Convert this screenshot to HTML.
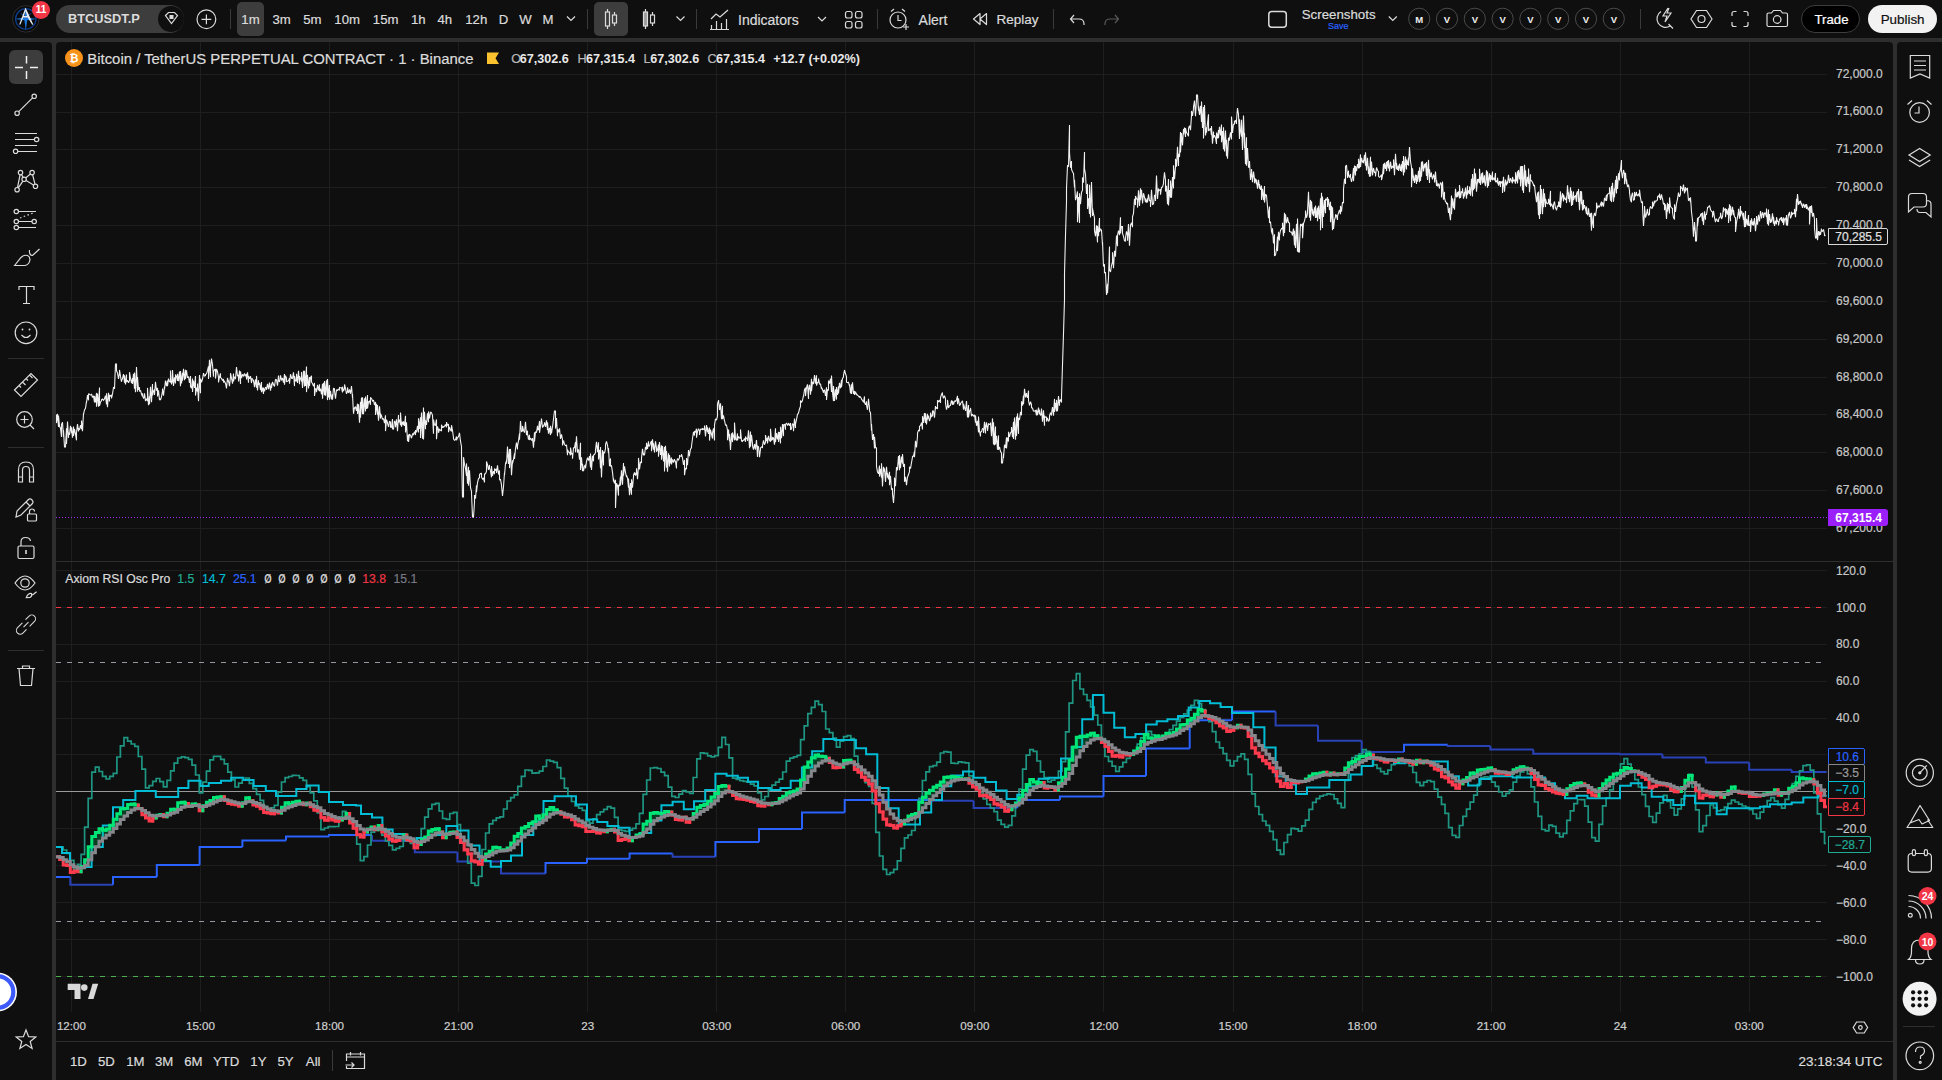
<!DOCTYPE html><html><head><meta charset="utf-8"><style>
html,body{margin:0;padding:0;}
body{width:1942px;height:1080px;overflow:hidden;background:#2e2e2e;position:relative;font-family:"Liberation Sans", sans-serif;}
.p{position:absolute;background:#0f0f0f;}
.t{position:absolute;white-space:nowrap;font-family:"Liberation Sans", sans-serif;-webkit-text-stroke:0.2px currentColor;}
#ch{position:absolute;left:0;top:0;}
.ic{position:absolute;}

</style></head><body>
<div class="p" style="left:0;top:0;width:1942px;height:38px;"></div>
<div class="p" style="left:0;top:42px;width:52px;height:1038px;border-top-right-radius:4px;"></div>
<div class="p" style="left:56px;top:42px;width:1837px;height:1038px;border-top-left-radius:4px;border-top-right-radius:4px;"></div>
<div class="p" style="left:1897px;top:42px;width:45px;height:1038px;border-top-left-radius:4px;"></div>
<svg id="ch" width="1942" height="1080" viewBox="0 0 1942 1080"><defs><clipPath id="cp"><rect x="56" y="42" width="1771" height="1000"/></clipPath></defs><g clip-path="url(#cp)"><line x1="56" y1="74.5" x2="1827" y2="74.5" stroke="#1e1e1e" stroke-width="1"/><line x1="56" y1="112.5" x2="1827" y2="112.5" stroke="#1e1e1e" stroke-width="1"/><line x1="56" y1="149.5" x2="1827" y2="149.5" stroke="#1e1e1e" stroke-width="1"/><line x1="56" y1="187.5" x2="1827" y2="187.5" stroke="#1e1e1e" stroke-width="1"/><line x1="56" y1="225.5" x2="1827" y2="225.5" stroke="#1e1e1e" stroke-width="1"/><line x1="56" y1="263.5" x2="1827" y2="263.5" stroke="#1e1e1e" stroke-width="1"/><line x1="56" y1="301.5" x2="1827" y2="301.5" stroke="#1e1e1e" stroke-width="1"/><line x1="56" y1="339.5" x2="1827" y2="339.5" stroke="#1e1e1e" stroke-width="1"/><line x1="56" y1="377.5" x2="1827" y2="377.5" stroke="#1e1e1e" stroke-width="1"/><line x1="56" y1="414.5" x2="1827" y2="414.5" stroke="#1e1e1e" stroke-width="1"/><line x1="56" y1="452.5" x2="1827" y2="452.5" stroke="#1e1e1e" stroke-width="1"/><line x1="56" y1="490.5" x2="1827" y2="490.5" stroke="#1e1e1e" stroke-width="1"/><line x1="56" y1="528.5" x2="1827" y2="528.5" stroke="#1e1e1e" stroke-width="1"/><line x1="56" y1="570.5" x2="1827" y2="570.5" stroke="#1e1e1e" stroke-width="1"/><line x1="56" y1="607.5" x2="1827" y2="607.5" stroke="#1e1e1e" stroke-width="1"/><line x1="56" y1="644.5" x2="1827" y2="644.5" stroke="#1e1e1e" stroke-width="1"/><line x1="56" y1="681.5" x2="1827" y2="681.5" stroke="#1e1e1e" stroke-width="1"/><line x1="56" y1="718.5" x2="1827" y2="718.5" stroke="#1e1e1e" stroke-width="1"/><line x1="56" y1="754.5" x2="1827" y2="754.5" stroke="#1e1e1e" stroke-width="1"/><line x1="56" y1="791.5" x2="1827" y2="791.5" stroke="#1e1e1e" stroke-width="1"/><line x1="56" y1="828.5" x2="1827" y2="828.5" stroke="#1e1e1e" stroke-width="1"/><line x1="56" y1="865.5" x2="1827" y2="865.5" stroke="#1e1e1e" stroke-width="1"/><line x1="56" y1="902.5" x2="1827" y2="902.5" stroke="#1e1e1e" stroke-width="1"/><line x1="56" y1="939.5" x2="1827" y2="939.5" stroke="#1e1e1e" stroke-width="1"/><line x1="56" y1="976.5" x2="1827" y2="976.5" stroke="#1e1e1e" stroke-width="1"/><line x1="71.5" y1="42" x2="71.5" y2="1012" stroke="#1e1e1e" stroke-width="1"/><line x1="200.5" y1="42" x2="200.5" y2="1012" stroke="#1e1e1e" stroke-width="1"/><line x1="329.5" y1="42" x2="329.5" y2="1012" stroke="#1e1e1e" stroke-width="1"/><line x1="458.5" y1="42" x2="458.5" y2="1012" stroke="#1e1e1e" stroke-width="1"/><line x1="587.5" y1="42" x2="587.5" y2="1012" stroke="#1e1e1e" stroke-width="1"/><line x1="716.5" y1="42" x2="716.5" y2="1012" stroke="#1e1e1e" stroke-width="1"/><line x1="845.5" y1="42" x2="845.5" y2="1012" stroke="#1e1e1e" stroke-width="1"/><line x1="974.5" y1="42" x2="974.5" y2="1012" stroke="#1e1e1e" stroke-width="1"/><line x1="1103.5" y1="42" x2="1103.5" y2="1012" stroke="#1e1e1e" stroke-width="1"/><line x1="1233.5" y1="42" x2="1233.5" y2="1012" stroke="#1e1e1e" stroke-width="1"/><line x1="1362.5" y1="42" x2="1362.5" y2="1012" stroke="#1e1e1e" stroke-width="1"/><line x1="1491.5" y1="42" x2="1491.5" y2="1012" stroke="#1e1e1e" stroke-width="1"/><line x1="1620.5" y1="42" x2="1620.5" y2="1012" stroke="#1e1e1e" stroke-width="1"/><line x1="1749.5" y1="42" x2="1749.5" y2="1012" stroke="#1e1e1e" stroke-width="1"/><line x1="56" y1="517.5" x2="1827" y2="517.5" stroke="#9c27ff" stroke-width="1" stroke-dasharray="1 2"/><path d="M56.5 414.5 L56.5 423.1 L57.5 413.7 L58.5 426.9 L58.5 415.5 L59.5 426.4 L60.5 428.1 L61.5 437.0 L61.5 424.3 L62.5 422.3 L63.5 436.6 L63.5 430.4 L64.5 447.0 L65.5 447.0 L66.5 428.2 L66.5 444.1 L67.5 421.6 L68.5 437.9 L68.5 432.6 L69.5 434.9 L70.5 425.8 L71.5 433.2 L71.5 427.2 L72.5 437.6 L73.5 426.5 L73.5 435.8 L74.5 428.8 L75.5 434.1 L76.5 440.3 L76.5 432.7 L77.5 424.1 L78.5 431.4 L78.5 428.5 L79.5 429.8 L80.5 425.0 L81.5 429.2 L81.5 420.5 L82.5 431.3 L83.5 413.2 L83.5 414.3 L84.5 410.0 L85.5 408.3 L86.5 401.3 L86.5 402.6 L87.5 395.1 L88.5 400.3 L88.5 393.7 L89.5 394.3 L90.5 395.0 L91.5 395.0 L91.5 393.8 L92.5 397.5 L93.5 395.9 L94.5 402.3 L94.5 395.9 L95.5 402.3 L96.5 392.9 L96.5 406.7 L97.5 393.5 L98.5 406.7 L99.5 387.6 L99.5 405.8 L100.5 402.0 L101.5 400.9 L101.5 399.8 L102.5 399.1 L103.5 400.3 L104.5 398.9 L104.5 398.7 L105.5 395.7 L106.5 404.5 L106.5 393.2 L107.5 407.3 L108.5 392.8 L109.5 401.4 L109.5 395.0 L110.5 396.1 L111.5 394.7 L111.5 398.5 L112.5 394.0 L113.5 387.4 L114.5 387.2 L114.5 388.9 L115.5 364.0 L116.5 364.0 L116.5 370.8 L117.5 373.0 L118.5 379.0 L119.5 372.9 L119.5 369.9 L120.5 376.4 L121.5 381.8 L121.5 381.1 L122.5 378.6 L123.5 374.0 L124.5 382.8 L124.5 375.3 L125.5 384.4 L126.5 374.6 L126.5 381.9 L127.5 380.3 L128.5 382.8 L129.5 380.4 L129.5 372.2 L130.5 378.2 L131.5 383.1 L132.5 378.0 L132.5 384.0 L133.5 373.9 L134.5 388.8 L134.5 372.5 L135.5 392.3 L136.5 367.1 L137.5 391.7 L137.5 377.0 L138.5 389.7 L139.5 387.3 L139.5 391.5 L140.5 390.4 L141.5 394.1 L142.5 396.5 L142.5 393.3 L143.5 398.6 L144.5 396.6 L144.5 393.2 L145.5 401.1 L146.5 398.6 L147.5 401.0 L147.5 387.9 L148.5 405.2 L149.5 396.2 L149.5 404.2 L150.5 386.8 L151.5 402.2 L152.5 384.1 L152.5 395.5 L153.5 391.1 L154.5 389.5 L154.5 395.0 L155.5 381.8 L156.5 390.7 L157.5 387.9 L157.5 396.5 L158.5 390.3 L159.5 400.1 L159.5 398.2 L160.5 400.0 L161.5 396.6 L162.5 391.0 L162.5 388.5 L163.5 395.7 L164.5 386.5 L164.5 389.2 L165.5 380.6 L166.5 386.2 L167.5 380.6 L167.5 386.2 L168.5 378.6 L169.5 381.5 L170.5 382.0 L170.5 370.5 L171.5 384.5 L172.5 380.1 L172.5 370.0 L173.5 385.9 L174.5 377.2 L175.5 383.5 L175.5 374.5 L176.5 376.7 L177.5 381.0 L177.5 373.7 L178.5 381.2 L179.5 371.6 L180.5 386.2 L180.5 371.0 L181.5 383.4 L182.5 372.7 L182.5 380.7 L183.5 368.7 L184.5 380.2 L185.5 369.8 L185.5 379.0 L186.5 370.3 L187.5 378.0 L187.5 377.7 L188.5 376.6 L189.5 382.8 L190.5 376.1 L190.5 386.5 L191.5 388.1 L192.5 378.6 L192.5 392.0 L193.5 380.5 L194.5 387.9 L195.5 376.1 L195.5 395.6 L196.5 387.6 L197.5 391.7 L197.5 383.6 L198.5 401.3 L199.5 375.1 L200.5 393.2 L200.5 378.6 L201.5 382.3 L202.5 379.0 L202.5 379.1 L203.5 373.1 L204.5 376.1 L205.5 375.7 L205.5 374.6 L206.5 373.8 L207.5 370.5 L208.5 366.3 L208.5 378.9 L209.5 359.8 L210.5 377.2 L210.5 369.6 L211.5 358.5 L212.5 364.5 L213.5 376.7 L213.5 372.0 L214.5 369.6 L215.5 369.4 L215.5 378.6 L216.5 369.0 L217.5 371.6 L218.5 377.4 L218.5 382.4 L219.5 376.8 L220.5 373.3 L220.5 377.6 L221.5 378.4 L222.5 380.6 L223.5 379.1 L223.5 382.4 L224.5 381.3 L225.5 383.5 L225.5 383.1 L226.5 388.5 L227.5 378.0 L228.5 382.0 L228.5 380.5 L229.5 386.2 L230.5 376.9 L230.5 373.2 L231.5 378.0 L232.5 383.7 L233.5 373.6 L233.5 381.3 L234.5 377.2 L235.5 376.6 L235.5 379.2 L236.5 367.1 L237.5 376.1 L238.5 375.1 L238.5 381.5 L239.5 370.6 L240.5 384.0 L240.5 371.4 L241.5 378.2 L242.5 374.4 L243.5 376.0 L243.5 376.5 L244.5 373.4 L245.5 376.3 L246.5 374.0 L246.5 379.4 L247.5 372.3 L248.5 382.7 L248.5 375.9 L249.5 378.7 L250.5 376.1 L251.5 383.1 L251.5 378.8 L252.5 378.8 L253.5 382.2 L253.5 379.9 L254.5 387.1 L255.5 379.4 L256.5 387.7 L256.5 375.9 L257.5 390.5 L258.5 380.2 L258.5 384.8 L259.5 382.7 L260.5 390.1 L261.5 382.0 L261.5 392.2 L262.5 387.5 L263.5 394.0 L263.5 387.6 L264.5 391.3 L265.5 387.4 L266.5 387.6 L266.5 389.8 L267.5 383.8 L268.5 388.8 L268.5 389.2 L269.5 382.5 L270.5 390.8 L271.5 383.5 L271.5 387.8 L272.5 381.9 L273.5 384.3 L273.5 384.7 L274.5 386.5 L275.5 379.2 L276.5 380.2 L276.5 379.9 L277.5 385.7 L278.5 375.6 L278.5 379.8 L279.5 381.9 L280.5 375.3 L281.5 380.6 L281.5 380.4 L282.5 378.0 L283.5 382.6 L284.5 374.0 L284.5 384.7 L285.5 375.6 L286.5 378.2 L286.5 381.8 L287.5 381.2 L288.5 380.7 L289.5 378.1 L289.5 383.7 L290.5 374.2 L291.5 377.5 L291.5 378.2 L292.5 378.4 L293.5 372.4 L294.5 386.1 L294.5 376.0 L295.5 380.8 L296.5 380.9 L296.5 373.8 L297.5 383.0 L298.5 370.8 L299.5 384.2 L299.5 376.3 L300.5 378.6 L301.5 381.7 L301.5 372.1 L302.5 387.9 L303.5 370.7 L304.5 386.4 L304.5 370.8 L305.5 386.0 L306.5 366.5 L306.5 392.1 L307.5 374.9 L308.5 388.4 L309.5 377.1 L309.5 386.0 L310.5 377.7 L311.5 375.8 L311.5 382.1 L312.5 383.5 L313.5 386.2 L314.5 383.0 L314.5 396.0 L315.5 388.7 L316.5 389.1 L316.5 392.2 L317.5 384.9 L318.5 390.3 L319.5 384.3 L319.5 391.3 L320.5 388.5 L321.5 394.4 L322.5 383.7 L322.5 398.7 L323.5 382.9 L324.5 395.3 L324.5 381.0 L325.5 395.8 L326.5 380.3 L327.5 400.1 L327.5 379.1 L328.5 397.5 L329.5 385.0 L329.5 399.7 L330.5 390.8 L331.5 399.5 L332.5 394.4 L332.5 399.8 L333.5 388.1 L334.5 388.8 L334.5 390.8 L335.5 398.7 L336.5 389.7 L337.5 390.8 L337.5 390.0 L338.5 389.2 L339.5 390.3 L339.5 387.5 L340.5 387.7 L341.5 387.8 L342.5 392.4 L342.5 386.7 L343.5 391.1 L344.5 388.4 L344.5 384.4 L345.5 388.4 L346.5 393.9 L347.5 391.1 L347.5 387.4 L348.5 392.8 L349.5 390.2 L349.5 389.3 L350.5 393.8 L351.5 386.1 L352.5 397.7 L352.5 394.4 L353.5 413.7 L354.5 407.3 L354.5 408.7 L355.5 406.6 L356.5 410.8 L357.5 403.7 L357.5 414.0 L358.5 404.4 L359.5 422.7 L360.5 401.9 L360.5 417.7 L361.5 397.6 L362.5 414.1 L362.5 397.2 L363.5 414.2 L364.5 398.3 L365.5 411.4 L365.5 396.6 L366.5 408.9 L367.5 395.1 L367.5 408.3 L368.5 401.8 L369.5 401.2 L370.5 404.8 L370.5 397.5 L371.5 398.5 L372.5 400.6 L372.5 401.5 L373.5 400.1 L374.5 405.1 L375.5 401.9 L375.5 415.0 L376.5 403.9 L377.5 414.6 L377.5 405.0 L378.5 420.8 L379.5 406.4 L380.5 418.6 L380.5 413.8 L381.5 415.7 L382.5 419.5 L382.5 418.4 L383.5 418.8 L384.5 423.0 L385.5 415.3 L385.5 431.1 L386.5 419.6 L387.5 422.3 L387.5 423.1 L388.5 426.8 L389.5 421.6 L390.5 422.0 L390.5 427.2 L391.5 427.1 L392.5 419.0 L392.5 428.8 L393.5 429.1 L394.5 420.9 L395.5 423.2 L395.5 427.3 L396.5 419.2 L397.5 431.2 L398.5 415.0 L398.5 422.6 L399.5 419.5 L400.5 425.1 L400.5 412.5 L401.5 426.8 L402.5 421.5 L403.5 425.0 L403.5 421.3 L404.5 426.0 L405.5 415.8 L405.5 432.5 L406.5 422.4 L407.5 441.2 L408.5 434.5 L408.5 441.9 L409.5 434.1 L410.5 435.4 L410.5 435.4 L411.5 438.2 L412.5 434.1 L413.5 435.0 L413.5 434.0 L414.5 431.6 L415.5 435.1 L415.5 430.1 L416.5 432.4 L417.5 425.9 L418.5 432.5 L418.5 418.3 L419.5 429.0 L420.5 417.2 L420.5 438.1 L421.5 412.4 L422.5 438.7 L423.5 407.4 L423.5 439.4 L424.5 411.7 L425.5 429.3 L425.5 420.4 L426.5 424.9 L427.5 413.4 L428.5 422.2 L428.5 411.4 L429.5 418.5 L430.5 412.1 L430.5 412.0 L431.5 412.9 L432.5 415.4 L433.5 433.8 L433.5 419.5 L434.5 424.9 L435.5 425.2 L436.5 419.4 L436.5 439.3 L437.5 426.3 L438.5 429.9 L438.5 432.8 L439.5 429.0 L440.5 430.4 L441.5 431.1 L441.5 424.7 L442.5 427.7 L443.5 426.2 L443.5 427.5 L444.5 426.2 L445.5 424.5 L446.5 427.3 L446.5 422.1 L447.5 425.3 L448.5 424.0 L448.5 432.2 L449.5 426.9 L450.5 430.0 L451.5 431.3 L451.5 425.2 L452.5 430.5 L453.5 437.7 L453.5 438.8 L454.5 440.2 L455.5 439.7 L456.5 436.4 L456.5 440.2 L457.5 437.7 L458.5 436.7 L458.5 436.5 L459.5 432.9 L460.5 441.1 L461.5 446.5 L461.5 454.3 L462.5 497.0 L463.5 497.0 L463.5 457.2 L464.5 464.2 L465.5 468.4 L466.5 475.9 L466.5 463.4 L467.5 483.6 L468.5 466.8 L468.5 485.8 L469.5 470.2 L470.5 487.6 L471.5 491.4 L471.5 493.3 L472.5 517.0 L473.5 517.0 L474.5 502.3 L474.5 495.1 L475.5 498.7 L476.5 485.3 L476.5 492.1 L477.5 482.6 L478.5 478.6 L479.5 477.7 L479.5 474.8 L480.5 473.5 L481.5 473.4 L481.5 477.0 L482.5 479.2 L483.5 478.3 L484.5 482.4 L484.5 474.0 L485.5 473.7 L486.5 471.1 L486.5 461.5 L487.5 464.7 L488.5 469.8 L489.5 464.9 L489.5 467.3 L490.5 470.9 L491.5 477.3 L491.5 466.1 L492.5 475.8 L493.5 471.1 L494.5 474.2 L494.5 468.5 L495.5 470.2 L496.5 468.9 L496.5 472.9 L497.5 465.2 L498.5 474.5 L499.5 470.5 L499.5 479.8 L500.5 479.4 L501.5 484.8 L501.5 485.5 L502.5 496.0 L503.5 486.7 L504.5 472.8 L504.5 475.3 L505.5 463.5 L506.5 460.7 L506.5 463.6 L507.5 446.5 L508.5 463.9 L509.5 449.0 L509.5 468.1 L510.5 448.9 L511.5 475.2 L512.5 460.2 L512.5 463.5 L513.5 459.5 L514.5 453.4 L514.5 459.0 L515.5 448.6 L516.5 442.6 L517.5 449.5 L517.5 445.9 L518.5 440.8 L519.5 433.5 L519.5 439.7 L520.5 421.0 L521.5 432.0 L522.5 430.7 L522.5 425.9 L523.5 430.4 L524.5 432.5 L524.5 432.8 L525.5 421.7 L526.5 435.2 L527.5 430.7 L527.5 433.5 L528.5 439.6 L529.5 434.8 L529.5 440.1 L530.5 437.9 L531.5 440.1 L532.5 439.5 L532.5 438.1 L533.5 447.6 L534.5 432.4 L534.5 441.5 L535.5 431.7 L536.5 432.6 L537.5 425.8 L537.5 429.9 L538.5 429.6 L539.5 421.1 L539.5 432.8 L540.5 426.0 L541.5 418.5 L542.5 427.8 L542.5 427.4 L543.5 425.9 L544.5 423.7 L544.5 422.3 L545.5 426.9 L546.5 420.3 L547.5 430.0 L547.5 422.4 L548.5 433.6 L549.5 427.8 L550.5 435.1 L550.5 425.7 L551.5 433.4 L552.5 426.6 L552.5 427.2 L553.5 419.0 L554.5 411.0 L555.5 411.0 L555.5 428.6 L556.5 418.1 L557.5 436.2 L557.5 428.8 L558.5 432.3 L559.5 428.3 L560.5 439.0 L560.5 438.5 L561.5 434.3 L562.5 439.6 L562.5 445.4 L563.5 440.5 L564.5 444.3 L565.5 445.7 L565.5 446.0 L566.5 444.8 L567.5 455.2 L567.5 449.7 L568.5 452.0 L569.5 452.5 L570.5 455.3 L570.5 447.6 L571.5 453.9 L572.5 453.4 L572.5 458.7 L573.5 447.8 L574.5 447.5 L575.5 442.0 L575.5 452.2 L576.5 436.2 L577.5 452.7 L577.5 450.7 L578.5 449.6 L579.5 459.8 L580.5 442.8 L580.5 469.9 L581.5 457.4 L582.5 471.3 L582.5 463.7 L583.5 471.2 L584.5 465.9 L585.5 464.8 L585.5 468.5 L586.5 461.3 L587.5 457.6 L588.5 460.6 L588.5 460.6 L589.5 456.0 L590.5 467.4 L590.5 453.6 L591.5 469.9 L592.5 455.9 L593.5 461.3 L593.5 455.0 L594.5 454.5 L595.5 452.6 L595.5 449.7 L596.5 441.7 L597.5 452.2 L598.5 442.2 L598.5 459.5 L599.5 449.8 L600.5 468.1 L600.5 447.0 L601.5 477.6 L602.5 450.0 L603.5 465.4 L603.5 451.7 L604.5 453.3 L605.5 448.6 L605.5 444.7 L606.5 441.3 L607.5 445.3 L608.5 453.1 L608.5 448.1 L609.5 466.2 L610.5 458.4 L610.5 466.1 L611.5 465.8 L612.5 472.4 L613.5 481.7 L613.5 478.7 L614.5 483.5 L615.5 479.8 L615.5 508.0 L616.5 483.2 L617.5 485.6 L618.5 495.6 L618.5 484.9 L619.5 486.2 L620.5 476.5 L620.5 485.4 L621.5 470.4 L622.5 484.6 L623.5 463.1 L623.5 475.8 L624.5 466.4 L625.5 472.3 L626.5 477.2 L626.5 475.4 L627.5 478.0 L628.5 487.6 L628.5 478.5 L629.5 495.3 L630.5 483.0 L631.5 494.8 L631.5 479.3 L632.5 487.8 L633.5 476.7 L633.5 475.2 L634.5 472.5 L635.5 475.6 L636.5 471.7 L636.5 468.3 L637.5 479.2 L638.5 466.5 L638.5 457.9 L639.5 469.4 L640.5 461.8 L641.5 463.0 L641.5 458.1 L642.5 448.9 L643.5 455.4 L643.5 453.8 L644.5 455.1 L645.5 446.7 L646.5 449.7 L646.5 442.8 L647.5 449.0 L648.5 441.2 L648.5 445.9 L649.5 446.0 L650.5 442.9 L651.5 441.0 L651.5 451.3 L652.5 439.3 L653.5 449.8 L653.5 443.3 L654.5 452.5 L655.5 441.4 L656.5 448.1 L656.5 451.7 L657.5 449.9 L658.5 444.5 L658.5 456.7 L659.5 442.0 L660.5 455.0 L661.5 445.3 L661.5 459.8 L662.5 446.1 L663.5 461.5 L664.5 446.9 L664.5 471.4 L665.5 445.8 L666.5 467.6 L666.5 451.0 L667.5 471.6 L668.5 453.3 L669.5 466.5 L669.5 455.1 L670.5 463.4 L671.5 457.5 L671.5 464.4 L672.5 459.3 L673.5 462.6 L674.5 459.1 L674.5 459.8 L675.5 461.7 L676.5 468.5 L676.5 462.9 L677.5 458.6 L678.5 459.9 L679.5 457.6 L679.5 455.6 L680.5 456.1 L681.5 456.2 L681.5 454.2 L682.5 458.1 L683.5 464.8 L684.5 459.9 L684.5 475.2 L685.5 468.1 L686.5 469.2 L686.5 458.0 L687.5 465.2 L688.5 450.0 L689.5 456.3 L689.5 454.9 L690.5 449.1 L691.5 447.6 L691.5 446.2 L692.5 438.5 L693.5 431.9 L694.5 435.6 L694.5 431.3 L695.5 432.0 L696.5 428.7 L696.5 437.7 L697.5 431.6 L698.5 428.6 L699.5 430.9 L699.5 435.0 L700.5 429.2 L701.5 429.1 L702.5 429.9 L702.5 428.2 L703.5 429.2 L704.5 429.7 L704.5 425.5 L705.5 436.5 L706.5 425.0 L707.5 432.3 L707.5 427.3 L708.5 434.0 L709.5 427.6 L709.5 440.6 L710.5 429.5 L711.5 434.3 L712.5 438.5 L712.5 433.0 L713.5 428.3 L714.5 440.4 L714.5 424.8 L715.5 418.9 L716.5 420.1 L717.5 416.2 L717.5 404.3 L718.5 400.0 L719.5 409.9 L719.5 410.1 L720.5 403.4 L721.5 419.3 L722.5 405.8 L722.5 419.0 L723.5 415.4 L724.5 421.1 L724.5 420.5 L725.5 425.1 L726.5 425.0 L727.5 430.4 L727.5 440.3 L728.5 429.6 L729.5 441.1 L729.5 434.0 L730.5 450.0 L731.5 433.2 L732.5 442.1 L732.5 432.5 L733.5 436.2 L734.5 440.3 L734.5 422.6 L735.5 438.9 L736.5 440.4 L737.5 433.4 L737.5 440.4 L738.5 436.4 L739.5 438.1 L740.5 438.3 L740.5 429.4 L741.5 440.8 L742.5 441.8 L742.5 440.7 L743.5 440.4 L744.5 438.5 L745.5 441.8 L745.5 436.6 L746.5 438.7 L747.5 438.8 L747.5 440.9 L748.5 430.4 L749.5 448.1 L750.5 431.6 L750.5 446.8 L751.5 434.7 L752.5 443.6 L752.5 445.9 L753.5 449.7 L754.5 444.2 L755.5 449.6 L755.5 448.0 L756.5 440.0 L757.5 456.9 L757.5 446.0 L758.5 446.8 L759.5 457.1 L760.5 449.1 L760.5 447.9 L761.5 447.0 L762.5 447.5 L762.5 445.6 L763.5 440.4 L764.5 444.7 L765.5 442.1 L765.5 435.0 L766.5 441.1 L767.5 437.7 L767.5 443.5 L768.5 435.8 L769.5 440.2 L770.5 441.8 L770.5 428.8 L771.5 440.4 L772.5 439.3 L772.5 437.2 L773.5 438.0 L774.5 444.7 L775.5 428.2 L775.5 442.3 L776.5 433.1 L777.5 439.4 L778.5 431.8 L778.5 442.0 L779.5 432.0 L780.5 443.4 L780.5 426.8 L781.5 438.1 L782.5 424.0 L783.5 436.1 L783.5 425.3 L784.5 424.0 L785.5 429.7 L785.5 424.8 L786.5 423.0 L787.5 425.1 L788.5 423.7 L788.5 423.0 L789.5 425.7 L790.5 423.1 L790.5 429.8 L791.5 428.9 L792.5 423.6 L793.5 425.1 L793.5 431.3 L794.5 418.6 L795.5 428.0 L795.5 424.2 L796.5 419.6 L797.5 414.3 L798.5 413.1 L798.5 412.9 L799.5 409.0 L800.5 406.3 L800.5 400.5 L801.5 402.5 L802.5 400.3 L803.5 395.5 L803.5 396.7 L804.5 389.6 L805.5 387.8 L805.5 396.1 L806.5 387.6 L807.5 384.4 L808.5 398.9 L808.5 390.6 L809.5 384.9 L810.5 394.6 L811.5 378.7 L811.5 391.2 L812.5 381.8 L813.5 383.5 L813.5 384.3 L814.5 375.0 L815.5 383.7 L816.5 375.3 L816.5 385.6 L817.5 382.5 L818.5 382.1 L818.5 378.6 L819.5 384.0 L820.5 384.1 L821.5 389.1 L821.5 387.4 L822.5 389.5 L823.5 392.8 L823.5 390.8 L824.5 390.2 L825.5 395.8 L826.5 387.3 L826.5 400.0 L827.5 389.5 L828.5 390.4 L828.5 380.6 L829.5 383.6 L830.5 378.6 L831.5 391.9 L831.5 375.6 L832.5 392.8 L833.5 401.1 L833.5 386.1 L834.5 400.9 L835.5 389.2 L836.5 399.6 L836.5 387.0 L837.5 395.0 L838.5 386.4 L838.5 393.4 L839.5 382.9 L840.5 388.3 L841.5 379.7 L841.5 387.3 L842.5 378.5 L843.5 377.0 L843.5 375.4 L844.5 370.0 L845.5 373.8 L846.5 376.6 L846.5 382.1 L847.5 382.7 L848.5 382.3 L849.5 386.2 L849.5 384.3 L850.5 393.4 L851.5 384.3 L851.5 393.9 L852.5 382.4 L853.5 393.9 L854.5 390.9 L854.5 394.9 L855.5 391.6 L856.5 395.0 L856.5 393.7 L857.5 395.2 L858.5 396.2 L859.5 397.4 L859.5 396.2 L860.5 397.1 L861.5 398.8 L861.5 399.2 L862.5 400.5 L863.5 402.2 L864.5 396.4 L864.5 402.5 L865.5 404.9 L866.5 401.3 L866.5 405.0 L867.5 409.8 L868.5 398.8 L869.5 408.5 L869.5 410.7 L870.5 413.0 L871.5 430.7 L871.5 424.1 L872.5 439.9 L873.5 434.0 L874.5 448.5 L874.5 436.8 L875.5 447.6 L876.5 447.9 L876.5 466.4 L877.5 472.1 L878.5 473.7 L879.5 465.5 L879.5 476.6 L880.5 468.9 L881.5 477.7 L881.5 463.2 L882.5 486.5 L883.5 466.9 L884.5 472.0 L884.5 468.2 L885.5 481.9 L886.5 466.8 L887.5 477.6 L887.5 473.0 L888.5 479.5 L889.5 471.7 L889.5 485.3 L890.5 475.8 L891.5 489.7 L892.5 488.4 L892.5 493.6 L893.5 503.0 L894.5 489.8 L894.5 477.5 L895.5 486.3 L896.5 467.1 L897.5 470.3 L897.5 468.9 L898.5 456.0 L899.5 470.3 L899.5 455.1 L900.5 468.1 L901.5 456.6 L902.5 463.7 L902.5 454.1 L903.5 466.9 L904.5 464.0 L904.5 481.8 L905.5 476.8 L906.5 485.2 L907.5 476.7 L907.5 477.3 L908.5 474.5 L909.5 471.7 L909.5 466.8 L910.5 468.6 L911.5 462.6 L912.5 457.2 L912.5 456.3 L913.5 456.2 L914.5 451.3 L914.5 457.3 L915.5 440.9 L916.5 447.4 L917.5 436.1 L917.5 433.1 L918.5 430.4 L919.5 431.0 L919.5 426.4 L920.5 425.7 L921.5 422.6 L922.5 429.5 L922.5 416.2 L923.5 423.0 L924.5 413.0 L925.5 423.0 L925.5 413.3 L926.5 424.5 L927.5 413.8 L927.5 419.4 L928.5 415.5 L929.5 421.2 L930.5 417.8 L930.5 412.7 L931.5 416.5 L932.5 415.7 L932.5 411.1 L933.5 411.1 L934.5 417.6 L935.5 406.1 L935.5 409.0 L936.5 407.7 L937.5 408.9 L937.5 400.2 L938.5 402.0 L939.5 399.9 L940.5 402.9 L940.5 397.7 L941.5 394.5 L942.5 392.4 L942.5 394.6 L943.5 398.4 L944.5 395.6 L945.5 398.6 L945.5 403.1 L946.5 409.7 L947.5 405.7 L947.5 399.9 L948.5 407.9 L949.5 405.8 L950.5 405.3 L950.5 404.9 L951.5 400.4 L952.5 404.8 L952.5 400.8 L953.5 404.5 L954.5 401.1 L955.5 400.7 L955.5 401.8 L956.5 399.7 L957.5 395.8 L957.5 404.2 L958.5 398.3 L959.5 405.7 L960.5 404.3 L960.5 403.5 L961.5 402.3 L962.5 400.8 L963.5 409.8 L963.5 404.0 L964.5 407.4 L965.5 410.4 L965.5 411.0 L966.5 401.0 L967.5 417.5 L968.5 405.1 L968.5 417.3 L969.5 411.2 L970.5 409.1 L970.5 407.9 L971.5 416.2 L972.5 414.1 L973.5 416.4 L973.5 416.6 L974.5 414.7 L975.5 422.8 L975.5 415.4 L976.5 425.8 L977.5 420.8 L978.5 432.4 L978.5 416.6 L979.5 431.3 L980.5 436.4 L980.5 432.0 L981.5 431.7 L982.5 428.6 L983.5 429.2 L983.5 433.0 L984.5 421.7 L985.5 433.4 L985.5 428.4 L986.5 422.4 L987.5 430.9 L988.5 423.3 L988.5 424.9 L989.5 424.1 L990.5 424.8 L990.5 422.5 L991.5 436.1 L992.5 418.4 L993.5 444.5 L993.5 422.2 L994.5 445.3 L995.5 426.5 L995.5 444.5 L996.5 435.7 L997.5 449.6 L998.5 435.4 L998.5 449.8 L999.5 446.8 L1000.5 451.3 L1001.5 453.2 L1001.5 463.0 L1002.5 463.0 L1003.5 453.9 L1003.5 458.0 L1004.5 444.7 L1005.5 447.9 L1006.5 437.3 L1006.5 448.4 L1007.5 437.5 L1008.5 441.6 L1008.5 431.8 L1009.5 437.0 L1010.5 432.7 L1011.5 431.7 L1011.5 427.0 L1012.5 437.3 L1013.5 421.9 L1013.5 438.9 L1014.5 417.5 L1015.5 439.8 L1016.5 416.6 L1016.5 436.1 L1017.5 413.4 L1018.5 433.9 L1018.5 418.0 L1019.5 419.9 L1020.5 411.9 L1021.5 415.3 L1021.5 401.3 L1022.5 405.6 L1023.5 395.5 L1023.5 404.2 L1024.5 388.8 L1025.5 397.4 L1026.5 393.1 L1026.5 394.9 L1027.5 397.7 L1028.5 390.7 L1028.5 400.5 L1029.5 405.5 L1030.5 401.6 L1031.5 404.7 L1031.5 407.8 L1032.5 408.0 L1033.5 411.3 L1033.5 410.7 L1034.5 411.2 L1035.5 410.6 L1036.5 415.5 L1036.5 409.7 L1037.5 415.1 L1038.5 407.6 L1039.5 414.5 L1039.5 409.8 L1040.5 415.5 L1041.5 413.4 L1041.5 408.6 L1042.5 421.8 L1043.5 410.4 L1044.5 425.7 L1044.5 415.7 L1045.5 417.2 L1046.5 417.1 L1046.5 421.6 L1047.5 417.9 L1048.5 421.4 L1049.5 419.8 L1049.5 415.9 L1050.5 412.7 L1051.5 415.6 L1051.5 413.8 L1052.5 407.0 L1053.5 415.7 L1054.5 398.9 L1054.5 412.0 L1055.5 402.8 L1056.5 411.5 L1056.5 399.9 L1057.5 411.2 L1058.5 396.0 L1059.5 405.7 L1059.5 402.1 L1060.5 399.4 L1061.5 402.6 L1061.5 396.8 L1062.5 365.3 L1063.5 333.6 L1064.5 299.2 L1064.5 273.8 L1065.5 235.2 L1066.5 201.8 L1066.5 188.4 L1067.5 165.6 L1068.5 166.2 L1069.5 125.0 L1069.5 152.3 L1070.5 167.8 L1071.5 161.1 L1071.5 169.3 L1072.5 171.7 L1073.5 173.5 L1074.5 187.5 L1074.5 179.7 L1075.5 200.2 L1076.5 196.7 L1077.5 191.4 L1077.5 222.2 L1078.5 197.1 L1079.5 223.0 L1079.5 193.3 L1080.5 204.1 L1081.5 192.5 L1082.5 190.2 L1082.5 177.4 L1083.5 182.7 L1084.5 152.0 L1084.5 168.5 L1085.5 174.3 L1086.5 194.0 L1087.5 183.9 L1087.5 208.9 L1088.5 198.4 L1089.5 213.9 L1089.5 184.7 L1090.5 217.5 L1091.5 182.1 L1092.5 216.1 L1092.5 208.3 L1093.5 213.6 L1094.5 218.0 L1094.5 230.7 L1095.5 236.3 L1096.5 225.3 L1097.5 242.4 L1097.5 225.9 L1098.5 236.1 L1099.5 218.1 L1099.5 231.7 L1100.5 228.8 L1101.5 230.4 L1102.5 244.7 L1102.5 242.3 L1103.5 266.6 L1104.5 264.3 L1104.5 272.8 L1105.5 272.5 L1106.5 295.0 L1107.5 283.7 L1107.5 293.3 L1108.5 277.4 L1109.5 246.5 L1109.5 269.7 L1110.5 271.9 L1111.5 265.5 L1112.5 261.8 L1112.5 252.2 L1113.5 268.3 L1114.5 250.9 L1115.5 256.7 L1115.5 255.7 L1116.5 235.5 L1117.5 246.2 L1117.5 235.2 L1118.5 230.7 L1119.5 235.1 L1120.5 217.2 L1120.5 233.4 L1121.5 226.5 L1122.5 226.6 L1122.5 233.3 L1123.5 236.3 L1124.5 240.8 L1125.5 241.0 L1125.5 238.2 L1126.5 231.4 L1127.5 235.0 L1127.5 240.7 L1128.5 224.0 L1129.5 245.8 L1130.5 226.0 L1130.5 225.1 L1131.5 222.7 L1132.5 227.2 L1132.5 216.9 L1133.5 213.3 L1134.5 198.8 L1135.5 205.1 L1135.5 195.9 L1136.5 199.0 L1137.5 198.9 L1137.5 207.6 L1138.5 190.2 L1139.5 205.9 L1140.5 188.3 L1140.5 200.3 L1141.5 189.9 L1142.5 202.1 L1142.5 203.5 L1143.5 193.2 L1144.5 197.1 L1145.5 202.2 L1145.5 198.3 L1146.5 202.6 L1147.5 198.3 L1147.5 202.5 L1148.5 194.4 L1149.5 200.6 L1150.5 200.4 L1150.5 206.9 L1151.5 189.7 L1152.5 204.8 L1153.5 203.6 L1153.5 204.1 L1154.5 195.3 L1155.5 194.9 L1155.5 200.9 L1156.5 175.4 L1157.5 198.9 L1158.5 188.4 L1158.5 191.0 L1159.5 190.0 L1160.5 189.6 L1160.5 194.7 L1161.5 187.5 L1162.5 187.1 L1163.5 183.7 L1163.5 181.7 L1164.5 172.3 L1165.5 180.3 L1165.5 191.6 L1166.5 185.7 L1167.5 204.1 L1168.5 179.0 L1168.5 205.5 L1169.5 190.0 L1170.5 197.8 L1170.5 180.6 L1171.5 197.8 L1172.5 177.1 L1173.5 188.5 L1173.5 165.2 L1174.5 179.3 L1175.5 167.3 L1175.5 158.8 L1176.5 166.6 L1177.5 146.9 L1178.5 166.0 L1178.5 153.9 L1179.5 157.1 L1180.5 132.0 L1180.5 152.5 L1181.5 133.0 L1182.5 145.4 L1183.5 129.1 L1183.5 134.5 L1184.5 127.6 L1185.5 137.0 L1185.5 128.1 L1186.5 132.5 L1187.5 134.0 L1188.5 136.3 L1188.5 128.4 L1189.5 125.6 L1190.5 130.2 L1191.5 115.5 L1191.5 110.9 L1192.5 115.8 L1193.5 108.8 L1193.5 107.0 L1194.5 100.6 L1195.5 116.2 L1196.5 99.1 L1196.5 95.0 L1197.5 95.0 L1198.5 110.6 L1198.5 106.1 L1199.5 114.9 L1200.5 105.7 L1201.5 122.0 L1201.5 101.5 L1202.5 127.9 L1203.5 107.1 L1203.5 138.6 L1204.5 105.1 L1205.5 135.5 L1206.5 127.3 L1206.5 132.6 L1207.5 123.2 L1208.5 114.3 L1208.5 131.0 L1209.5 129.8 L1210.5 128.4 L1211.5 135.2 L1211.5 126.1 L1212.5 143.7 L1213.5 131.6 L1213.5 137.8 L1214.5 135.1 L1215.5 137.8 L1216.5 143.9 L1216.5 132.6 L1217.5 138.4 L1218.5 130.1 L1218.5 138.3 L1219.5 126.7 L1220.5 135.4 L1221.5 124.6 L1221.5 142.2 L1222.5 131.1 L1223.5 149.3 L1223.5 127.3 L1224.5 151.4 L1225.5 130.6 L1226.5 156.2 L1226.5 139.7 L1227.5 158.7 L1228.5 137.8 L1229.5 140.5 L1229.5 138.8 L1230.5 132.3 L1231.5 139.5 L1231.5 116.5 L1232.5 132.9 L1233.5 124.2 L1234.5 124.1 L1234.5 121.4 L1235.5 120.7 L1236.5 123.9 L1236.5 120.7 L1237.5 108.0 L1238.5 114.5 L1239.5 139.0 L1239.5 119.3 L1240.5 131.3 L1241.5 136.6 L1241.5 119.7 L1242.5 149.9 L1243.5 115.6 L1244.5 148.1 L1244.5 133.1 L1245.5 164.2 L1246.5 137.3 L1246.5 165.8 L1247.5 148.0 L1248.5 167.2 L1249.5 167.2 L1249.5 161.0 L1250.5 179.9 L1251.5 172.8 L1251.5 169.1 L1252.5 182.2 L1253.5 171.6 L1254.5 178.9 L1254.5 183.2 L1255.5 178.6 L1256.5 184.2 L1256.5 179.5 L1257.5 188.8 L1258.5 179.8 L1259.5 188.6 L1259.5 184.2 L1260.5 189.9 L1261.5 185.6 L1261.5 199.9 L1262.5 188.9 L1263.5 200.2 L1264.5 186.0 L1264.5 202.6 L1265.5 194.2 L1266.5 195.5 L1267.5 206.8 L1267.5 206.0 L1268.5 218.1 L1269.5 206.5 L1269.5 222.8 L1270.5 221.7 L1271.5 231.4 L1272.5 234.5 L1272.5 228.2 L1273.5 243.4 L1274.5 234.3 L1274.5 255.9 L1275.5 255.0 L1276.5 249.2 L1277.5 236.5 L1277.5 251.1 L1278.5 231.9 L1279.5 240.4 L1279.5 235.5 L1280.5 230.4 L1281.5 228.6 L1282.5 229.1 L1282.5 222.8 L1283.5 236.2 L1284.5 212.7 L1284.5 232.9 L1285.5 214.3 L1286.5 223.1 L1287.5 219.1 L1287.5 217.2 L1288.5 222.6 L1289.5 223.1 L1289.5 231.5 L1290.5 231.9 L1291.5 232.2 L1292.5 235.6 L1292.5 234.3 L1293.5 228.6 L1294.5 245.4 L1294.5 230.7 L1295.5 248.0 L1296.5 223.7 L1297.5 251.8 L1297.5 218.5 L1298.5 252.0 L1299.5 252.0 L1299.5 243.6 L1300.5 224.1 L1301.5 226.0 L1302.5 223.5 L1302.5 238.3 L1303.5 223.6 L1304.5 220.9 L1305.5 216.3 L1305.5 210.5 L1306.5 217.8 L1307.5 213.8 L1307.5 211.2 L1308.5 191.8 L1309.5 217.8 L1310.5 199.9 L1310.5 220.7 L1311.5 201.3 L1312.5 214.4 L1312.5 209.2 L1313.5 216.2 L1314.5 207.3 L1315.5 217.9 L1315.5 205.5 L1316.5 217.7 L1317.5 207.7 L1317.5 221.2 L1318.5 205.8 L1319.5 218.9 L1320.5 198.2 L1320.5 230.3 L1321.5 192.8 L1322.5 228.0 L1322.5 196.6 L1323.5 217.0 L1324.5 200.1 L1325.5 213.2 L1325.5 198.8 L1326.5 200.3 L1327.5 197.1 L1327.5 207.0 L1328.5 198.8 L1329.5 210.1 L1330.5 201.8 L1330.5 222.3 L1331.5 205.7 L1332.5 230.3 L1332.5 207.3 L1333.5 228.9 L1334.5 219.8 L1335.5 216.9 L1335.5 214.4 L1336.5 215.6 L1337.5 219.9 L1337.5 216.0 L1338.5 212.8 L1339.5 210.0 L1340.5 214.2 L1340.5 205.9 L1341.5 211.7 L1342.5 202.0 L1343.5 203.1 L1343.5 189.2 L1344.5 178.8 L1345.5 183.9 L1345.5 166.4 L1346.5 165.0 L1347.5 177.9 L1348.5 170.7 L1348.5 174.7 L1349.5 177.6 L1350.5 174.0 L1350.5 176.8 L1351.5 181.9 L1352.5 177.5 L1353.5 168.1 L1353.5 181.3 L1354.5 165.6 L1355.5 175.5 L1355.5 166.0 L1356.5 171.2 L1357.5 164.2 L1358.5 168.4 L1358.5 158.7 L1359.5 168.2 L1360.5 154.4 L1360.5 167.0 L1361.5 157.8 L1362.5 162.5 L1363.5 160.4 L1363.5 163.2 L1364.5 154.8 L1365.5 165.7 L1365.5 152.3 L1366.5 170.5 L1367.5 157.9 L1368.5 174.0 L1368.5 166.3 L1369.5 176.8 L1370.5 156.8 L1370.5 176.5 L1371.5 161.5 L1372.5 175.5 L1373.5 167.9 L1373.5 168.0 L1374.5 172.6 L1375.5 172.2 L1375.5 176.4 L1376.5 167.5 L1377.5 170.2 L1378.5 171.6 L1378.5 176.3 L1379.5 177.3 L1380.5 176.3 L1381.5 174.5 L1381.5 180.1 L1382.5 175.6 L1383.5 163.9 L1383.5 174.1 L1384.5 162.9 L1385.5 169.0 L1386.5 161.9 L1386.5 171.1 L1387.5 161.0 L1388.5 168.5 L1388.5 160.0 L1389.5 171.5 L1390.5 161.7 L1391.5 168.5 L1391.5 168.8 L1392.5 165.9 L1393.5 167.8 L1393.5 159.4 L1394.5 175.2 L1395.5 153.9 L1396.5 169.2 L1396.5 163.1 L1397.5 169.8 L1398.5 165.6 L1398.5 171.0 L1399.5 163.7 L1400.5 170.8 L1401.5 164.3 L1401.5 171.8 L1402.5 161.1 L1403.5 175.5 L1403.5 156.1 L1404.5 172.5 L1405.5 156.6 L1406.5 169.5 L1406.5 159.6 L1407.5 165.0 L1408.5 157.5 L1408.5 165.7 L1409.5 147.0 L1410.5 161.3 L1411.5 167.2 L1411.5 187.1 L1412.5 168.3 L1413.5 180.6 L1413.5 175.5 L1414.5 183.0 L1415.5 174.6 L1416.5 183.9 L1416.5 174.9 L1417.5 181.6 L1418.5 170.8 L1419.5 182.2 L1419.5 167.3 L1420.5 181.0 L1421.5 161.8 L1421.5 176.7 L1422.5 161.2 L1423.5 171.4 L1424.5 163.9 L1424.5 167.6 L1425.5 163.4 L1426.5 176.0 L1426.5 162.1 L1427.5 179.9 L1428.5 159.9 L1429.5 183.1 L1429.5 169.3 L1430.5 177.2 L1431.5 172.4 L1431.5 175.3 L1432.5 179.3 L1433.5 174.4 L1434.5 178.4 L1434.5 182.4 L1435.5 171.6 L1436.5 186.0 L1436.5 180.1 L1437.5 186.3 L1438.5 183.5 L1439.5 188.6 L1439.5 186.4 L1440.5 182.6 L1441.5 184.4 L1441.5 197.5 L1442.5 181.5 L1443.5 199.6 L1444.5 191.9 L1444.5 197.9 L1445.5 201.7 L1446.5 202.7 L1446.5 204.0 L1447.5 203.1 L1448.5 213.0 L1449.5 207.7 L1449.5 214.0 L1450.5 220.2 L1451.5 195.4 L1451.5 214.1 L1452.5 198.3 L1453.5 208.3 L1454.5 198.5 L1454.5 209.8 L1455.5 188.8 L1456.5 197.5 L1457.5 192.1 L1457.5 196.9 L1458.5 191.4 L1459.5 198.5 L1459.5 185.0 L1460.5 197.8 L1461.5 191.4 L1462.5 192.6 L1462.5 188.2 L1463.5 198.6 L1464.5 192.0 L1464.5 196.4 L1465.5 187.5 L1466.5 198.6 L1467.5 185.8 L1467.5 194.7 L1468.5 190.4 L1469.5 193.9 L1469.5 186.5 L1470.5 195.6 L1471.5 178.7 L1472.5 196.5 L1472.5 174.0 L1473.5 190.2 L1474.5 168.6 L1474.5 188.7 L1475.5 173.3 L1476.5 191.7 L1477.5 179.1 L1477.5 183.5 L1478.5 178.8 L1479.5 183.2 L1479.5 168.7 L1480.5 184.9 L1481.5 173.3 L1482.5 183.6 L1482.5 172.4 L1483.5 182.6 L1484.5 175.3 L1484.5 181.1 L1485.5 186.2 L1486.5 170.2 L1487.5 187.7 L1487.5 171.5 L1488.5 185.9 L1489.5 173.3 L1490.5 181.9 L1490.5 175.1 L1491.5 179.7 L1492.5 171.5 L1492.5 180.2 L1493.5 177.7 L1494.5 180.2 L1495.5 173.1 L1495.5 182.1 L1496.5 180.4 L1497.5 183.2 L1497.5 177.8 L1498.5 185.6 L1499.5 181.2 L1500.5 186.9 L1500.5 181.4 L1501.5 183.1 L1502.5 180.9 L1502.5 193.0 L1503.5 176.7 L1504.5 191.7 L1505.5 180.7 L1505.5 179.5 L1506.5 185.3 L1507.5 181.1 L1507.5 183.8 L1508.5 174.9 L1509.5 183.0 L1510.5 178.2 L1510.5 178.3 L1511.5 180.8 L1512.5 183.3 L1512.5 176.9 L1513.5 181.1 L1514.5 179.7 L1515.5 183.7 L1515.5 172.2 L1516.5 181.4 L1517.5 171.3 L1517.5 183.5 L1518.5 170.0 L1519.5 179.5 L1520.5 166.2 L1520.5 186.4 L1521.5 166.1 L1522.5 190.4 L1522.5 166.0 L1523.5 193.0 L1524.5 164.8 L1525.5 185.8 L1525.5 170.4 L1526.5 187.0 L1527.5 176.7 L1528.5 183.9 L1528.5 168.4 L1529.5 192.2 L1530.5 174.3 L1530.5 179.6 L1531.5 180.9 L1532.5 182.2 L1533.5 184.7 L1533.5 185.9 L1534.5 185.3 L1535.5 194.9 L1535.5 194.5 L1536.5 202.3 L1537.5 192.5 L1538.5 215.2 L1538.5 191.5 L1539.5 219.0 L1540.5 185.0 L1540.5 214.1 L1541.5 189.1 L1542.5 214.3 L1543.5 188.8 L1543.5 207.2 L1544.5 193.2 L1545.5 207.1 L1545.5 198.8 L1546.5 202.9 L1547.5 203.8 L1548.5 202.4 L1548.5 198.8 L1549.5 205.0 L1550.5 190.9 L1550.5 206.7 L1551.5 203.7 L1552.5 206.4 L1553.5 209.6 L1553.5 204.9 L1554.5 201.5 L1555.5 208.5 L1555.5 207.4 L1556.5 210.3 L1557.5 205.9 L1558.5 206.3 L1558.5 201.5 L1559.5 206.8 L1560.5 191.4 L1560.5 207.9 L1561.5 198.3 L1562.5 193.2 L1563.5 201.4 L1563.5 194.7 L1564.5 198.4 L1565.5 200.0 L1566.5 196.6 L1566.5 203.1 L1567.5 185.4 L1568.5 198.9 L1568.5 192.2 L1569.5 202.2 L1570.5 187.2 L1571.5 205.9 L1571.5 190.8 L1572.5 204.9 L1573.5 191.6 L1573.5 200.1 L1574.5 196.5 L1575.5 195.8 L1576.5 201.8 L1576.5 193.8 L1577.5 191.3 L1578.5 201.9 L1578.5 188.9 L1579.5 210.2 L1580.5 191.1 L1581.5 204.3 L1581.5 191.2 L1582.5 210.5 L1583.5 199.7 L1583.5 209.5 L1584.5 205.2 L1585.5 208.9 L1586.5 213.9 L1586.5 206.6 L1587.5 215.3 L1588.5 212.3 L1588.5 208.2 L1589.5 216.9 L1590.5 213.4 L1591.5 230.6 L1591.5 212.7 L1592.5 222.3 L1593.5 228.0 L1593.5 216.8 L1594.5 213.0 L1595.5 216.0 L1596.5 209.3 L1596.5 202.7 L1597.5 208.4 L1598.5 205.6 L1598.5 206.3 L1599.5 206.8 L1600.5 204.2 L1601.5 201.6 L1601.5 206.5 L1602.5 202.4 L1603.5 206.7 L1604.5 197.8 L1604.5 199.4 L1605.5 200.4 L1606.5 194.8 L1606.5 201.0 L1607.5 194.3 L1608.5 193.6 L1609.5 192.9 L1609.5 187.2 L1610.5 200.6 L1611.5 186.0 L1611.5 202.1 L1612.5 182.8 L1613.5 201.6 L1614.5 188.5 L1614.5 197.1 L1615.5 179.7 L1616.5 193.5 L1616.5 175.9 L1617.5 189.0 L1618.5 173.4 L1619.5 180.5 L1619.5 172.8 L1620.5 169.5 L1621.5 160.0 L1621.5 171.5 L1622.5 178.2 L1623.5 170.0 L1624.5 174.0 L1624.5 184.3 L1625.5 172.9 L1626.5 184.3 L1626.5 179.4 L1627.5 186.9 L1628.5 184.7 L1629.5 190.4 L1629.5 192.4 L1630.5 200.1 L1631.5 202.3 L1631.5 196.5 L1632.5 192.7 L1633.5 200.5 L1634.5 199.2 L1634.5 191.9 L1635.5 196.5 L1636.5 191.9 L1636.5 194.2 L1637.5 196.1 L1638.5 193.6 L1639.5 196.5 L1639.5 189.8 L1640.5 198.1 L1641.5 202.9 L1642.5 201.6 L1642.5 207.0 L1643.5 226.0 L1644.5 213.1 L1644.5 206.1 L1645.5 217.6 L1646.5 214.2 L1647.5 208.9 L1647.5 211.1 L1648.5 215.3 L1649.5 214.2 L1649.5 209.9 L1650.5 206.3 L1651.5 208.2 L1652.5 208.0 L1652.5 201.6 L1653.5 206.5 L1654.5 200.7 L1654.5 203.3 L1655.5 201.0 L1656.5 201.0 L1657.5 199.7 L1657.5 196.9 L1658.5 195.5 L1659.5 197.7 L1659.5 193.5 L1660.5 199.8 L1661.5 194.4 L1662.5 199.5 L1662.5 198.4 L1663.5 204.5 L1664.5 203.0 L1664.5 210.2 L1665.5 204.4 L1666.5 219.0 L1667.5 202.7 L1667.5 211.8 L1668.5 204.1 L1669.5 213.5 L1669.5 197.4 L1670.5 206.2 L1671.5 207.9 L1672.5 208.4 L1672.5 212.5 L1673.5 217.6 L1674.5 219.6 L1674.5 204.2 L1675.5 211.9 L1676.5 203.4 L1677.5 199.5 L1677.5 199.1 L1678.5 192.6 L1679.5 196.9 L1680.5 194.1 L1680.5 185.9 L1681.5 188.2 L1682.5 188.1 L1682.5 191.1 L1683.5 184.5 L1684.5 193.5 L1685.5 187.2 L1685.5 191.3 L1686.5 188.9 L1687.5 188.4 L1687.5 190.0 L1688.5 200.7 L1689.5 198.2 L1690.5 202.2 L1690.5 197.2 L1691.5 211.8 L1692.5 220.2 L1692.5 219.4 L1693.5 236.6 L1694.5 222.1 L1695.5 233.6 L1695.5 241.0 L1696.5 241.0 L1697.5 217.7 L1697.5 226.3 L1698.5 217.7 L1699.5 217.0 L1700.5 215.7 L1700.5 214.6 L1701.5 213.2 L1702.5 221.2 L1702.5 212.5 L1703.5 225.0 L1704.5 211.2 L1705.5 219.8 L1705.5 214.8 L1706.5 214.6 L1707.5 208.3 L1707.5 207.4 L1708.5 207.0 L1709.5 205.5 L1710.5 209.3 L1710.5 209.7 L1711.5 211.4 L1712.5 212.1 L1712.5 217.4 L1713.5 210.8 L1714.5 217.3 L1715.5 222.2 L1715.5 221.0 L1716.5 218.8 L1717.5 221.2 L1718.5 221.3 L1718.5 219.6 L1719.5 217.6 L1720.5 216.3 L1720.5 212.8 L1721.5 218.9 L1722.5 216.8 L1723.5 207.3 L1723.5 211.9 L1724.5 209.1 L1725.5 208.7 L1725.5 217.3 L1726.5 209.0 L1727.5 214.6 L1728.5 208.3 L1728.5 222.9 L1729.5 204.4 L1730.5 221.2 L1730.5 205.7 L1731.5 215.4 L1732.5 206.8 L1733.5 215.1 L1733.5 210.2 L1734.5 217.0 L1735.5 217.6 L1735.5 232.0 L1736.5 222.6 L1737.5 217.1 L1738.5 211.1 L1738.5 208.8 L1739.5 218.7 L1740.5 206.1 L1740.5 216.5 L1741.5 210.8 L1742.5 214.4 L1743.5 220.0 L1743.5 212.8 L1744.5 227.1 L1745.5 211.1 L1745.5 226.9 L1746.5 218.9 L1747.5 225.5 L1748.5 215.1 L1748.5 225.3 L1749.5 225.5 L1750.5 220.4 L1750.5 232.0 L1751.5 218.3 L1752.5 225.1 L1753.5 221.3 L1753.5 225.6 L1754.5 218.1 L1755.5 231.3 L1756.5 221.6 L1756.5 216.1 L1757.5 224.7 L1758.5 214.7 L1758.5 215.1 L1759.5 221.5 L1760.5 211.0 L1761.5 217.3 L1761.5 218.5 L1762.5 212.3 L1763.5 215.1 L1763.5 218.0 L1764.5 213.1 L1765.5 213.0 L1766.5 217.1 L1766.5 208.6 L1767.5 224.1 L1768.5 209.6 L1768.5 225.6 L1769.5 214.0 L1770.5 222.9 L1771.5 219.1 L1771.5 222.1 L1772.5 213.4 L1773.5 223.6 L1773.5 216.7 L1774.5 225.9 L1775.5 220.7 L1776.5 224.3 L1776.5 217.2 L1777.5 221.3 L1778.5 221.8 L1778.5 225.4 L1779.5 219.3 L1780.5 218.3 L1781.5 220.9 L1781.5 217.1 L1782.5 222.7 L1783.5 217.4 L1783.5 225.1 L1784.5 219.4 L1785.5 217.7 L1786.5 225.5 L1786.5 215.0 L1787.5 225.7 L1788.5 213.7 L1788.5 215.8 L1789.5 212.0 L1790.5 218.4 L1791.5 215.6 L1791.5 211.7 L1792.5 214.3 L1793.5 213.1 L1794.5 213.6 L1794.5 208.9 L1795.5 217.1 L1796.5 198.7 L1796.5 211.3 L1797.5 194.0 L1798.5 204.9 L1799.5 201.3 L1799.5 203.6 L1800.5 200.8 L1801.5 205.4 L1801.5 203.2 L1802.5 207.8 L1803.5 203.8 L1804.5 206.5 L1804.5 207.8 L1805.5 204.4 L1806.5 209.0 L1806.5 204.1 L1807.5 207.8 L1808.5 210.3 L1809.5 206.6 L1809.5 224.5 L1810.5 206.1 L1811.5 213.0 L1811.5 205.4 L1812.5 216.6 L1813.5 213.0 L1814.5 219.7 L1814.5 228.3 L1815.5 238.0 L1816.5 238.0 L1816.5 217.9 L1817.5 240.2 L1818.5 231.0 L1819.5 235.6 L1819.5 231.6 L1820.5 234.8 L1821.5 228.7 L1821.5 230.8 L1822.5 231.3 L1823.5 229.4 L1824.5 234.4 L1824.5 235.9 L1825.5 235.1" fill="none" stroke="#f0f0f0" stroke-width="1.1" stroke-linejoin="miter" stroke-miterlimit="2"/><line x1="56" y1="607.5" x2="1822" y2="607.5" stroke="#f23645" stroke-width="1" stroke-dasharray="5 6"/><line x1="56" y1="662.5" x2="1822" y2="662.5" stroke="#9598a1" stroke-width="1" stroke-dasharray="5 6"/><line x1="56" y1="921.5" x2="1822" y2="921.5" stroke="#9598a1" stroke-width="1" stroke-dasharray="5 6"/><line x1="56" y1="976.5" x2="1822" y2="976.5" stroke="#4caf50" stroke-width="1" stroke-dasharray="5 6"/><line x1="56" y1="791.5" x2="1827" y2="791.5" stroke="#9a9a9a" stroke-width="1"/><path d="M56.0 877.0 L56.0 877.0 L70.3 877.0" fill="none" stroke="#2962ff" stroke-width="2"/><path d="M70.3 877.0 L70.3 884.7 L113.0 884.7" fill="none" stroke="#2942b8" stroke-width="2"/><path d="M113.0 884.7 L113.0 877.0 L156.8 877.0" fill="none" stroke="#2962ff" stroke-width="2"/><path d="M156.8 877.0 L156.8 865.0 L199.6 865.0" fill="none" stroke="#2962ff" stroke-width="2"/><path d="M199.6 865.0 L199.6 847.0 L242.4 847.0" fill="none" stroke="#2962ff" stroke-width="2"/><path d="M242.4 847.0 L242.4 840.5 L286.0 840.5" fill="none" stroke="#2962ff" stroke-width="2"/><path d="M286.0 840.5 L286.0 836.4 L329.0 836.4" fill="none" stroke="#2962ff" stroke-width="2"/><path d="M329.0 836.4 L329.0 835.0 L372.0 835.0" fill="none" stroke="#2962ff" stroke-width="2"/><path d="M372.0 835.0 L372.0 840.7 L414.8 840.7" fill="none" stroke="#2942b8" stroke-width="2"/><path d="M414.8 840.7 L414.8 852.2 L457.4 852.2" fill="none" stroke="#2942b8" stroke-width="2"/><path d="M457.4 852.2 L457.4 861.5 L501.0 861.5" fill="none" stroke="#2942b8" stroke-width="2"/><path d="M501.0 861.5 L501.0 873.5 L545.5 873.5" fill="none" stroke="#2942b8" stroke-width="2"/><path d="M545.5 873.5 L545.5 863.0 L587.0 863.0" fill="none" stroke="#2962ff" stroke-width="2"/><path d="M587.0 863.0 L587.0 858.7 L629.6 858.7" fill="none" stroke="#2962ff" stroke-width="2"/><path d="M629.6 858.7 L629.6 853.5 L672.6 853.5" fill="none" stroke="#2962ff" stroke-width="2"/><path d="M672.6 853.5 L672.6 856.8 L715.4 856.8" fill="none" stroke="#2942b8" stroke-width="2"/><path d="M715.4 856.8 L715.4 842.0 L759.0 842.0" fill="none" stroke="#2962ff" stroke-width="2"/><path d="M759.0 842.0 L759.0 829.0 L802.0 829.0" fill="none" stroke="#2962ff" stroke-width="2"/><path d="M802.0 829.0 L802.0 812.4 L844.7 812.4" fill="none" stroke="#2962ff" stroke-width="2"/><path d="M844.7 812.4 L844.7 800.0 L888.0 800.0" fill="none" stroke="#2962ff" stroke-width="2"/><path d="M888.0 800.0 L888.0 800.0 L930.5 800.0" fill="none" stroke="#2962ff" stroke-width="2"/><path d="M930.5 800.0 L930.5 800.7 L973.6 800.7" fill="none" stroke="#2942b8" stroke-width="2"/><path d="M973.6 800.7 L973.6 808.0 L1017.3 808.0" fill="none" stroke="#2942b8" stroke-width="2"/><path d="M1017.3 808.0 L1017.3 800.0 L1059.9 800.0" fill="none" stroke="#2962ff" stroke-width="2"/><path d="M1059.9 800.0 L1059.9 796.5 L1103.5 796.5" fill="none" stroke="#2962ff" stroke-width="2"/><path d="M1103.5 796.5 L1103.5 776.0 L1146.0 776.0" fill="none" stroke="#2962ff" stroke-width="2"/><path d="M1146.0 776.0 L1146.0 748.4 L1189.7 748.4" fill="none" stroke="#2962ff" stroke-width="2"/><path d="M1189.7 748.4 L1189.7 720.3 L1232.0 720.3" fill="none" stroke="#2962ff" stroke-width="2"/><path d="M1232.0 720.3 L1232.0 711.5 L1275.6 711.5" fill="none" stroke="#2962ff" stroke-width="2"/><path d="M1275.6 711.5 L1275.6 725.4 L1318.0 725.4" fill="none" stroke="#2942b8" stroke-width="2"/><path d="M1318.0 725.4 L1318.0 740.7 L1361.7 740.7" fill="none" stroke="#2942b8" stroke-width="2"/><path d="M1361.7 740.7 L1361.7 751.9 L1404.0 751.9" fill="none" stroke="#2942b8" stroke-width="2"/><path d="M1404.0 751.9 L1404.0 744.8 L1447.8 744.8" fill="none" stroke="#2962ff" stroke-width="2"/><path d="M1447.8 744.8 L1447.8 746.0 L1490.4 746.0" fill="none" stroke="#2942b8" stroke-width="2"/><path d="M1490.4 746.0 L1490.4 749.5 L1533.3 749.5" fill="none" stroke="#2942b8" stroke-width="2"/><path d="M1533.3 749.5 L1533.3 753.7 L1620.0 753.7" fill="none" stroke="#2942b8" stroke-width="2"/><path d="M1620.0 753.7 L1620.0 754.2 L1662.5 754.2" fill="none" stroke="#2942b8" stroke-width="2"/><path d="M1662.5 754.2 L1662.5 757.5 L1705.8 757.5" fill="none" stroke="#2942b8" stroke-width="2"/><path d="M1705.8 757.5 L1705.8 762.5 L1749.2 762.5" fill="none" stroke="#2942b8" stroke-width="2"/><path d="M1749.2 762.5 L1749.2 769.7 L1791.7 769.7" fill="none" stroke="#2942b8" stroke-width="2"/><path d="M1791.7 769.7 L1791.7 772.0 L1826.7 772.0" fill="none" stroke="#2942b8" stroke-width="2"/><path d="M56.0 847.0 L59.6 847.0 L59.6 847.0 L63.2 847.0 L63.2 850.0 L66.7 850.0 L66.7 853.5 L70.3 853.5 L70.3 860.3 L73.9 860.3 L73.9 869.2 L77.5 869.2 L77.5 864.4 L81.1 864.4 L81.1 854.3 L84.6 854.3 L84.6 827.1 L88.2 827.1 L88.2 798.3 L91.8 798.3 L91.8 772.1 L95.4 772.1 L95.4 767.2 L99.0 767.2 L99.0 771.5 L102.5 771.5 L102.5 776.3 L106.1 776.3 L106.1 779.0 L109.7 779.0 L109.7 776.3 L113.3 776.3 L113.3 773.4 L116.9 773.4 L116.9 757.0 L120.4 757.0 L120.4 745.8 L124.0 745.8 L124.0 737.6 L127.6 737.6 L127.6 741.1 L131.2 741.1 L131.2 744.0 L134.8 744.0 L134.8 746.4 L138.3 746.4 L138.3 756.5 L141.9 756.5 L141.9 769.2 L145.5 769.2 L145.5 787.8 L149.1 787.8 L149.1 785.7 L152.7 785.7 L152.7 781.3 L156.2 781.3 L156.2 778.5 L159.8 778.5 L159.8 781.7 L163.4 781.7 L163.4 786.8 L167.0 786.8 L167.0 780.4 L170.6 780.4 L170.6 770.9 L174.1 770.9 L174.1 763.2 L177.7 763.2 L177.7 758.0 L181.3 758.0 L181.3 756.8 L184.9 756.8 L184.9 757.6 L188.5 757.6 L188.5 759.3 L192.0 759.3 L192.0 765.1 L195.6 765.1 L195.6 775.0 L199.2 775.0 L199.2 792.8 L202.8 792.8 L202.8 782.1 L206.4 782.1 L206.4 771.1 L209.9 771.1 L209.9 759.8 L213.5 759.8 L213.5 756.4 L217.1 756.4 L217.1 756.4 L220.7 756.4 L220.7 759.3 L224.3 759.3 L224.3 763.9 L227.8 763.9 L227.8 772.1 L231.4 772.1 L231.4 779.8 L235.0 779.8 L235.0 787.0 L238.6 787.0 L238.6 783.2 L242.2 783.2 L242.2 780.1 L245.7 780.1 L245.7 778.0 L249.3 778.0 L249.3 783.3 L252.9 783.3 L252.9 788.6 L256.5 788.6 L256.5 794.4 L260.1 794.4 L260.1 800.3 L263.6 800.3 L263.6 806.3 L267.2 806.3 L267.2 809.7 L270.8 809.7 L270.8 807.8 L274.4 807.8 L274.4 805.4 L278.0 805.4 L278.0 792.2 L281.5 792.2 L281.5 782.0 L285.1 782.0 L285.1 777.6 L288.7 777.6 L288.7 776.5 L292.3 776.5 L292.3 775.4 L295.9 775.4 L295.9 775.5 L299.4 775.5 L299.4 777.8 L303.0 777.8 L303.0 780.3 L306.6 780.3 L306.6 786.6 L310.2 786.6 L310.2 792.9 L313.8 792.9 L313.8 800.9 L317.3 800.9 L317.3 812.9 L320.9 812.9 L320.9 829.7 L324.5 829.7 L324.5 828.0 L328.1 828.0 L328.1 826.6 L331.7 826.6 L331.7 826.6 L335.2 826.6 L335.2 826.5 L338.8 826.5 L338.8 817.1 L342.4 817.1 L342.4 811.3 L346.0 811.3 L346.0 814.9 L349.6 814.9 L349.6 820.8 L353.1 820.8 L353.1 828.2 L356.7 828.2 L356.7 844.1 L360.3 844.1 L360.3 860.7 L363.9 860.7 L363.9 856.6 L367.5 856.6 L367.5 845.0 L371.0 845.0 L371.0 832.2 L374.6 832.2 L374.6 827.7 L378.2 827.7 L378.2 829.5 L381.8 829.5 L381.8 835.2 L385.4 835.2 L385.4 840.9 L388.9 840.9 L388.9 845.4 L392.5 845.4 L392.5 849.9 L396.1 849.9 L396.1 848.3 L399.7 848.3 L399.7 846.5 L403.3 846.5 L403.3 836.7 L406.8 836.7 L406.8 838.8 L410.4 838.8 L410.4 843.4 L414.0 843.4 L414.0 841.6 L417.6 841.6 L417.6 838.0 L421.2 838.0 L421.2 828.6 L424.7 828.6 L424.7 817.2 L428.3 817.2 L428.3 808.8 L431.9 808.8 L431.9 804.4 L435.5 804.4 L435.5 803.4 L439.1 803.4 L439.1 811.0 L442.6 811.0 L442.6 818.5 L446.2 818.5 L446.2 819.4 L449.8 819.4 L449.8 813.5 L453.4 813.5 L453.4 812.4 L457.0 812.4 L457.0 824.5 L460.5 824.5 L460.5 837.8 L464.1 837.8 L464.1 848.8 L467.7 848.8 L467.7 863.1 L471.3 863.1 L471.3 883.2 L474.9 883.2 L474.9 885.5 L478.4 885.5 L478.4 876.4 L482.0 876.4 L482.0 849.5 L485.6 849.5 L485.6 833.0 L489.2 833.0 L489.2 823.9 L492.8 823.9 L492.8 820.3 L496.3 820.3 L496.3 817.9 L499.9 817.9 L499.9 816.8 L503.5 816.8 L503.5 809.0 L507.1 809.0 L507.1 801.0 L510.7 801.0 L510.7 797.6 L514.2 797.6 L514.2 794.9 L517.8 794.9 L517.8 786.3 L521.4 786.3 L521.4 776.3 L525.0 776.3 L525.0 770.0 L528.6 770.0 L528.6 770.4 L532.1 770.4 L532.1 773.1 L535.7 773.1 L535.7 772.9 L539.3 772.9 L539.3 771.1 L542.9 771.1 L542.9 766.5 L546.5 766.5 L546.5 760.0 L550.0 760.0 L550.0 761.2 L553.6 761.2 L553.6 762.4 L557.2 762.4 L557.2 767.7 L560.8 767.7 L560.8 778.3 L564.4 778.3 L564.4 788.1 L567.9 788.1 L567.9 796.2 L571.5 796.2 L571.5 801.5 L575.1 801.5 L575.1 806.0 L578.7 806.0 L578.7 808.2 L582.3 808.2 L582.3 810.3 L585.8 810.3 L585.8 820.9 L589.4 820.9 L589.4 823.2 L593.0 823.2 L593.0 818.8 L596.6 818.8 L596.6 814.6 L600.2 814.6 L600.2 811.9 L603.7 811.9 L603.7 809.3 L607.3 809.3 L607.3 806.6 L610.9 806.6 L610.9 808.2 L614.5 808.2 L614.5 817.4 L618.1 817.4 L618.1 829.9 L621.6 829.9 L621.6 830.6 L625.2 830.6 L625.2 831.3 L628.8 831.3 L628.8 830.1 L632.4 830.1 L632.4 828.3 L636.0 828.3 L636.0 823.9 L639.5 823.9 L639.5 813.4 L643.1 813.4 L643.1 794.3 L646.7 794.3 L646.7 780.0 L650.3 780.0 L650.3 768.0 L653.9 768.0 L653.9 767.6 L657.4 767.6 L657.4 768.5 L661.0 768.5 L661.0 772.1 L664.6 772.1 L664.6 775.6 L668.2 775.6 L668.2 787.2 L671.8 787.2 L671.8 796.3 L675.3 796.3 L675.3 797.5 L678.9 797.5 L678.9 794.1 L682.5 794.1 L682.5 790.6 L686.1 790.6 L686.1 792.0 L689.7 792.0 L689.7 793.4 L693.2 793.4 L693.2 777.5 L696.8 777.5 L696.8 758.8 L700.4 758.8 L700.4 752.8 L704.0 752.8 L704.0 753.3 L707.6 753.3 L707.6 755.9 L711.1 755.9 L711.1 756.9 L714.7 756.9 L714.7 755.7 L718.3 755.7 L718.3 747.3 L721.9 747.3 L721.9 737.3 L725.5 737.3 L725.5 744.5 L729.0 744.5 L729.0 757.8 L732.6 757.8 L732.6 778.1 L736.2 778.1 L736.2 779.4 L739.8 779.4 L739.8 780.7 L743.4 780.7 L743.4 781.3 L746.9 781.3 L746.9 782.2 L750.5 782.2 L750.5 784.1 L754.1 784.1 L754.1 785.9 L757.7 785.9 L757.7 792.9 L761.3 792.9 L761.3 799.9 L764.8 799.9 L764.8 796.5 L768.4 796.5 L768.4 788.2 L772.0 788.2 L772.0 785.1 L775.6 785.1 L775.6 782.1 L779.2 782.1 L779.2 779.2 L782.7 779.2 L782.7 772.0 L786.3 772.0 L786.3 761.2 L789.9 761.2 L789.9 758.2 L793.5 758.2 L793.5 756.8 L797.1 756.8 L797.1 755.4 L800.6 755.4 L800.6 739.6 L804.2 739.6 L804.2 725.8 L807.8 725.8 L807.8 713.6 L811.4 713.6 L811.4 707.4 L815.0 707.4 L815.0 701.2 L818.5 701.2 L818.5 704.6 L822.1 704.6 L822.1 711.5 L825.7 711.5 L825.7 729.0 L829.3 729.0 L829.3 732.6 L832.9 732.6 L832.9 738.0 L836.4 738.0 L836.4 747.2 L840.0 747.2 L840.0 741.2 L843.6 741.2 L843.6 736.6 L847.2 736.6 L847.2 735.7 L850.8 735.7 L850.8 738.7 L854.3 738.7 L854.3 756.1 L857.9 756.1 L857.9 766.9 L861.5 766.9 L861.5 777.7 L865.1 777.7 L865.1 782.7 L868.7 782.7 L868.7 786.3 L872.2 786.3 L872.2 803.4 L875.8 803.4 L875.8 832.3 L879.4 832.3 L879.4 856.0 L883.0 856.0 L883.0 869.4 L886.6 869.4 L886.6 874.5 L890.1 874.5 L890.1 872.7 L893.7 872.7 L893.7 869.3 L897.3 869.3 L897.3 860.9 L900.9 860.9 L900.9 848.4 L904.5 848.4 L904.5 837.8 L908.0 837.8 L908.0 835.0 L911.6 835.0 L911.6 830.5 L915.2 830.5 L915.2 815.0 L918.8 815.0 L918.8 798.4 L922.4 798.4 L922.4 780.5 L925.9 780.5 L925.9 771.8 L929.5 771.8 L929.5 766.6 L933.1 766.6 L933.1 765.6 L936.7 765.6 L936.7 762.2 L940.3 762.2 L940.3 753.0 L943.8 753.0 L943.8 751.6 L947.4 751.6 L947.4 752.2 L951.0 752.2 L951.0 763.1 L954.6 763.1 L954.6 763.5 L958.2 763.5 L958.2 761.8 L961.7 761.8 L961.7 762.3 L965.3 762.3 L965.3 762.8 L968.9 762.8 L968.9 775.9 L972.5 775.9 L972.5 781.3 L976.1 781.3 L976.1 786.7 L979.6 786.7 L979.6 792.7 L983.2 792.7 L983.2 798.9 L986.8 798.9 L986.8 804.4 L990.4 804.4 L990.4 808.0 L994.0 808.0 L994.0 811.6 L997.5 811.6 L997.5 820.1 L1001.1 820.1 L1001.1 824.4 L1004.7 824.4 L1004.7 827.1 L1008.3 827.1 L1008.3 825.4 L1011.9 825.4 L1011.9 815.9 L1015.4 815.9 L1015.4 803.6 L1019.0 803.6 L1019.0 789.1 L1022.6 789.1 L1022.6 769.1 L1026.2 769.1 L1026.2 755.2 L1029.8 755.2 L1029.8 749.6 L1033.3 749.6 L1033.3 751.3 L1036.9 751.3 L1036.9 761.0 L1040.5 761.0 L1040.5 771.9 L1044.1 771.9 L1044.1 777.6 L1047.7 777.6 L1047.7 781.9 L1051.2 781.9 L1051.2 780.1 L1054.8 780.1 L1054.8 778.3 L1058.4 778.3 L1058.4 771.1 L1062.0 771.1 L1062.0 761.6 L1065.6 761.6 L1065.6 731.8 L1069.1 731.8 L1069.1 703.2 L1072.7 703.2 L1072.7 680.5 L1076.3 680.5 L1076.3 673.6 L1079.9 673.6 L1079.9 689.0 L1083.5 689.0 L1083.5 694.5 L1087.0 694.5 L1087.0 700.3 L1090.6 700.3 L1090.6 706.8 L1094.2 706.8 L1094.2 715.2 L1097.8 715.2 L1097.8 725.0 L1101.4 725.0 L1101.4 738.5 L1104.9 738.5 L1104.9 756.5 L1108.5 756.5 L1108.5 761.3 L1112.1 761.3 L1112.1 766.2 L1115.7 766.2 L1115.7 771.3 L1119.3 771.3 L1119.3 766.8 L1122.8 766.8 L1122.8 762.3 L1126.4 762.3 L1126.4 758.4 L1130.0 758.4 L1130.0 754.8 L1133.6 754.8 L1133.6 750.5 L1137.2 750.5 L1137.2 744.2 L1140.7 744.2 L1140.7 737.9 L1144.3 737.9 L1144.3 734.1 L1147.9 734.1 L1147.9 731.4 L1151.5 731.4 L1151.5 734.9 L1155.1 734.9 L1155.1 737.1 L1158.6 737.1 L1158.6 736.4 L1162.2 736.4 L1162.2 735.7 L1165.8 735.7 L1165.8 733.7 L1169.4 733.7 L1169.4 729.5 L1173.0 729.5 L1173.0 725.4 L1176.5 725.4 L1176.5 721.2 L1180.1 721.2 L1180.1 717.5 L1183.7 717.5 L1183.7 713.8 L1187.3 713.8 L1187.3 710.2 L1190.9 710.2 L1190.9 705.4 L1194.4 705.4 L1194.4 700.4 L1198.0 700.4 L1198.0 703.5 L1201.6 703.5 L1201.6 709.6 L1205.2 709.6 L1205.2 715.7 L1208.8 715.7 L1208.8 721.6 L1212.3 721.6 L1212.3 731.7 L1215.9 731.7 L1215.9 742.0 L1219.5 742.0 L1219.5 747.8 L1223.1 747.8 L1223.1 753.7 L1226.7 753.7 L1226.7 760.4 L1230.2 760.4 L1230.2 765.8 L1233.8 765.8 L1233.8 761.0 L1237.4 761.0 L1237.4 756.6 L1241.0 756.6 L1241.0 753.9 L1244.6 753.9 L1244.6 759.3 L1248.1 759.3 L1248.1 774.3 L1251.7 774.3 L1251.7 793.8 L1255.3 793.8 L1255.3 806.5 L1258.9 806.5 L1258.9 814.5 L1262.5 814.5 L1262.5 821.0 L1266.0 821.0 L1266.0 825.4 L1269.6 825.4 L1269.6 831.4 L1273.2 831.4 L1273.2 839.7 L1276.8 839.7 L1276.8 850.1 L1280.4 850.1 L1280.4 854.3 L1283.9 854.3 L1283.9 842.5 L1287.5 842.5 L1287.5 834.7 L1291.1 834.7 L1291.1 828.3 L1294.7 828.3 L1294.7 828.8 L1298.3 828.8 L1298.3 831.2 L1301.8 831.2 L1301.8 825.8 L1305.4 825.8 L1305.4 820.1 L1309.0 820.1 L1309.0 809.4 L1312.6 809.4 L1312.6 802.3 L1316.2 802.3 L1316.2 798.7 L1319.7 798.7 L1319.7 796.2 L1323.3 796.2 L1323.3 795.0 L1326.9 795.0 L1326.9 793.8 L1330.5 793.8 L1330.5 794.5 L1334.1 794.5 L1334.1 798.9 L1337.6 798.9 L1337.6 803.3 L1341.2 803.3 L1341.2 807.7 L1344.8 807.7 L1344.8 780.3 L1348.4 780.3 L1348.4 765.1 L1352.0 765.1 L1352.0 757.6 L1355.5 757.6 L1355.5 755.7 L1359.1 755.7 L1359.1 753.8 L1362.7 753.8 L1362.7 749.7 L1366.3 749.7 L1366.3 751.4 L1369.9 751.4 L1369.9 759.0 L1373.4 759.0 L1373.4 764.8 L1377.0 764.8 L1377.0 768.4 L1380.6 768.4 L1380.6 771.6 L1384.2 771.6 L1384.2 773.9 L1387.8 773.9 L1387.8 770.1 L1391.3 770.1 L1391.3 764.6 L1394.9 764.6 L1394.9 762.2 L1398.5 762.2 L1398.5 760.8 L1402.1 760.8 L1402.1 760.1 L1405.7 760.1 L1405.7 762.9 L1409.2 762.9 L1409.2 765.8 L1412.8 765.8 L1412.8 772.5 L1416.4 772.5 L1416.4 782.4 L1420.0 782.4 L1420.0 785.6 L1423.6 785.6 L1423.6 782.1 L1427.1 782.1 L1427.1 780.5 L1430.7 780.5 L1430.7 781.7 L1434.3 781.7 L1434.3 789.1 L1437.9 789.1 L1437.9 797.1 L1441.5 797.1 L1441.5 804.3 L1445.0 804.3 L1445.0 813.3 L1448.6 813.3 L1448.6 827.6 L1452.2 827.6 L1452.2 835.3 L1455.8 835.3 L1455.8 837.4 L1459.4 837.4 L1459.4 825.5 L1462.9 825.5 L1462.9 816.4 L1466.5 816.4 L1466.5 809.2 L1470.1 809.2 L1470.1 802.1 L1473.7 802.1 L1473.7 795.1 L1477.3 795.1 L1477.3 784.3 L1480.8 784.3 L1480.8 777.6 L1484.4 777.6 L1484.4 776.8 L1488.0 776.8 L1488.0 777.8 L1491.6 777.8 L1491.6 782.1 L1495.2 782.1 L1495.2 786.4 L1498.7 786.4 L1498.7 792.0 L1502.3 792.0 L1502.3 796.1 L1505.9 796.1 L1505.9 793.4 L1509.5 793.4 L1509.5 789.9 L1513.1 789.9 L1513.1 782.2 L1516.6 782.2 L1516.6 776.2 L1520.2 776.2 L1520.2 771.9 L1523.8 771.9 L1523.8 769.1 L1527.4 769.1 L1527.4 773.9 L1531.0 773.9 L1531.0 786.9 L1534.5 786.9 L1534.5 802.0 L1538.1 802.0 L1538.1 816.3 L1541.7 816.3 L1541.7 829.5 L1545.3 829.5 L1545.3 830.9 L1548.9 830.9 L1548.9 825.2 L1552.4 825.2 L1552.4 826.4 L1556.0 826.4 L1556.0 833.2 L1559.6 833.2 L1559.6 836.9 L1563.2 836.9 L1563.2 833.3 L1566.8 833.3 L1566.8 820.3 L1570.3 820.3 L1570.3 810.8 L1573.9 810.8 L1573.9 803.7 L1577.5 803.7 L1577.5 799.5 L1581.1 799.5 L1581.1 799.7 L1584.7 799.7 L1584.7 806.2 L1588.2 806.2 L1588.2 822.2 L1591.8 822.2 L1591.8 837.7 L1595.4 837.7 L1595.4 841.1 L1599.0 841.1 L1599.0 824.3 L1602.6 824.3 L1602.6 805.9 L1606.1 805.9 L1606.1 797.9 L1609.7 797.9 L1609.7 789.9 L1613.3 789.9 L1613.3 781.9 L1616.9 781.9 L1616.9 773.1 L1620.5 773.1 L1620.5 763.8 L1624.0 763.8 L1624.0 758.7 L1627.6 758.7 L1627.6 764.1 L1631.2 764.1 L1631.2 771.7 L1634.8 771.7 L1634.8 779.7 L1638.4 779.7 L1638.4 787.0 L1641.9 787.0 L1641.9 794.7 L1645.5 794.7 L1645.5 806.3 L1649.1 806.3 L1649.1 816.5 L1652.7 816.5 L1652.7 822.4 L1656.3 822.4 L1656.3 813.2 L1659.8 813.2 L1659.8 802.9 L1663.4 802.9 L1663.4 795.3 L1667.0 795.3 L1667.0 801.3 L1670.6 801.3 L1670.6 808.0 L1674.2 808.0 L1674.2 815.2 L1677.7 815.2 L1677.7 808.8 L1681.3 808.8 L1681.3 798.8 L1684.9 798.8 L1684.9 781.4 L1688.5 781.4 L1688.5 774.3 L1692.1 774.3 L1692.1 787.2 L1695.6 787.2 L1695.6 809.9 L1699.2 809.9 L1699.2 831.6 L1702.8 831.6 L1702.8 825.7 L1706.4 825.7 L1706.4 815.5 L1710.0 815.5 L1710.0 805.0 L1713.5 805.0 L1713.5 807.9 L1717.1 807.9 L1717.1 810.8 L1720.7 810.8 L1720.7 809.8 L1724.3 809.8 L1724.3 807.2 L1727.9 807.2 L1727.9 803.7 L1731.4 803.7 L1731.4 800.1 L1735.0 800.1 L1735.0 802.0 L1738.6 802.0 L1738.6 804.1 L1742.2 804.1 L1742.2 806.0 L1745.8 806.0 L1745.8 807.4 L1749.3 807.4 L1749.3 809.7 L1752.9 809.7 L1752.9 814.0 L1756.5 814.0 L1756.5 818.3 L1760.1 818.3 L1760.1 812.1 L1763.7 812.1 L1763.7 806.0 L1767.2 806.0 L1767.2 800.7 L1770.8 800.7 L1770.8 797.6 L1774.4 797.6 L1774.4 801.2 L1778.0 801.2 L1778.0 804.8 L1781.6 804.8 L1781.6 808.2 L1785.1 808.2 L1785.1 799.3 L1788.7 799.3 L1788.7 790.7 L1792.3 790.7 L1792.3 783.5 L1795.9 783.5 L1795.9 776.3 L1799.5 776.3 L1799.5 770.8 L1803.0 770.8 L1803.0 765.7 L1806.6 765.7 L1806.6 764.8 L1810.2 764.8 L1810.2 770.1 L1813.8 770.1 L1813.8 792.8 L1817.4 792.8 L1817.4 813.9 L1820.9 813.9 L1820.9 831.9 L1824.5 831.9 L1824.5 843.3 L1826.0 843.3" fill="none" stroke="#1e9682" stroke-width="1.7"/><path d="M56.0 847.0 L62.0 847.0 L62.0 853.0 L70.0 853.0 L70.0 867.0 L91.6 867.0 L91.6 847.0 L102.8 847.0 L102.8 825.6 L113.0 825.6 L113.0 807.3 L123.2 807.3 L123.2 800.0 L135.4 800.0 L135.4 791.0 L155.8 791.0 L155.8 797.0 L178.2 797.0 L178.2 788.0 L188.4 788.0 L188.4 780.8 L200.6 780.8 L200.6 786.0 L208.7 786.0 L208.7 783.0 L221.0 783.0 L221.0 780.8 L231.2 780.8 L231.2 777.8 L243.4 777.8 L243.4 780.0 L253.6 780.0 L253.6 786.0 L265.8 786.0 L265.8 791.0 L276.0 791.0 L276.0 796.0 L296.3 796.0 L296.3 789.0 L306.5 789.0 L306.5 785.5 L318.7 785.5 L318.7 792.0 L329.0 792.0 L329.0 802.0 L343.0 802.0 L343.0 805.0 L356.0 805.0 L356.0 805.5 L361.0 805.5 L361.0 814.0 L372.0 814.0 L372.0 817.6 L382.4 817.6 L382.4 829.6 L392.6 829.6 L392.6 834.0 L405.5 834.0 L405.5 840.7 L416.7 840.7 L416.7 838.0 L427.8 838.0 L427.8 835.0 L446.3 835.0 L446.3 826.0 L457.4 826.0 L457.4 830.5 L468.5 830.5 L468.5 845.4 L479.6 845.4 L479.6 861.0 L490.7 861.0 L490.7 866.7 L501.0 866.7 L501.0 861.0 L511.0 861.0 L511.0 855.5 L522.0 855.5 L522.0 835.0 L533.3 835.0 L533.3 821.3 L543.5 821.3 L543.5 801.0 L554.6 801.0 L554.6 796.3 L576.0 796.3 L576.0 804.6 L587.0 804.6 L587.0 819.4 L597.2 819.4 L597.2 822.0 L607.4 822.0 L607.4 826.0 L618.5 826.0 L618.5 827.8 L629.6 827.8 L629.6 837.0 L640.0 837.0 L640.0 833.0 L651.2 833.0 L651.2 820.5 L661.4 820.5 L661.4 805.3 L672.6 805.3 L672.6 801.8 L683.8 801.8 L683.8 809.3 L694.0 809.3 L694.0 801.2 L705.2 801.2 L705.2 790.0 L715.4 790.0 L715.4 773.7 L726.6 773.7 L726.6 775.7 L737.8 775.7 L737.8 777.8 L748.0 777.8 L748.0 781.8 L758.1 781.8 L758.1 788.0 L770.3 788.0 L770.3 790.0 L780.5 790.0 L780.5 788.0 L790.7 788.0 L790.7 780.8 L801.9 780.8 L801.9 767.6 L812.1 767.6 L812.1 751.3 L823.3 751.3 L823.3 739.0 L834.5 739.0 L834.5 740.0 L855.9 740.0 L855.9 748.2 L866.1 748.2 L866.1 754.3 L877.3 754.3 L877.3 788.0 L888.5 788.0 L888.5 808.3 L898.7 808.3 L898.7 824.6 L920.0 824.6 L920.0 812.4 L931.2 812.4 L931.2 800.0 L942.0 800.0 L942.0 786.3 L951.3 786.3 L951.3 775.6 L963.0 775.6 L963.0 771.4 L973.6 771.4 L973.6 777.7 L985.4 777.7 L985.4 782.0 L996.0 782.0 L996.0 790.5 L1006.6 790.5 L1006.6 799.0 L1017.3 799.0 L1017.3 794.8 L1028.0 794.8 L1028.0 786.3 L1038.6 786.3 L1038.6 778.8 L1049.2 778.8 L1049.2 777.7 L1061.0 777.7 L1061.0 758.6 L1071.6 758.6 L1071.6 746.9 L1082.2 746.9 L1082.2 719.2 L1092.9 719.2 L1092.9 695.1 L1103.5 695.1 L1103.5 712.8 L1114.2 712.8 L1114.2 727.7 L1124.8 727.7 L1124.8 737.3 L1135.4 737.3 L1135.4 734.0 L1146.1 734.0 L1146.1 724.5 L1156.7 724.5 L1156.7 721.3 L1167.4 721.3 L1167.4 719.2 L1178.0 719.2 L1178.0 716.0 L1188.7 716.0 L1188.7 707.5 L1199.3 707.5 L1199.3 701.0 L1210.0 701.0 L1210.0 703.2 L1220.6 703.2 L1220.6 707.0 L1232.0 707.0 L1232.0 713.0 L1253.3 713.0 L1253.3 727.2 L1264.4 727.2 L1264.4 747.6 L1275.6 747.6 L1275.6 776.3 L1285.7 776.3 L1285.7 784.6 L1296.0 784.6 L1296.0 793.9 L1307.0 793.9 L1307.0 787.4 L1329.3 787.4 L1329.3 780.0 L1350.6 780.0 L1350.6 774.4 L1361.7 774.4 L1361.7 766.1 L1372.8 766.1 L1372.8 759.6 L1394.0 759.6 L1394.0 763.3 L1405.2 763.3 L1405.2 761.5 L1447.8 761.5 L1447.8 776.3 L1458.9 776.3 L1458.9 781.0 L1468.1 781.0 L1468.1 785.6 L1479.3 785.6 L1479.3 779.0 L1490.4 779.0 L1490.4 776.3 L1512.6 776.3 L1512.6 777.5 L1545.0 777.5 L1545.0 783.3 L1555.0 783.3 L1555.0 790.8 L1565.0 790.8 L1565.0 798.3 L1576.7 798.3 L1576.7 795.8 L1587.5 795.8 L1587.5 798.3 L1620.0 798.3 L1620.0 785.8 L1630.8 785.8 L1630.8 783.3 L1641.7 783.3 L1641.7 787.5 L1651.7 787.5 L1651.7 796.7 L1663.3 796.7 L1663.3 800.0 L1673.3 800.0 L1673.3 805.0 L1684.2 805.0 L1684.2 795.8 L1695.0 795.8 L1695.0 803.3 L1716.7 803.3 L1716.7 814.2 L1726.7 814.2 L1726.7 808.3 L1760.0 808.3 L1760.0 806.7 L1770.0 806.7 L1770.0 804.2 L1791.7 804.2 L1791.7 802.5 L1803.3 802.5 L1803.3 797.5 L1818.3 797.5 L1818.3 795.8 L1826.7 795.8" fill="none" stroke="#00bcd4" stroke-width="2"/><rect x="59.6" y="857.6" width="3.58" height="1.9" fill="rgba(242,54,69,0.18)"/><rect x="63.2" y="859.8" width="3.58" height="5.1" fill="rgba(242,54,69,0.18)"/><rect x="66.7" y="861.5" width="3.58" height="4.0" fill="rgba(242,54,69,0.18)"/><rect x="70.3" y="864.8" width="3.58" height="7.8" fill="rgba(242,54,69,0.18)"/><rect x="73.9" y="866.7" width="3.58" height="4.4" fill="rgba(242,54,69,0.18)"/><rect x="77.5" y="868.2" width="3.58" height="3.5" fill="rgba(242,54,69,0.18)"/><rect x="81.1" y="866.5" width="3.58" height="1.2" fill="rgba(0,230,118,0.22)"/><rect x="84.6" y="859.7" width="3.58" height="5.6" fill="rgba(0,230,118,0.22)"/><rect x="88.2" y="846.8" width="3.58" height="13.0" fill="rgba(0,230,118,0.22)"/><rect x="91.8" y="836.5" width="3.58" height="16.3" fill="rgba(0,230,118,0.22)"/><rect x="95.4" y="832.5" width="3.58" height="14.2" fill="rgba(0,230,118,0.22)"/><rect x="99.0" y="828.8" width="3.58" height="12.5" fill="rgba(0,230,118,0.22)"/><rect x="102.5" y="830.3" width="3.58" height="7.7" fill="rgba(0,230,118,0.22)"/><rect x="106.1" y="828.9" width="3.58" height="6.4" fill="rgba(0,230,118,0.22)"/><rect x="109.7" y="825.2" width="3.58" height="7.1" fill="rgba(0,230,118,0.22)"/><rect x="113.3" y="819.3" width="3.58" height="9.1" fill="rgba(0,230,118,0.22)"/><rect x="116.9" y="813.7" width="3.58" height="10.2" fill="rgba(0,230,118,0.22)"/><rect x="120.4" y="808.7" width="3.58" height="10.7" fill="rgba(0,230,118,0.22)"/><rect x="124.0" y="808.5" width="3.58" height="7.6" fill="rgba(0,230,118,0.22)"/><rect x="127.6" y="804.4" width="3.58" height="8.2" fill="rgba(0,230,118,0.22)"/><rect x="131.2" y="803.9" width="3.58" height="6.1" fill="rgba(0,230,118,0.22)"/><rect x="134.8" y="805.1" width="3.58" height="3.4" fill="rgba(0,230,118,0.22)"/><rect x="141.9" y="810.5" width="3.58" height="4.4" fill="rgba(242,54,69,0.18)"/><rect x="145.5" y="812.7" width="3.58" height="5.3" fill="rgba(242,54,69,0.18)"/><rect x="149.1" y="815.3" width="3.58" height="5.9" fill="rgba(242,54,69,0.18)"/><rect x="152.7" y="816.1" width="3.58" height="1.9" fill="rgba(242,54,69,0.18)"/><rect x="156.2" y="815.2" width="3.58" height="0.6" fill="rgba(0,230,118,0.22)"/><rect x="159.8" y="814.5" width="3.58" height="0.9" fill="rgba(0,230,118,0.22)"/><rect x="163.4" y="815.8" width="3.58" height="0.9" fill="rgba(242,54,69,0.18)"/><rect x="167.0" y="813.3" width="3.58" height="1.7" fill="rgba(0,230,118,0.22)"/><rect x="170.6" y="809.3" width="3.58" height="4.0" fill="rgba(0,230,118,0.22)"/><rect x="174.1" y="809.8" width="3.58" height="2.5" fill="rgba(0,230,118,0.22)"/><rect x="177.7" y="802.7" width="3.58" height="6.7" fill="rgba(0,230,118,0.22)"/><rect x="181.3" y="802.3" width="3.58" height="4.9" fill="rgba(0,230,118,0.22)"/><rect x="184.9" y="803.6" width="3.58" height="2.5" fill="rgba(0,230,118,0.22)"/><rect x="192.0" y="804.0" width="3.58" height="1.6" fill="rgba(0,230,118,0.22)"/><rect x="195.6" y="804.7" width="3.58" height="0.6" fill="rgba(0,230,118,0.22)"/><rect x="199.2" y="807.0" width="3.58" height="3.8" fill="rgba(242,54,69,0.18)"/><rect x="202.8" y="805.7" width="3.58" height="0.9" fill="rgba(0,230,118,0.22)"/><rect x="206.4" y="802.2" width="3.58" height="3.0" fill="rgba(0,230,118,0.22)"/><rect x="209.9" y="800.5" width="3.58" height="3.3" fill="rgba(0,230,118,0.22)"/><rect x="213.5" y="797.5" width="3.58" height="4.4" fill="rgba(0,230,118,0.22)"/><rect x="217.1" y="796.9" width="3.58" height="3.6" fill="rgba(0,230,118,0.22)"/><rect x="220.7" y="796.8" width="3.58" height="2.5" fill="rgba(0,230,118,0.22)"/><rect x="224.3" y="799.7" width="3.58" height="0.8" fill="rgba(242,54,69,0.18)"/><rect x="227.8" y="800.8" width="3.58" height="2.6" fill="rgba(242,54,69,0.18)"/><rect x="231.4" y="801.8" width="3.58" height="2.4" fill="rgba(242,54,69,0.18)"/><rect x="235.0" y="802.7" width="3.58" height="2.1" fill="rgba(242,54,69,0.18)"/><rect x="238.6" y="803.8" width="3.58" height="2.5" fill="rgba(242,54,69,0.18)"/><rect x="242.2" y="802.7" width="3.58" height="0.8" fill="rgba(0,230,118,0.22)"/><rect x="245.7" y="797.7" width="3.58" height="4.0" fill="rgba(0,230,118,0.22)"/><rect x="249.3" y="800.8" width="3.58" height="0.7" fill="rgba(0,230,118,0.22)"/><rect x="252.9" y="802.5" width="3.58" height="2.5" fill="rgba(242,54,69,0.18)"/><rect x="256.5" y="803.6" width="3.58" height="2.6" fill="rgba(242,54,69,0.18)"/><rect x="260.1" y="805.2" width="3.58" height="3.6" fill="rgba(242,54,69,0.18)"/><rect x="263.6" y="807.3" width="3.58" height="5.0" fill="rgba(242,54,69,0.18)"/><rect x="267.2" y="809.0" width="3.58" height="4.0" fill="rgba(242,54,69,0.18)"/><rect x="270.8" y="810.4" width="3.58" height="3.3" fill="rgba(242,54,69,0.18)"/><rect x="274.4" y="810.8" width="3.58" height="0.9" fill="rgba(242,54,69,0.18)"/><rect x="278.0" y="811.4" width="3.58" height="1.4" fill="rgba(242,54,69,0.18)"/><rect x="281.5" y="807.3" width="3.58" height="2.9" fill="rgba(0,230,118,0.22)"/><rect x="285.1" y="802.8" width="3.58" height="5.2" fill="rgba(0,230,118,0.22)"/><rect x="288.7" y="804.2" width="3.58" height="2.7" fill="rgba(0,230,118,0.22)"/><rect x="292.3" y="802.3" width="3.58" height="3.2" fill="rgba(0,230,118,0.22)"/><rect x="295.9" y="801.3" width="3.58" height="2.9" fill="rgba(0,230,118,0.22)"/><rect x="299.4" y="803.0" width="3.58" height="0.9" fill="rgba(0,230,118,0.22)"/><rect x="303.0" y="804.1" width="3.58" height="0.7" fill="rgba(242,54,69,0.18)"/><rect x="306.6" y="802.9" width="3.58" height="0.9" fill="rgba(0,230,118,0.22)"/><rect x="310.2" y="804.7" width="3.58" height="2.1" fill="rgba(242,54,69,0.18)"/><rect x="313.8" y="806.4" width="3.58" height="3.9" fill="rgba(242,54,69,0.18)"/><rect x="317.3" y="807.8" width="3.58" height="3.3" fill="rgba(242,54,69,0.18)"/><rect x="320.9" y="810.7" width="3.58" height="6.9" fill="rgba(242,54,69,0.18)"/><rect x="324.5" y="813.6" width="3.58" height="6.6" fill="rgba(242,54,69,0.18)"/><rect x="328.1" y="814.8" width="3.58" height="2.9" fill="rgba(242,54,69,0.18)"/><rect x="331.7" y="816.4" width="3.58" height="3.7" fill="rgba(242,54,69,0.18)"/><rect x="335.2" y="817.8" width="3.58" height="3.4" fill="rgba(242,54,69,0.18)"/><rect x="338.8" y="818.5" width="3.58" height="1.5" fill="rgba(242,54,69,0.18)"/><rect x="346.0" y="813.5" width="3.58" height="3.4" fill="rgba(0,230,118,0.22)"/><rect x="349.6" y="818.7" width="3.58" height="4.2" fill="rgba(242,54,69,0.18)"/><rect x="353.1" y="821.6" width="3.58" height="6.7" fill="rgba(242,54,69,0.18)"/><rect x="356.7" y="825.6" width="3.58" height="9.2" fill="rgba(242,54,69,0.18)"/><rect x="360.3" y="829.0" width="3.58" height="8.0" fill="rgba(242,54,69,0.18)"/><rect x="363.9" y="829.9" width="3.58" height="2.2" fill="rgba(242,54,69,0.18)"/><rect x="367.5" y="828.9" width="3.58" height="0.7" fill="rgba(0,230,118,0.22)"/><rect x="371.0" y="827.1" width="3.58" height="1.8" fill="rgba(0,230,118,0.22)"/><rect x="374.6" y="829.1" width="3.58" height="0.6" fill="rgba(242,54,69,0.18)"/><rect x="378.2" y="825.5" width="3.58" height="2.5" fill="rgba(0,230,118,0.22)"/><rect x="381.8" y="829.3" width="3.58" height="2.8" fill="rgba(242,54,69,0.18)"/><rect x="385.4" y="831.2" width="3.58" height="4.6" fill="rgba(242,54,69,0.18)"/><rect x="388.9" y="833.6" width="3.58" height="5.6" fill="rgba(242,54,69,0.18)"/><rect x="392.5" y="835.9" width="3.58" height="5.4" fill="rgba(242,54,69,0.18)"/><rect x="396.1" y="837.3" width="3.58" height="3.2" fill="rgba(242,54,69,0.18)"/><rect x="403.3" y="835.0" width="3.58" height="1.8" fill="rgba(0,230,118,0.22)"/><rect x="406.8" y="837.7" width="3.58" height="2.2" fill="rgba(242,54,69,0.18)"/><rect x="410.4" y="838.7" width="3.58" height="2.2" fill="rgba(242,54,69,0.18)"/><rect x="414.0" y="841.4" width="3.58" height="6.4" fill="rgba(242,54,69,0.18)"/><rect x="417.6" y="842.4" width="3.58" height="2.2" fill="rgba(242,54,69,0.18)"/><rect x="421.2" y="839.5" width="3.58" height="2.0" fill="rgba(0,230,118,0.22)"/><rect x="424.7" y="837.0" width="3.58" height="3.1" fill="rgba(0,230,118,0.22)"/><rect x="428.3" y="830.9" width="3.58" height="6.5" fill="rgba(0,230,118,0.22)"/><rect x="431.9" y="829.6" width="3.58" height="5.4" fill="rgba(0,230,118,0.22)"/><rect x="435.5" y="828.7" width="3.58" height="4.4" fill="rgba(0,230,118,0.22)"/><rect x="439.1" y="831.9" width="3.58" height="0.9" fill="rgba(0,230,118,0.22)"/><rect x="442.6" y="834.2" width="3.58" height="3.5" fill="rgba(242,54,69,0.18)"/><rect x="449.8" y="832.3" width="3.58" height="1.3" fill="rgba(0,230,118,0.22)"/><rect x="453.4" y="832.1" width="3.58" height="1.0" fill="rgba(0,230,118,0.22)"/><rect x="457.0" y="834.5" width="3.58" height="3.1" fill="rgba(242,54,69,0.18)"/><rect x="460.5" y="836.9" width="3.58" height="5.7" fill="rgba(242,54,69,0.18)"/><rect x="464.1" y="840.8" width="3.58" height="9.1" fill="rgba(242,54,69,0.18)"/><rect x="467.7" y="844.7" width="3.58" height="9.1" fill="rgba(242,54,69,0.18)"/><rect x="471.3" y="849.6" width="3.58" height="11.4" fill="rgba(242,54,69,0.18)"/><rect x="474.9" y="853.3" width="3.58" height="8.7" fill="rgba(242,54,69,0.18)"/><rect x="478.4" y="856.6" width="3.58" height="7.7" fill="rgba(242,54,69,0.18)"/><rect x="482.0" y="857.6" width="3.58" height="2.2" fill="rgba(242,54,69,0.18)"/><rect x="485.6" y="854.1" width="3.58" height="2.4" fill="rgba(0,230,118,0.22)"/><rect x="489.2" y="851.2" width="3.58" height="3.7" fill="rgba(0,230,118,0.22)"/><rect x="492.8" y="847.3" width="3.58" height="5.3" fill="rgba(0,230,118,0.22)"/><rect x="496.3" y="847.7" width="3.58" height="3.5" fill="rgba(0,230,118,0.22)"/><rect x="503.5" y="849.8" width="3.58" height="0.8" fill="rgba(0,230,118,0.22)"/><rect x="507.1" y="848.1" width="3.58" height="1.8" fill="rgba(0,230,118,0.22)"/><rect x="510.7" y="842.9" width="3.58" height="4.9" fill="rgba(0,230,118,0.22)"/><rect x="514.2" y="836.2" width="3.58" height="8.1" fill="rgba(0,230,118,0.22)"/><rect x="517.8" y="833.4" width="3.58" height="7.6" fill="rgba(0,230,118,0.22)"/><rect x="521.4" y="827.9" width="3.58" height="9.2" fill="rgba(0,230,118,0.22)"/><rect x="525.0" y="826.6" width="3.58" height="7.3" fill="rgba(0,230,118,0.22)"/><rect x="528.6" y="823.4" width="3.58" height="7.4" fill="rgba(0,230,118,0.22)"/><rect x="532.1" y="821.9" width="3.58" height="6.2" fill="rgba(0,230,118,0.22)"/><rect x="535.7" y="816.0" width="3.58" height="8.5" fill="rgba(0,230,118,0.22)"/><rect x="539.3" y="818.7" width="3.58" height="4.1" fill="rgba(0,230,118,0.22)"/><rect x="542.9" y="814.7" width="3.58" height="5.6" fill="rgba(0,230,118,0.22)"/><rect x="546.5" y="809.4" width="3.58" height="7.7" fill="rgba(0,230,118,0.22)"/><rect x="550.0" y="807.6" width="3.58" height="6.6" fill="rgba(0,230,118,0.22)"/><rect x="553.6" y="809.9" width="3.58" height="3.1" fill="rgba(0,230,118,0.22)"/><rect x="557.2" y="811.8" width="3.58" height="0.8" fill="rgba(0,230,118,0.22)"/><rect x="560.8" y="813.1" width="3.58" height="1.1" fill="rgba(242,54,69,0.18)"/><rect x="564.4" y="814.3" width="3.58" height="2.8" fill="rgba(242,54,69,0.18)"/><rect x="567.9" y="815.0" width="3.58" height="1.7" fill="rgba(242,54,69,0.18)"/><rect x="571.5" y="816.4" width="3.58" height="3.4" fill="rgba(242,54,69,0.18)"/><rect x="575.1" y="819.0" width="3.58" height="6.1" fill="rgba(242,54,69,0.18)"/><rect x="578.7" y="821.0" width="3.58" height="4.7" fill="rgba(242,54,69,0.18)"/><rect x="582.3" y="822.8" width="3.58" height="4.0" fill="rgba(242,54,69,0.18)"/><rect x="585.8" y="825.4" width="3.58" height="6.1" fill="rgba(242,54,69,0.18)"/><rect x="589.4" y="827.2" width="3.58" height="4.3" fill="rgba(242,54,69,0.18)"/><rect x="593.0" y="828.4" width="3.58" height="2.7" fill="rgba(242,54,69,0.18)"/><rect x="596.6" y="829.8" width="3.58" height="3.2" fill="rgba(242,54,69,0.18)"/><rect x="600.2" y="830.0" width="3.58" height="0.6" fill="rgba(242,54,69,0.18)"/><rect x="603.7" y="830.5" width="3.58" height="1.2" fill="rgba(242,54,69,0.18)"/><rect x="610.9" y="829.2" width="3.58" height="0.8" fill="rgba(0,230,118,0.22)"/><rect x="614.5" y="830.6" width="3.58" height="1.4" fill="rgba(242,54,69,0.18)"/><rect x="618.1" y="833.5" width="3.58" height="6.9" fill="rgba(242,54,69,0.18)"/><rect x="621.6" y="835.3" width="3.58" height="4.2" fill="rgba(242,54,69,0.18)"/><rect x="625.2" y="836.2" width="3.58" height="2.2" fill="rgba(242,54,69,0.18)"/><rect x="628.8" y="837.6" width="3.58" height="3.2" fill="rgba(242,54,69,0.18)"/><rect x="636.0" y="834.9" width="3.58" height="1.8" fill="rgba(0,230,118,0.22)"/><rect x="639.5" y="834.0" width="3.58" height="2.0" fill="rgba(0,230,118,0.22)"/><rect x="643.1" y="824.1" width="3.58" height="8.3" fill="rgba(0,230,118,0.22)"/><rect x="646.7" y="821.2" width="3.58" height="7.9" fill="rgba(0,230,118,0.22)"/><rect x="650.3" y="813.2" width="3.58" height="11.1" fill="rgba(0,230,118,0.22)"/><rect x="653.9" y="812.5" width="3.58" height="8.2" fill="rgba(0,230,118,0.22)"/><rect x="657.4" y="813.3" width="3.58" height="5.2" fill="rgba(0,230,118,0.22)"/><rect x="661.0" y="813.5" width="3.58" height="3.5" fill="rgba(0,230,118,0.22)"/><rect x="664.6" y="811.6" width="3.58" height="3.8" fill="rgba(0,230,118,0.22)"/><rect x="668.2" y="812.1" width="3.58" height="2.3" fill="rgba(0,230,118,0.22)"/><rect x="671.8" y="814.7" width="3.58" height="0.6" fill="rgba(242,54,69,0.18)"/><rect x="675.3" y="816.2" width="3.58" height="3.5" fill="rgba(242,54,69,0.18)"/><rect x="678.9" y="817.3" width="3.58" height="2.6" fill="rgba(242,54,69,0.18)"/><rect x="686.1" y="818.8" width="3.58" height="3.5" fill="rgba(242,54,69,0.18)"/><rect x="693.2" y="813.5" width="3.58" height="3.7" fill="rgba(0,230,118,0.22)"/><rect x="696.8" y="807.2" width="3.58" height="7.0" fill="rgba(0,230,118,0.22)"/><rect x="700.4" y="805.6" width="3.58" height="6.0" fill="rgba(0,230,118,0.22)"/><rect x="704.0" y="804.2" width="3.58" height="5.2" fill="rgba(0,230,118,0.22)"/><rect x="707.6" y="801.2" width="3.58" height="5.7" fill="rgba(0,230,118,0.22)"/><rect x="711.1" y="797.0" width="3.58" height="7.0" fill="rgba(0,230,118,0.22)"/><rect x="714.7" y="793.4" width="3.58" height="7.4" fill="rgba(0,230,118,0.22)"/><rect x="718.3" y="786.4" width="3.58" height="10.1" fill="rgba(0,230,118,0.22)"/><rect x="721.9" y="785.4" width="3.58" height="7.8" fill="rgba(0,230,118,0.22)"/><rect x="725.5" y="786.3" width="3.58" height="4.8" fill="rgba(0,230,118,0.22)"/><rect x="729.0" y="791.4" width="3.58" height="0.7" fill="rgba(242,54,69,0.18)"/><rect x="732.6" y="792.6" width="3.58" height="2.8" fill="rgba(242,54,69,0.18)"/><rect x="736.2" y="794.5" width="3.58" height="4.3" fill="rgba(242,54,69,0.18)"/><rect x="739.8" y="795.9" width="3.58" height="3.3" fill="rgba(242,54,69,0.18)"/><rect x="743.4" y="797.0" width="3.58" height="2.5" fill="rgba(242,54,69,0.18)"/><rect x="746.9" y="798.0" width="3.58" height="2.4" fill="rgba(242,54,69,0.18)"/><rect x="750.5" y="799.0" width="3.58" height="2.5" fill="rgba(242,54,69,0.18)"/><rect x="754.1" y="800.0" width="3.58" height="2.3" fill="rgba(242,54,69,0.18)"/><rect x="757.7" y="801.7" width="3.58" height="4.0" fill="rgba(242,54,69,0.18)"/><rect x="761.3" y="803.0" width="3.58" height="3.1" fill="rgba(242,54,69,0.18)"/><rect x="768.4" y="803.7" width="3.58" height="1.0" fill="rgba(242,54,69,0.18)"/><rect x="772.0" y="802.9" width="3.58" height="0.6" fill="rgba(0,230,118,0.22)"/><rect x="775.6" y="802.6" width="3.58" height="0.6" fill="rgba(0,230,118,0.22)"/><rect x="779.2" y="798.6" width="3.58" height="3.2" fill="rgba(0,230,118,0.22)"/><rect x="782.7" y="796.3" width="3.58" height="3.9" fill="rgba(0,230,118,0.22)"/><rect x="786.3" y="793.0" width="3.58" height="5.0" fill="rgba(0,230,118,0.22)"/><rect x="789.9" y="791.8" width="3.58" height="4.4" fill="rgba(0,230,118,0.22)"/><rect x="793.5" y="790.9" width="3.58" height="3.7" fill="rgba(0,230,118,0.22)"/><rect x="797.1" y="789.0" width="3.58" height="3.9" fill="rgba(0,230,118,0.22)"/><rect x="800.6" y="780.0" width="3.58" height="9.0" fill="rgba(0,230,118,0.22)"/><rect x="804.2" y="767.1" width="3.58" height="15.4" fill="rgba(0,230,118,0.22)"/><rect x="807.8" y="761.9" width="3.58" height="14.4" fill="rgba(0,230,118,0.22)"/><rect x="811.4" y="757.7" width="3.58" height="13.0" fill="rgba(0,230,118,0.22)"/><rect x="815.0" y="755.0" width="3.58" height="11.0" fill="rgba(0,230,118,0.22)"/><rect x="818.5" y="756.2" width="3.58" height="6.8" fill="rgba(0,230,118,0.22)"/><rect x="822.1" y="756.4" width="3.58" height="4.7" fill="rgba(0,230,118,0.22)"/><rect x="825.7" y="758.3" width="3.58" height="1.9" fill="rgba(0,230,118,0.22)"/><rect x="829.3" y="760.9" width="3.58" height="1.5" fill="rgba(242,54,69,0.18)"/><rect x="832.9" y="762.9" width="3.58" height="4.7" fill="rgba(242,54,69,0.18)"/><rect x="836.4" y="764.3" width="3.58" height="3.2" fill="rgba(242,54,69,0.18)"/><rect x="840.0" y="765.1" width="3.58" height="2.0" fill="rgba(242,54,69,0.18)"/><rect x="843.6" y="760.4" width="3.58" height="3.3" fill="rgba(0,230,118,0.22)"/><rect x="847.2" y="760.2" width="3.58" height="2.5" fill="rgba(0,230,118,0.22)"/><rect x="850.8" y="761.9" width="3.58" height="0.5" fill="rgba(0,230,118,0.22)"/><rect x="854.3" y="764.6" width="3.58" height="4.9" fill="rgba(242,54,69,0.18)"/><rect x="857.9" y="766.8" width="3.58" height="5.3" fill="rgba(242,54,69,0.18)"/><rect x="861.5" y="769.9" width="3.58" height="7.2" fill="rgba(242,54,69,0.18)"/><rect x="865.1" y="773.0" width="3.58" height="7.2" fill="rgba(242,54,69,0.18)"/><rect x="868.7" y="776.3" width="3.58" height="7.6" fill="rgba(242,54,69,0.18)"/><rect x="872.2" y="780.7" width="3.58" height="10.3" fill="rgba(242,54,69,0.18)"/><rect x="875.8" y="787.6" width="3.58" height="16.1" fill="rgba(242,54,69,0.18)"/><rect x="879.4" y="794.9" width="3.58" height="17.1" fill="rgba(242,54,69,0.18)"/><rect x="883.0" y="802.2" width="3.58" height="17.1" fill="rgba(242,54,69,0.18)"/><rect x="886.6" y="809.1" width="3.58" height="16.0" fill="rgba(242,54,69,0.18)"/><rect x="890.1" y="814.0" width="3.58" height="11.5" fill="rgba(242,54,69,0.18)"/><rect x="893.7" y="818.2" width="3.58" height="9.7" fill="rgba(242,54,69,0.18)"/><rect x="897.3" y="820.5" width="3.58" height="5.4" fill="rgba(242,54,69,0.18)"/><rect x="900.9" y="821.4" width="3.58" height="2.3" fill="rgba(242,54,69,0.18)"/><rect x="904.5" y="820.2" width="3.58" height="0.9" fill="rgba(0,230,118,0.22)"/><rect x="908.0" y="816.1" width="3.58" height="3.5" fill="rgba(0,230,118,0.22)"/><rect x="911.6" y="814.4" width="3.58" height="3.6" fill="rgba(0,230,118,0.22)"/><rect x="915.2" y="813.6" width="3.58" height="3.1" fill="rgba(0,230,118,0.22)"/><rect x="918.8" y="802.2" width="3.58" height="10.2" fill="rgba(0,230,118,0.22)"/><rect x="922.4" y="797.3" width="3.58" height="10.5" fill="rgba(0,230,118,0.22)"/><rect x="925.9" y="793.1" width="3.58" height="10.3" fill="rgba(0,230,118,0.22)"/><rect x="929.5" y="790.2" width="3.58" height="9.3" fill="rgba(0,230,118,0.22)"/><rect x="933.1" y="787.0" width="3.58" height="8.7" fill="rgba(0,230,118,0.22)"/><rect x="936.7" y="785.2" width="3.58" height="7.4" fill="rgba(0,230,118,0.22)"/><rect x="940.3" y="781.9" width="3.58" height="7.5" fill="rgba(0,230,118,0.22)"/><rect x="943.8" y="777.3" width="3.58" height="8.4" fill="rgba(0,230,118,0.22)"/><rect x="947.4" y="776.9" width="3.58" height="6.2" fill="rgba(0,230,118,0.22)"/><rect x="951.0" y="776.6" width="3.58" height="4.6" fill="rgba(0,230,118,0.22)"/><rect x="954.6" y="777.5" width="3.58" height="2.5" fill="rgba(0,230,118,0.22)"/><rect x="958.2" y="778.3" width="3.58" height="1.2" fill="rgba(0,230,118,0.22)"/><rect x="968.9" y="780.5" width="3.58" height="2.8" fill="rgba(242,54,69,0.18)"/><rect x="972.5" y="782.4" width="3.58" height="4.6" fill="rgba(242,54,69,0.18)"/><rect x="976.1" y="784.5" width="3.58" height="4.7" fill="rgba(242,54,69,0.18)"/><rect x="979.6" y="787.9" width="3.58" height="7.9" fill="rgba(242,54,69,0.18)"/><rect x="983.2" y="790.1" width="3.58" height="5.1" fill="rgba(242,54,69,0.18)"/><rect x="986.8" y="792.2" width="3.58" height="5.0" fill="rgba(242,54,69,0.18)"/><rect x="990.4" y="794.4" width="3.58" height="5.2" fill="rgba(242,54,69,0.18)"/><rect x="994.0" y="797.3" width="3.58" height="6.8" fill="rgba(242,54,69,0.18)"/><rect x="997.5" y="799.6" width="3.58" height="5.4" fill="rgba(242,54,69,0.18)"/><rect x="1001.1" y="801.8" width="3.58" height="5.1" fill="rgba(242,54,69,0.18)"/><rect x="1004.7" y="804.6" width="3.58" height="6.5" fill="rgba(242,54,69,0.18)"/><rect x="1008.3" y="806.2" width="3.58" height="3.6" fill="rgba(242,54,69,0.18)"/><rect x="1015.4" y="803.0" width="3.58" height="2.1" fill="rgba(0,230,118,0.22)"/><rect x="1019.0" y="797.7" width="3.58" height="5.2" fill="rgba(0,230,118,0.22)"/><rect x="1022.6" y="790.6" width="3.58" height="8.6" fill="rgba(0,230,118,0.22)"/><rect x="1026.2" y="784.6" width="3.58" height="10.3" fill="rgba(0,230,118,0.22)"/><rect x="1029.8" y="779.4" width="3.58" height="10.8" fill="rgba(0,230,118,0.22)"/><rect x="1033.3" y="781.9" width="3.58" height="5.8" fill="rgba(0,230,118,0.22)"/><rect x="1036.9" y="783.6" width="3.58" height="2.9" fill="rgba(0,230,118,0.22)"/><rect x="1040.5" y="782.5" width="3.58" height="2.8" fill="rgba(0,230,118,0.22)"/><rect x="1044.1" y="786.1" width="3.58" height="1.9" fill="rgba(242,54,69,0.18)"/><rect x="1047.7" y="786.5" width="3.58" height="0.8" fill="rgba(242,54,69,0.18)"/><rect x="1051.2" y="786.8" width="3.58" height="0.7" fill="rgba(242,54,69,0.18)"/><rect x="1054.8" y="787.8" width="3.58" height="2.4" fill="rgba(242,54,69,0.18)"/><rect x="1058.4" y="782.8" width="3.58" height="3.5" fill="rgba(0,230,118,0.22)"/><rect x="1062.0" y="777.2" width="3.58" height="6.4" fill="rgba(0,230,118,0.22)"/><rect x="1065.6" y="769.0" width="3.58" height="10.2" fill="rgba(0,230,118,0.22)"/><rect x="1069.1" y="759.9" width="3.58" height="13.5" fill="rgba(0,230,118,0.22)"/><rect x="1072.7" y="747.1" width="3.58" height="18.4" fill="rgba(0,230,118,0.22)"/><rect x="1076.3" y="737.2" width="3.58" height="19.8" fill="rgba(0,230,118,0.22)"/><rect x="1079.9" y="736.2" width="3.58" height="14.6" fill="rgba(0,230,118,0.22)"/><rect x="1083.5" y="736.4" width="3.58" height="10.1" fill="rgba(0,230,118,0.22)"/><rect x="1087.0" y="734.9" width="3.58" height="8.1" fill="rgba(0,230,118,0.22)"/><rect x="1090.6" y="733.2" width="3.58" height="6.9" fill="rgba(0,230,118,0.22)"/><rect x="1094.2" y="735.8" width="3.58" height="3.0" fill="rgba(0,230,118,0.22)"/><rect x="1101.4" y="739.8" width="3.58" height="2.7" fill="rgba(242,54,69,0.18)"/><rect x="1104.9" y="741.8" width="3.58" height="4.6" fill="rgba(242,54,69,0.18)"/><rect x="1108.5" y="744.7" width="3.58" height="6.7" fill="rgba(242,54,69,0.18)"/><rect x="1112.1" y="748.1" width="3.58" height="8.0" fill="rgba(242,54,69,0.18)"/><rect x="1115.7" y="750.3" width="3.58" height="5.2" fill="rgba(242,54,69,0.18)"/><rect x="1119.3" y="752.3" width="3.58" height="4.7" fill="rgba(242,54,69,0.18)"/><rect x="1122.8" y="752.8" width="3.58" height="1.1" fill="rgba(242,54,69,0.18)"/><rect x="1126.4" y="753.5" width="3.58" height="1.6" fill="rgba(242,54,69,0.18)"/><rect x="1130.0" y="753.8" width="3.58" height="0.7" fill="rgba(242,54,69,0.18)"/><rect x="1133.6" y="751.0" width="3.58" height="1.9" fill="rgba(0,230,118,0.22)"/><rect x="1137.2" y="748.0" width="3.58" height="3.5" fill="rgba(0,230,118,0.22)"/><rect x="1140.7" y="741.5" width="3.58" height="7.0" fill="rgba(0,230,118,0.22)"/><rect x="1144.3" y="734.5" width="3.58" height="9.8" fill="rgba(0,230,118,0.22)"/><rect x="1147.9" y="738.1" width="3.58" height="4.3" fill="rgba(0,230,118,0.22)"/><rect x="1151.5" y="738.5" width="3.58" height="2.7" fill="rgba(0,230,118,0.22)"/><rect x="1155.1" y="736.0" width="3.58" height="3.7" fill="rgba(0,230,118,0.22)"/><rect x="1158.6" y="738.6" width="3.58" height="0.8" fill="rgba(0,230,118,0.22)"/><rect x="1162.2" y="735.9" width="3.58" height="2.5" fill="rgba(0,230,118,0.22)"/><rect x="1165.8" y="733.3" width="3.58" height="3.5" fill="rgba(0,230,118,0.22)"/><rect x="1169.4" y="734.5" width="3.58" height="1.6" fill="rgba(0,230,118,0.22)"/><rect x="1173.0" y="732.2" width="3.58" height="2.7" fill="rgba(0,230,118,0.22)"/><rect x="1176.5" y="729.0" width="3.58" height="4.1" fill="rgba(0,230,118,0.22)"/><rect x="1180.1" y="724.7" width="3.58" height="5.9" fill="rgba(0,230,118,0.22)"/><rect x="1183.7" y="724.6" width="3.58" height="4.2" fill="rgba(0,230,118,0.22)"/><rect x="1187.3" y="720.0" width="3.58" height="6.2" fill="rgba(0,230,118,0.22)"/><rect x="1190.9" y="718.2" width="3.58" height="5.6" fill="rgba(0,230,118,0.22)"/><rect x="1194.4" y="714.3" width="3.58" height="6.6" fill="rgba(0,230,118,0.22)"/><rect x="1198.0" y="709.5" width="3.58" height="8.0" fill="rgba(0,230,118,0.22)"/><rect x="1201.6" y="710.9" width="3.58" height="4.6" fill="rgba(0,230,118,0.22)"/><rect x="1205.2" y="715.7" width="3.58" height="0.5" fill="rgba(242,54,69,0.18)"/><rect x="1208.8" y="716.6" width="3.58" height="2.0" fill="rgba(242,54,69,0.18)"/><rect x="1212.3" y="717.6" width="3.58" height="2.4" fill="rgba(242,54,69,0.18)"/><rect x="1215.9" y="719.1" width="3.58" height="3.5" fill="rgba(242,54,69,0.18)"/><rect x="1219.5" y="721.2" width="3.58" height="4.7" fill="rgba(242,54,69,0.18)"/><rect x="1223.1" y="723.2" width="3.58" height="4.9" fill="rgba(242,54,69,0.18)"/><rect x="1226.7" y="725.8" width="3.58" height="5.9" fill="rgba(242,54,69,0.18)"/><rect x="1230.2" y="727.1" width="3.58" height="3.1" fill="rgba(242,54,69,0.18)"/><rect x="1233.8" y="727.3" width="3.58" height="0.5" fill="rgba(242,54,69,0.18)"/><rect x="1237.4" y="725.2" width="3.58" height="1.5" fill="rgba(0,230,118,0.22)"/><rect x="1241.0" y="727.0" width="3.58" height="0.7" fill="rgba(242,54,69,0.18)"/><rect x="1244.6" y="727.3" width="3.58" height="0.8" fill="rgba(242,54,69,0.18)"/><rect x="1248.1" y="730.1" width="3.58" height="6.4" fill="rgba(242,54,69,0.18)"/><rect x="1251.7" y="735.4" width="3.58" height="12.5" fill="rgba(242,54,69,0.18)"/><rect x="1255.3" y="740.8" width="3.58" height="12.4" fill="rgba(242,54,69,0.18)"/><rect x="1258.9" y="745.5" width="3.58" height="11.2" fill="rgba(242,54,69,0.18)"/><rect x="1262.5" y="750.1" width="3.58" height="10.7" fill="rgba(242,54,69,0.18)"/><rect x="1266.0" y="754.2" width="3.58" height="9.6" fill="rgba(242,54,69,0.18)"/><rect x="1269.6" y="758.4" width="3.58" height="9.7" fill="rgba(242,54,69,0.18)"/><rect x="1273.2" y="762.4" width="3.58" height="9.4" fill="rgba(242,54,69,0.18)"/><rect x="1276.8" y="768.1" width="3.58" height="13.2" fill="rgba(242,54,69,0.18)"/><rect x="1280.4" y="773.6" width="3.58" height="12.9" fill="rgba(242,54,69,0.18)"/><rect x="1283.9" y="776.6" width="3.58" height="6.9" fill="rgba(242,54,69,0.18)"/><rect x="1287.5" y="779.8" width="3.58" height="7.6" fill="rgba(242,54,69,0.18)"/><rect x="1291.1" y="780.5" width="3.58" height="1.6" fill="rgba(242,54,69,0.18)"/><rect x="1294.7" y="781.2" width="3.58" height="1.5" fill="rgba(242,54,69,0.18)"/><rect x="1305.4" y="779.1" width="3.58" height="1.6" fill="rgba(0,230,118,0.22)"/><rect x="1309.0" y="776.1" width="3.58" height="3.2" fill="rgba(0,230,118,0.22)"/><rect x="1312.6" y="773.7" width="3.58" height="3.9" fill="rgba(0,230,118,0.22)"/><rect x="1316.2" y="774.3" width="3.58" height="2.3" fill="rgba(0,230,118,0.22)"/><rect x="1319.7" y="773.0" width="3.58" height="2.6" fill="rgba(0,230,118,0.22)"/><rect x="1323.3" y="772.2" width="3.58" height="2.4" fill="rgba(0,230,118,0.22)"/><rect x="1330.5" y="773.1" width="3.58" height="1.1" fill="rgba(0,230,118,0.22)"/><rect x="1344.8" y="767.9" width="3.58" height="4.4" fill="rgba(0,230,118,0.22)"/><rect x="1348.4" y="762.7" width="3.58" height="6.8" fill="rgba(0,230,118,0.22)"/><rect x="1352.0" y="761.6" width="3.58" height="5.5" fill="rgba(0,230,118,0.22)"/><rect x="1355.5" y="759.0" width="3.58" height="5.7" fill="rgba(0,230,118,0.22)"/><rect x="1359.1" y="756.4" width="3.58" height="5.8" fill="rgba(0,230,118,0.22)"/><rect x="1362.7" y="756.2" width="3.58" height="4.2" fill="rgba(0,230,118,0.22)"/><rect x="1366.3" y="754.1" width="3.58" height="4.4" fill="rgba(0,230,118,0.22)"/><rect x="1369.9" y="755.0" width="3.58" height="2.4" fill="rgba(0,230,118,0.22)"/><rect x="1377.0" y="758.0" width="3.58" height="0.9" fill="rgba(242,54,69,0.18)"/><rect x="1380.6" y="758.7" width="3.58" height="1.5" fill="rgba(242,54,69,0.18)"/><rect x="1384.2" y="759.7" width="3.58" height="2.3" fill="rgba(242,54,69,0.18)"/><rect x="1394.9" y="760.5" width="3.58" height="1.1" fill="rgba(242,54,69,0.18)"/><rect x="1398.5" y="759.0" width="3.58" height="1.0" fill="rgba(0,230,118,0.22)"/><rect x="1402.1" y="760.3" width="3.58" height="0.5" fill="rgba(242,54,69,0.18)"/><rect x="1409.2" y="761.1" width="3.58" height="1.4" fill="rgba(242,54,69,0.18)"/><rect x="1412.8" y="762.0" width="3.58" height="2.2" fill="rgba(242,54,69,0.18)"/><rect x="1416.4" y="760.3" width="3.58" height="1.2" fill="rgba(0,230,118,0.22)"/><rect x="1420.0" y="761.9" width="3.58" height="0.9" fill="rgba(242,54,69,0.18)"/><rect x="1423.6" y="760.9" width="3.58" height="0.7" fill="rgba(0,230,118,0.22)"/><rect x="1427.1" y="761.9" width="3.58" height="0.8" fill="rgba(242,54,69,0.18)"/><rect x="1430.7" y="762.9" width="3.58" height="2.3" fill="rgba(242,54,69,0.18)"/><rect x="1434.3" y="764.8" width="3.58" height="4.4" fill="rgba(242,54,69,0.18)"/><rect x="1437.9" y="766.4" width="3.58" height="3.8" fill="rgba(242,54,69,0.18)"/><rect x="1441.5" y="769.5" width="3.58" height="7.2" fill="rgba(242,54,69,0.18)"/><rect x="1445.0" y="772.1" width="3.58" height="6.0" fill="rgba(242,54,69,0.18)"/><rect x="1448.6" y="775.1" width="3.58" height="6.9" fill="rgba(242,54,69,0.18)"/><rect x="1452.2" y="778.1" width="3.58" height="7.0" fill="rgba(242,54,69,0.18)"/><rect x="1455.8" y="781.1" width="3.58" height="7.1" fill="rgba(242,54,69,0.18)"/><rect x="1459.4" y="781.9" width="3.58" height="1.9" fill="rgba(242,54,69,0.18)"/><rect x="1462.9" y="780.0" width="3.58" height="1.3" fill="rgba(0,230,118,0.22)"/><rect x="1466.5" y="777.4" width="3.58" height="2.8" fill="rgba(0,230,118,0.22)"/><rect x="1470.1" y="773.1" width="3.58" height="5.0" fill="rgba(0,230,118,0.22)"/><rect x="1473.7" y="773.7" width="3.58" height="3.1" fill="rgba(0,230,118,0.22)"/><rect x="1477.3" y="770.1" width="3.58" height="4.6" fill="rgba(0,230,118,0.22)"/><rect x="1480.8" y="769.5" width="3.58" height="3.7" fill="rgba(0,230,118,0.22)"/><rect x="1484.4" y="769.3" width="3.58" height="2.7" fill="rgba(0,230,118,0.22)"/><rect x="1488.0" y="768.1" width="3.58" height="2.7" fill="rgba(0,230,118,0.22)"/><rect x="1491.6" y="769.8" width="3.58" height="0.7" fill="rgba(0,230,118,0.22)"/><rect x="1495.2" y="771.3" width="3.58" height="1.9" fill="rgba(242,54,69,0.18)"/><rect x="1498.7" y="771.8" width="3.58" height="1.1" fill="rgba(242,54,69,0.18)"/><rect x="1505.9" y="772.7" width="3.58" height="1.7" fill="rgba(242,54,69,0.18)"/><rect x="1513.1" y="769.8" width="3.58" height="2.1" fill="rgba(0,230,118,0.22)"/><rect x="1516.6" y="768.2" width="3.58" height="2.7" fill="rgba(0,230,118,0.22)"/><rect x="1520.2" y="766.8" width="3.58" height="2.8" fill="rgba(0,230,118,0.22)"/><rect x="1523.8" y="768.2" width="3.58" height="1.0" fill="rgba(0,230,118,0.22)"/><rect x="1531.0" y="770.4" width="3.58" height="3.0" fill="rgba(242,54,69,0.18)"/><rect x="1534.5" y="773.1" width="3.58" height="6.3" fill="rgba(242,54,69,0.18)"/><rect x="1538.1" y="776.6" width="3.58" height="8.2" fill="rgba(242,54,69,0.18)"/><rect x="1541.7" y="779.3" width="3.58" height="6.2" fill="rgba(242,54,69,0.18)"/><rect x="1545.3" y="782.1" width="3.58" height="6.7" fill="rgba(242,54,69,0.18)"/><rect x="1548.9" y="784.5" width="3.58" height="5.5" fill="rgba(242,54,69,0.18)"/><rect x="1552.4" y="786.7" width="3.58" height="5.2" fill="rgba(242,54,69,0.18)"/><rect x="1556.0" y="788.7" width="3.58" height="4.6" fill="rgba(242,54,69,0.18)"/><rect x="1559.6" y="790.2" width="3.58" height="3.6" fill="rgba(242,54,69,0.18)"/><rect x="1563.2" y="791.5" width="3.58" height="3.0" fill="rgba(242,54,69,0.18)"/><rect x="1566.8" y="788.8" width="3.58" height="1.8" fill="rgba(0,230,118,0.22)"/><rect x="1570.3" y="785.4" width="3.58" height="3.7" fill="rgba(0,230,118,0.22)"/><rect x="1573.9" y="783.5" width="3.58" height="3.9" fill="rgba(0,230,118,0.22)"/><rect x="1577.5" y="783.1" width="3.58" height="3.0" fill="rgba(0,230,118,0.22)"/><rect x="1581.1" y="784.0" width="3.58" height="1.5" fill="rgba(0,230,118,0.22)"/><rect x="1588.2" y="787.6" width="3.58" height="4.6" fill="rgba(242,54,69,0.18)"/><rect x="1591.8" y="789.8" width="3.58" height="5.3" fill="rgba(242,54,69,0.18)"/><rect x="1595.4" y="791.7" width="3.58" height="4.3" fill="rgba(242,54,69,0.18)"/><rect x="1599.0" y="788.4" width="3.58" height="2.3" fill="rgba(0,230,118,0.22)"/><rect x="1602.6" y="783.7" width="3.58" height="4.9" fill="rgba(0,230,118,0.22)"/><rect x="1606.1" y="779.9" width="3.58" height="6.1" fill="rgba(0,230,118,0.22)"/><rect x="1609.7" y="777.3" width="3.58" height="6.1" fill="rgba(0,230,118,0.22)"/><rect x="1613.3" y="773.9" width="3.58" height="6.6" fill="rgba(0,230,118,0.22)"/><rect x="1616.9" y="773.3" width="3.58" height="5.1" fill="rgba(0,230,118,0.22)"/><rect x="1620.5" y="770.4" width="3.58" height="5.6" fill="rgba(0,230,118,0.22)"/><rect x="1624.0" y="767.5" width="3.58" height="5.9" fill="rgba(0,230,118,0.22)"/><rect x="1627.6" y="768.4" width="3.58" height="3.5" fill="rgba(0,230,118,0.22)"/><rect x="1631.2" y="771.0" width="3.58" height="0.7" fill="rgba(0,230,118,0.22)"/><rect x="1638.4" y="772.4" width="3.58" height="2.2" fill="rgba(242,54,69,0.18)"/><rect x="1641.9" y="773.9" width="3.58" height="3.4" fill="rgba(242,54,69,0.18)"/><rect x="1645.5" y="775.6" width="3.58" height="4.0" fill="rgba(242,54,69,0.18)"/><rect x="1649.1" y="779.2" width="3.58" height="8.5" fill="rgba(242,54,69,0.18)"/><rect x="1652.7" y="781.3" width="3.58" height="4.9" fill="rgba(242,54,69,0.18)"/><rect x="1656.3" y="782.4" width="3.58" height="2.5" fill="rgba(242,54,69,0.18)"/><rect x="1659.8" y="783.0" width="3.58" height="1.4" fill="rgba(242,54,69,0.18)"/><rect x="1663.4" y="783.6" width="3.58" height="1.5" fill="rgba(242,54,69,0.18)"/><rect x="1667.0" y="784.3" width="3.58" height="1.6" fill="rgba(242,54,69,0.18)"/><rect x="1670.6" y="785.9" width="3.58" height="3.7" fill="rgba(242,54,69,0.18)"/><rect x="1674.2" y="787.6" width="3.58" height="4.0" fill="rgba(242,54,69,0.18)"/><rect x="1677.7" y="788.8" width="3.58" height="2.6" fill="rgba(242,54,69,0.18)"/><rect x="1681.3" y="787.4" width="3.58" height="0.9" fill="rgba(0,230,118,0.22)"/><rect x="1684.9" y="780.3" width="3.58" height="5.7" fill="rgba(0,230,118,0.22)"/><rect x="1688.5" y="775.4" width="3.58" height="7.4" fill="rgba(0,230,118,0.22)"/><rect x="1695.6" y="785.1" width="3.58" height="5.7" fill="rgba(242,54,69,0.18)"/><rect x="1699.2" y="788.9" width="3.58" height="9.0" fill="rgba(242,54,69,0.18)"/><rect x="1702.8" y="790.9" width="3.58" height="4.5" fill="rgba(242,54,69,0.18)"/><rect x="1706.4" y="792.1" width="3.58" height="2.8" fill="rgba(242,54,69,0.18)"/><rect x="1710.0" y="793.5" width="3.58" height="3.3" fill="rgba(242,54,69,0.18)"/><rect x="1713.5" y="794.0" width="3.58" height="1.1" fill="rgba(242,54,69,0.18)"/><rect x="1717.1" y="792.9" width="3.58" height="0.7" fill="rgba(0,230,118,0.22)"/><rect x="1720.7" y="794.7" width="3.58" height="2.5" fill="rgba(242,54,69,0.18)"/><rect x="1727.9" y="791.0" width="3.58" height="2.5" fill="rgba(0,230,118,0.22)"/><rect x="1731.4" y="787.0" width="3.58" height="4.6" fill="rgba(0,230,118,0.22)"/><rect x="1738.6" y="791.8" width="3.58" height="0.9" fill="rgba(242,54,69,0.18)"/><rect x="1742.2" y="792.3" width="3.58" height="1.0" fill="rgba(242,54,69,0.18)"/><rect x="1749.3" y="793.6" width="3.58" height="3.0" fill="rgba(242,54,69,0.18)"/><rect x="1752.9" y="794.4" width="3.58" height="2.0" fill="rgba(242,54,69,0.18)"/><rect x="1756.5" y="794.9" width="3.58" height="1.1" fill="rgba(242,54,69,0.18)"/><rect x="1763.7" y="794.1" width="3.58" height="0.7" fill="rgba(0,230,118,0.22)"/><rect x="1767.2" y="793.2" width="3.58" height="1.1" fill="rgba(0,230,118,0.22)"/><rect x="1770.8" y="793.3" width="3.58" height="0.7" fill="rgba(0,230,118,0.22)"/><rect x="1774.4" y="789.7" width="3.58" height="3.0" fill="rgba(0,230,118,0.22)"/><rect x="1778.0" y="793.5" width="3.58" height="1.7" fill="rgba(242,54,69,0.18)"/><rect x="1788.7" y="788.2" width="3.58" height="3.6" fill="rgba(0,230,118,0.22)"/><rect x="1792.3" y="786.2" width="3.58" height="3.9" fill="rgba(0,230,118,0.22)"/><rect x="1795.9" y="782.8" width="3.58" height="5.1" fill="rgba(0,230,118,0.22)"/><rect x="1799.5" y="778.0" width="3.58" height="7.0" fill="rgba(0,230,118,0.22)"/><rect x="1803.0" y="778.8" width="3.58" height="4.3" fill="rgba(0,230,118,0.22)"/><rect x="1806.6" y="779.1" width="3.58" height="2.8" fill="rgba(0,230,118,0.22)"/><rect x="1810.2" y="779.8" width="3.58" height="1.5" fill="rgba(0,230,118,0.22)"/><rect x="1813.8" y="782.1" width="3.58" height="1.8" fill="rgba(242,54,69,0.18)"/><rect x="1817.4" y="785.4" width="3.58" height="7.8" fill="rgba(242,54,69,0.18)"/><rect x="1820.9" y="789.9" width="3.58" height="10.6" fill="rgba(242,54,69,0.18)"/><rect x="1824.5" y="795.0" width="1.48" height="11.8" fill="rgba(242,54,69,0.18)"/><path d="M56.0 856.8 L56.0 856.8 L59.6 856.8" fill="none" stroke="#ff3b4e" stroke-width="3" stroke-linecap="square"/><path d="M59.6 856.8 L59.6 859.5 L63.2 859.5" fill="none" stroke="#ff3b4e" stroke-width="3" stroke-linecap="square"/><path d="M63.2 859.5 L63.2 864.9 L66.7 864.9" fill="none" stroke="#ff3b4e" stroke-width="3" stroke-linecap="square"/><path d="M66.7 864.9 L66.7 865.4 L70.3 865.4" fill="none" stroke="#ff3b4e" stroke-width="3" stroke-linecap="square"/><path d="M70.3 865.4 L70.3 872.6 L73.9 872.6" fill="none" stroke="#ff3b4e" stroke-width="3" stroke-linecap="square"/><path d="M73.9 872.6 L73.9 871.1 L77.5 871.1" fill="none" stroke="#ff3b4e" stroke-width="3" stroke-linecap="square"/><path d="M77.5 871.1 L77.5 871.8 L81.1 871.8" fill="none" stroke="#ff3b4e" stroke-width="3" stroke-linecap="square"/><path d="M81.1 871.8 L81.1 866.5 L84.6 866.5" fill="none" stroke="#00e676" stroke-width="3" stroke-linecap="square"/><path d="M84.6 866.5 L84.6 859.7 L88.2 859.7" fill="none" stroke="#00e676" stroke-width="3" stroke-linecap="square"/><path d="M88.2 859.7 L88.2 846.8 L91.8 846.8" fill="none" stroke="#00e676" stroke-width="3" stroke-linecap="square"/><path d="M91.8 846.8 L91.8 836.5 L95.4 836.5" fill="none" stroke="#00e676" stroke-width="3" stroke-linecap="square"/><path d="M95.4 836.5 L95.4 832.5 L99.0 832.5" fill="none" stroke="#00e676" stroke-width="3" stroke-linecap="square"/><path d="M99.0 832.5 L99.0 828.8 L102.5 828.8" fill="none" stroke="#00e676" stroke-width="3" stroke-linecap="square"/><path d="M102.5 828.8 L102.5 830.3 L106.1 830.3" fill="none" stroke="#00e676" stroke-width="3" stroke-linecap="square"/><path d="M106.1 830.3 L106.1 828.9 L109.7 828.9" fill="none" stroke="#00e676" stroke-width="3" stroke-linecap="square"/><path d="M109.7 828.9 L109.7 825.2 L113.3 825.2" fill="none" stroke="#00e676" stroke-width="3" stroke-linecap="square"/><path d="M113.3 825.2 L113.3 819.3 L116.9 819.3" fill="none" stroke="#00e676" stroke-width="3" stroke-linecap="square"/><path d="M116.9 819.3 L116.9 813.7 L120.4 813.7" fill="none" stroke="#00e676" stroke-width="3" stroke-linecap="square"/><path d="M120.4 813.7 L120.4 808.7 L124.0 808.7" fill="none" stroke="#00e676" stroke-width="3" stroke-linecap="square"/><path d="M124.0 808.7 L124.0 808.5 L127.6 808.5" fill="none" stroke="#00e676" stroke-width="3" stroke-linecap="square"/><path d="M127.6 808.5 L127.6 804.4 L131.2 804.4" fill="none" stroke="#00e676" stroke-width="3" stroke-linecap="square"/><path d="M131.2 804.4 L131.2 803.9 L134.8 803.9" fill="none" stroke="#00e676" stroke-width="3" stroke-linecap="square"/><path d="M134.8 803.9 L134.8 805.1 L138.3 805.1" fill="none" stroke="#00e676" stroke-width="3" stroke-linecap="square"/><path d="M138.3 805.1 L138.3 808.7 L141.9 808.7" fill="none" stroke="#ff3b4e" stroke-width="3" stroke-linecap="square"/><path d="M141.9 808.7 L141.9 814.8 L145.5 814.8" fill="none" stroke="#ff3b4e" stroke-width="3" stroke-linecap="square"/><path d="M145.5 814.8 L145.5 818.0 L149.1 818.0" fill="none" stroke="#ff3b4e" stroke-width="3" stroke-linecap="square"/><path d="M149.1 818.0 L149.1 821.1 L152.7 821.1" fill="none" stroke="#ff3b4e" stroke-width="3" stroke-linecap="square"/><path d="M152.7 821.1 L152.7 818.0 L156.2 818.0" fill="none" stroke="#ff3b4e" stroke-width="3" stroke-linecap="square"/><path d="M156.2 818.0 L156.2 815.2 L159.8 815.2" fill="none" stroke="#00e676" stroke-width="3" stroke-linecap="square"/><path d="M159.8 815.2 L159.8 814.5 L163.4 814.5" fill="none" stroke="#00e676" stroke-width="3" stroke-linecap="square"/><path d="M163.4 814.5 L163.4 816.7 L167.0 816.7" fill="none" stroke="#ff3b4e" stroke-width="3" stroke-linecap="square"/><path d="M167.0 816.7 L167.0 813.3 L170.6 813.3" fill="none" stroke="#00e676" stroke-width="3" stroke-linecap="square"/><path d="M170.6 813.3 L170.6 809.3 L174.1 809.3" fill="none" stroke="#00e676" stroke-width="3" stroke-linecap="square"/><path d="M174.1 809.3 L174.1 809.8 L177.7 809.8" fill="none" stroke="#00e676" stroke-width="3" stroke-linecap="square"/><path d="M177.7 809.8 L177.7 802.7 L181.3 802.7" fill="none" stroke="#00e676" stroke-width="3" stroke-linecap="square"/><path d="M181.3 802.7 L181.3 802.3 L184.9 802.3" fill="none" stroke="#00e676" stroke-width="3" stroke-linecap="square"/><path d="M184.9 802.3 L184.9 803.6 L188.5 803.6" fill="none" stroke="#00e676" stroke-width="3" stroke-linecap="square"/><path d="M188.5 803.6 L188.5 806.6 L192.0 806.6" fill="none" stroke="#ff3b4e" stroke-width="3" stroke-linecap="square"/><path d="M192.0 806.6 L192.0 804.0 L195.6 804.0" fill="none" stroke="#00e676" stroke-width="3" stroke-linecap="square"/><path d="M195.6 804.0 L195.6 804.7 L199.2 804.7" fill="none" stroke="#00e676" stroke-width="3" stroke-linecap="square"/><path d="M199.2 804.7 L199.2 810.8 L202.8 810.8" fill="none" stroke="#ff3b4e" stroke-width="3" stroke-linecap="square"/><path d="M202.8 810.8 L202.8 805.7 L206.4 805.7" fill="none" stroke="#00e676" stroke-width="3" stroke-linecap="square"/><path d="M206.4 805.7 L206.4 802.2 L209.9 802.2" fill="none" stroke="#00e676" stroke-width="3" stroke-linecap="square"/><path d="M209.9 802.2 L209.9 800.5 L213.5 800.5" fill="none" stroke="#00e676" stroke-width="3" stroke-linecap="square"/><path d="M213.5 800.5 L213.5 797.5 L217.1 797.5" fill="none" stroke="#00e676" stroke-width="3" stroke-linecap="square"/><path d="M217.1 797.5 L217.1 796.9 L220.7 796.9" fill="none" stroke="#00e676" stroke-width="3" stroke-linecap="square"/><path d="M220.7 796.9 L220.7 796.8 L224.3 796.8" fill="none" stroke="#00e676" stroke-width="3" stroke-linecap="square"/><path d="M224.3 796.8 L224.3 800.5 L227.8 800.5" fill="none" stroke="#ff3b4e" stroke-width="3" stroke-linecap="square"/><path d="M227.8 800.5 L227.8 803.5 L231.4 803.5" fill="none" stroke="#ff3b4e" stroke-width="3" stroke-linecap="square"/><path d="M231.4 803.5 L231.4 804.2 L235.0 804.2" fill="none" stroke="#ff3b4e" stroke-width="3" stroke-linecap="square"/><path d="M235.0 804.2 L235.0 804.8 L238.6 804.8" fill="none" stroke="#ff3b4e" stroke-width="3" stroke-linecap="square"/><path d="M238.6 804.8 L238.6 806.3 L242.2 806.3" fill="none" stroke="#ff3b4e" stroke-width="3" stroke-linecap="square"/><path d="M242.2 806.3 L242.2 802.7 L245.7 802.7" fill="none" stroke="#00e676" stroke-width="3" stroke-linecap="square"/><path d="M245.7 802.7 L245.7 797.7 L249.3 797.7" fill="none" stroke="#00e676" stroke-width="3" stroke-linecap="square"/><path d="M249.3 797.7 L249.3 800.8 L252.9 800.8" fill="none" stroke="#00e676" stroke-width="3" stroke-linecap="square"/><path d="M252.9 800.8 L252.9 805.0 L256.5 805.0" fill="none" stroke="#ff3b4e" stroke-width="3" stroke-linecap="square"/><path d="M256.5 805.0 L256.5 806.2 L260.1 806.2" fill="none" stroke="#ff3b4e" stroke-width="3" stroke-linecap="square"/><path d="M260.1 806.2 L260.1 808.8 L263.6 808.8" fill="none" stroke="#ff3b4e" stroke-width="3" stroke-linecap="square"/><path d="M263.6 808.8 L263.6 812.4 L267.2 812.4" fill="none" stroke="#ff3b4e" stroke-width="3" stroke-linecap="square"/><path d="M267.2 812.4 L267.2 813.0 L270.8 813.0" fill="none" stroke="#ff3b4e" stroke-width="3" stroke-linecap="square"/><path d="M270.8 813.0 L270.8 813.7 L274.4 813.7" fill="none" stroke="#ff3b4e" stroke-width="3" stroke-linecap="square"/><path d="M274.4 813.7 L274.4 811.7 L278.0 811.7" fill="none" stroke="#ff3b4e" stroke-width="3" stroke-linecap="square"/><path d="M278.0 811.7 L278.0 812.9 L281.5 812.9" fill="none" stroke="#ff3b4e" stroke-width="3" stroke-linecap="square"/><path d="M281.5 812.9 L281.5 807.3 L285.1 807.3" fill="none" stroke="#00e676" stroke-width="3" stroke-linecap="square"/><path d="M285.1 807.3 L285.1 802.8 L288.7 802.8" fill="none" stroke="#00e676" stroke-width="3" stroke-linecap="square"/><path d="M288.7 802.8 L288.7 804.2 L292.3 804.2" fill="none" stroke="#00e676" stroke-width="3" stroke-linecap="square"/><path d="M292.3 804.2 L292.3 802.3 L295.9 802.3" fill="none" stroke="#00e676" stroke-width="3" stroke-linecap="square"/><path d="M295.9 802.3 L295.9 801.3 L299.4 801.3" fill="none" stroke="#00e676" stroke-width="3" stroke-linecap="square"/><path d="M299.4 801.3 L299.4 803.0 L303.0 803.0" fill="none" stroke="#00e676" stroke-width="3" stroke-linecap="square"/><path d="M303.0 803.0 L303.0 804.8 L306.6 804.8" fill="none" stroke="#ff3b4e" stroke-width="3" stroke-linecap="square"/><path d="M306.6 804.8 L306.6 802.9 L310.2 802.9" fill="none" stroke="#00e676" stroke-width="3" stroke-linecap="square"/><path d="M310.2 802.9 L310.2 806.8 L313.8 806.8" fill="none" stroke="#ff3b4e" stroke-width="3" stroke-linecap="square"/><path d="M313.8 806.8 L313.8 810.2 L317.3 810.2" fill="none" stroke="#ff3b4e" stroke-width="3" stroke-linecap="square"/><path d="M317.3 810.2 L317.3 811.0 L320.9 811.0" fill="none" stroke="#ff3b4e" stroke-width="3" stroke-linecap="square"/><path d="M320.9 811.0 L320.9 817.7 L324.5 817.7" fill="none" stroke="#ff3b4e" stroke-width="3" stroke-linecap="square"/><path d="M324.5 817.7 L324.5 820.2 L328.1 820.2" fill="none" stroke="#ff3b4e" stroke-width="3" stroke-linecap="square"/><path d="M328.1 820.2 L328.1 817.7 L331.7 817.7" fill="none" stroke="#ff3b4e" stroke-width="3" stroke-linecap="square"/><path d="M331.7 817.7 L331.7 820.0 L335.2 820.0" fill="none" stroke="#ff3b4e" stroke-width="3" stroke-linecap="square"/><path d="M335.2 820.0 L335.2 821.2 L338.8 821.2" fill="none" stroke="#ff3b4e" stroke-width="3" stroke-linecap="square"/><path d="M338.8 821.2 L338.8 820.0 L342.4 820.0" fill="none" stroke="#ff3b4e" stroke-width="3" stroke-linecap="square"/><path d="M342.4 820.0 L342.4 818.1 L346.0 818.1" fill="none" stroke="#00e676" stroke-width="3" stroke-linecap="square"/><path d="M346.0 818.1 L346.0 813.5 L349.6 813.5" fill="none" stroke="#00e676" stroke-width="3" stroke-linecap="square"/><path d="M349.6 813.5 L349.6 822.9 L353.1 822.9" fill="none" stroke="#ff3b4e" stroke-width="3" stroke-linecap="square"/><path d="M353.1 822.9 L353.1 828.3 L356.7 828.3" fill="none" stroke="#ff3b4e" stroke-width="3" stroke-linecap="square"/><path d="M356.7 828.3 L356.7 834.8 L360.3 834.8" fill="none" stroke="#ff3b4e" stroke-width="3" stroke-linecap="square"/><path d="M360.3 834.8 L360.3 837.0 L363.9 837.0" fill="none" stroke="#ff3b4e" stroke-width="3" stroke-linecap="square"/><path d="M363.9 837.0 L363.9 832.1 L367.5 832.1" fill="none" stroke="#ff3b4e" stroke-width="3" stroke-linecap="square"/><path d="M367.5 832.1 L367.5 828.9 L371.0 828.9" fill="none" stroke="#00e676" stroke-width="3" stroke-linecap="square"/><path d="M371.0 828.9 L371.0 827.1 L374.6 827.1" fill="none" stroke="#00e676" stroke-width="3" stroke-linecap="square"/><path d="M374.6 827.1 L374.6 829.7 L378.2 829.7" fill="none" stroke="#ff3b4e" stroke-width="3" stroke-linecap="square"/><path d="M378.2 829.7 L378.2 825.5 L381.8 825.5" fill="none" stroke="#00e676" stroke-width="3" stroke-linecap="square"/><path d="M381.8 825.5 L381.8 832.1 L385.4 832.1" fill="none" stroke="#ff3b4e" stroke-width="3" stroke-linecap="square"/><path d="M385.4 832.1 L385.4 835.9 L388.9 835.9" fill="none" stroke="#ff3b4e" stroke-width="3" stroke-linecap="square"/><path d="M388.9 835.9 L388.9 839.2 L392.5 839.2" fill="none" stroke="#ff3b4e" stroke-width="3" stroke-linecap="square"/><path d="M392.5 839.2 L392.5 841.3 L396.1 841.3" fill="none" stroke="#ff3b4e" stroke-width="3" stroke-linecap="square"/><path d="M396.1 841.3 L396.1 840.5 L399.7 840.5" fill="none" stroke="#ff3b4e" stroke-width="3" stroke-linecap="square"/><path d="M399.7 840.5 L399.7 838.0 L403.3 838.0" fill="none" stroke="#ff3b4e" stroke-width="3" stroke-linecap="square"/><path d="M403.3 838.0 L403.3 835.0 L406.8 835.0" fill="none" stroke="#00e676" stroke-width="3" stroke-linecap="square"/><path d="M406.8 835.0 L406.8 839.9 L410.4 839.9" fill="none" stroke="#ff3b4e" stroke-width="3" stroke-linecap="square"/><path d="M410.4 839.9 L410.4 840.9 L414.0 840.9" fill="none" stroke="#ff3b4e" stroke-width="3" stroke-linecap="square"/><path d="M414.0 840.9 L414.0 847.8 L417.6 847.8" fill="none" stroke="#ff3b4e" stroke-width="3" stroke-linecap="square"/><path d="M417.6 847.8 L417.6 844.6 L421.2 844.6" fill="none" stroke="#ff3b4e" stroke-width="3" stroke-linecap="square"/><path d="M421.2 844.6 L421.2 839.5 L424.7 839.5" fill="none" stroke="#00e676" stroke-width="3" stroke-linecap="square"/><path d="M424.7 839.5 L424.7 837.0 L428.3 837.0" fill="none" stroke="#00e676" stroke-width="3" stroke-linecap="square"/><path d="M428.3 837.0 L428.3 830.9 L431.9 830.9" fill="none" stroke="#00e676" stroke-width="3" stroke-linecap="square"/><path d="M431.9 830.9 L431.9 829.6 L435.5 829.6" fill="none" stroke="#00e676" stroke-width="3" stroke-linecap="square"/><path d="M435.5 829.6 L435.5 828.7 L439.1 828.7" fill="none" stroke="#00e676" stroke-width="3" stroke-linecap="square"/><path d="M439.1 828.7 L439.1 831.9 L442.6 831.9" fill="none" stroke="#00e676" stroke-width="3" stroke-linecap="square"/><path d="M442.6 831.9 L442.6 837.7 L446.2 837.7" fill="none" stroke="#ff3b4e" stroke-width="3" stroke-linecap="square"/><path d="M446.2 837.7 L446.2 833.9 L449.8 833.9" fill="none" stroke="#00e676" stroke-width="3" stroke-linecap="square"/><path d="M449.8 833.9 L449.8 832.3 L453.4 832.3" fill="none" stroke="#00e676" stroke-width="3" stroke-linecap="square"/><path d="M453.4 832.3 L453.4 832.1 L457.0 832.1" fill="none" stroke="#00e676" stroke-width="3" stroke-linecap="square"/><path d="M457.0 832.1 L457.0 837.5 L460.5 837.5" fill="none" stroke="#ff3b4e" stroke-width="3" stroke-linecap="square"/><path d="M460.5 837.5 L460.5 842.6 L464.1 842.6" fill="none" stroke="#ff3b4e" stroke-width="3" stroke-linecap="square"/><path d="M464.1 842.6 L464.1 850.0 L467.7 850.0" fill="none" stroke="#ff3b4e" stroke-width="3" stroke-linecap="square"/><path d="M467.7 850.0 L467.7 853.9 L471.3 853.9" fill="none" stroke="#ff3b4e" stroke-width="3" stroke-linecap="square"/><path d="M471.3 853.9 L471.3 861.0 L474.9 861.0" fill="none" stroke="#ff3b4e" stroke-width="3" stroke-linecap="square"/><path d="M474.9 861.0 L474.9 862.0 L478.4 862.0" fill="none" stroke="#ff3b4e" stroke-width="3" stroke-linecap="square"/><path d="M478.4 862.0 L478.4 864.3 L482.0 864.3" fill="none" stroke="#ff3b4e" stroke-width="3" stroke-linecap="square"/><path d="M482.0 864.3 L482.0 859.8 L485.6 859.8" fill="none" stroke="#ff3b4e" stroke-width="3" stroke-linecap="square"/><path d="M485.6 859.8 L485.6 854.1 L489.2 854.1" fill="none" stroke="#00e676" stroke-width="3" stroke-linecap="square"/><path d="M489.2 854.1 L489.2 851.2 L492.8 851.2" fill="none" stroke="#00e676" stroke-width="3" stroke-linecap="square"/><path d="M492.8 851.2 L492.8 847.3 L496.3 847.3" fill="none" stroke="#00e676" stroke-width="3" stroke-linecap="square"/><path d="M496.3 847.3 L496.3 847.7 L499.9 847.7" fill="none" stroke="#00e676" stroke-width="3" stroke-linecap="square"/><path d="M499.9 847.7 L499.9 850.6 L503.5 850.6" fill="none" stroke="#00e676" stroke-width="3" stroke-linecap="square"/><path d="M503.5 850.6 L503.5 849.8 L507.1 849.8" fill="none" stroke="#00e676" stroke-width="3" stroke-linecap="square"/><path d="M507.1 849.8 L507.1 848.1 L510.7 848.1" fill="none" stroke="#00e676" stroke-width="3" stroke-linecap="square"/><path d="M510.7 848.1 L510.7 842.9 L514.2 842.9" fill="none" stroke="#00e676" stroke-width="3" stroke-linecap="square"/><path d="M514.2 842.9 L514.2 836.2 L517.8 836.2" fill="none" stroke="#00e676" stroke-width="3" stroke-linecap="square"/><path d="M517.8 836.2 L517.8 833.4 L521.4 833.4" fill="none" stroke="#00e676" stroke-width="3" stroke-linecap="square"/><path d="M521.4 833.4 L521.4 827.9 L525.0 827.9" fill="none" stroke="#00e676" stroke-width="3" stroke-linecap="square"/><path d="M525.0 827.9 L525.0 826.6 L528.6 826.6" fill="none" stroke="#00e676" stroke-width="3" stroke-linecap="square"/><path d="M528.6 826.6 L528.6 823.4 L532.1 823.4" fill="none" stroke="#00e676" stroke-width="3" stroke-linecap="square"/><path d="M532.1 823.4 L532.1 821.9 L535.7 821.9" fill="none" stroke="#00e676" stroke-width="3" stroke-linecap="square"/><path d="M535.7 821.9 L535.7 816.0 L539.3 816.0" fill="none" stroke="#00e676" stroke-width="3" stroke-linecap="square"/><path d="M539.3 816.0 L539.3 818.7 L542.9 818.7" fill="none" stroke="#00e676" stroke-width="3" stroke-linecap="square"/><path d="M542.9 818.7 L542.9 814.7 L546.5 814.7" fill="none" stroke="#00e676" stroke-width="3" stroke-linecap="square"/><path d="M546.5 814.7 L546.5 809.4 L550.0 809.4" fill="none" stroke="#00e676" stroke-width="3" stroke-linecap="square"/><path d="M550.0 809.4 L550.0 807.6 L553.6 807.6" fill="none" stroke="#00e676" stroke-width="3" stroke-linecap="square"/><path d="M553.6 807.6 L553.6 809.9 L557.2 809.9" fill="none" stroke="#00e676" stroke-width="3" stroke-linecap="square"/><path d="M557.2 809.9 L557.2 811.8 L560.8 811.8" fill="none" stroke="#00e676" stroke-width="3" stroke-linecap="square"/><path d="M560.8 811.8 L560.8 814.2 L564.4 814.2" fill="none" stroke="#ff3b4e" stroke-width="3" stroke-linecap="square"/><path d="M564.4 814.2 L564.4 817.1 L567.9 817.1" fill="none" stroke="#ff3b4e" stroke-width="3" stroke-linecap="square"/><path d="M567.9 817.1 L567.9 816.6 L571.5 816.6" fill="none" stroke="#ff3b4e" stroke-width="3" stroke-linecap="square"/><path d="M571.5 816.6 L571.5 819.8 L575.1 819.8" fill="none" stroke="#ff3b4e" stroke-width="3" stroke-linecap="square"/><path d="M575.1 819.8 L575.1 825.1 L578.7 825.1" fill="none" stroke="#ff3b4e" stroke-width="3" stroke-linecap="square"/><path d="M578.7 825.1 L578.7 825.7 L582.3 825.7" fill="none" stroke="#ff3b4e" stroke-width="3" stroke-linecap="square"/><path d="M582.3 825.7 L582.3 826.8 L585.8 826.8" fill="none" stroke="#ff3b4e" stroke-width="3" stroke-linecap="square"/><path d="M585.8 826.8 L585.8 831.5 L589.4 831.5" fill="none" stroke="#ff3b4e" stroke-width="3" stroke-linecap="square"/><path d="M589.4 831.5 L589.4 831.5 L593.0 831.5" fill="none" stroke="#ff3b4e" stroke-width="3" stroke-linecap="square"/><path d="M593.0 831.5 L593.0 831.1 L596.6 831.1" fill="none" stroke="#ff3b4e" stroke-width="3" stroke-linecap="square"/><path d="M596.6 831.1 L596.6 833.0 L600.2 833.0" fill="none" stroke="#ff3b4e" stroke-width="3" stroke-linecap="square"/><path d="M600.2 833.0 L600.2 830.6 L603.7 830.6" fill="none" stroke="#ff3b4e" stroke-width="3" stroke-linecap="square"/><path d="M603.7 830.6 L603.7 831.7 L607.3 831.7" fill="none" stroke="#ff3b4e" stroke-width="3" stroke-linecap="square"/><path d="M607.3 831.7 L607.3 829.9 L610.9 829.9" fill="none" stroke="#00e676" stroke-width="3" stroke-linecap="square"/><path d="M610.9 829.9 L610.9 829.2 L614.5 829.2" fill="none" stroke="#00e676" stroke-width="3" stroke-linecap="square"/><path d="M614.5 829.2 L614.5 831.9 L618.1 831.9" fill="none" stroke="#ff3b4e" stroke-width="3" stroke-linecap="square"/><path d="M618.1 831.9 L618.1 840.4 L621.6 840.4" fill="none" stroke="#ff3b4e" stroke-width="3" stroke-linecap="square"/><path d="M621.6 840.4 L621.6 839.5 L625.2 839.5" fill="none" stroke="#ff3b4e" stroke-width="3" stroke-linecap="square"/><path d="M625.2 839.5 L625.2 838.4 L628.8 838.4" fill="none" stroke="#ff3b4e" stroke-width="3" stroke-linecap="square"/><path d="M628.8 838.4 L628.8 840.8 L632.4 840.8" fill="none" stroke="#ff3b4e" stroke-width="3" stroke-linecap="square"/><path d="M632.4 840.8 L632.4 837.4 L636.0 837.4" fill="none" stroke="#00e676" stroke-width="3" stroke-linecap="square"/><path d="M636.0 837.4 L636.0 834.9 L639.5 834.9" fill="none" stroke="#00e676" stroke-width="3" stroke-linecap="square"/><path d="M639.5 834.9 L639.5 834.0 L643.1 834.0" fill="none" stroke="#00e676" stroke-width="3" stroke-linecap="square"/><path d="M643.1 834.0 L643.1 824.1 L646.7 824.1" fill="none" stroke="#00e676" stroke-width="3" stroke-linecap="square"/><path d="M646.7 824.1 L646.7 821.2 L650.3 821.2" fill="none" stroke="#00e676" stroke-width="3" stroke-linecap="square"/><path d="M650.3 821.2 L650.3 813.2 L653.9 813.2" fill="none" stroke="#00e676" stroke-width="3" stroke-linecap="square"/><path d="M653.9 813.2 L653.9 812.5 L657.4 812.5" fill="none" stroke="#00e676" stroke-width="3" stroke-linecap="square"/><path d="M657.4 812.5 L657.4 813.3 L661.0 813.3" fill="none" stroke="#00e676" stroke-width="3" stroke-linecap="square"/><path d="M661.0 813.3 L661.0 813.5 L664.6 813.5" fill="none" stroke="#00e676" stroke-width="3" stroke-linecap="square"/><path d="M664.6 813.5 L664.6 811.6 L668.2 811.6" fill="none" stroke="#00e676" stroke-width="3" stroke-linecap="square"/><path d="M668.2 811.6 L668.2 812.1 L671.8 812.1" fill="none" stroke="#00e676" stroke-width="3" stroke-linecap="square"/><path d="M671.8 812.1 L671.8 815.3 L675.3 815.3" fill="none" stroke="#ff3b4e" stroke-width="3" stroke-linecap="square"/><path d="M675.3 815.3 L675.3 819.6 L678.9 819.6" fill="none" stroke="#ff3b4e" stroke-width="3" stroke-linecap="square"/><path d="M678.9 819.6 L678.9 819.9 L682.5 819.9" fill="none" stroke="#ff3b4e" stroke-width="3" stroke-linecap="square"/><path d="M682.5 819.9 L682.5 817.3 L686.1 817.3" fill="none" stroke="#ff3b4e" stroke-width="3" stroke-linecap="square"/><path d="M686.1 817.3 L686.1 822.3 L689.7 822.3" fill="none" stroke="#ff3b4e" stroke-width="3" stroke-linecap="square"/><path d="M689.7 822.3 L689.7 818.9 L693.2 818.9" fill="none" stroke="#ff3b4e" stroke-width="3" stroke-linecap="square"/><path d="M693.2 818.9 L693.2 813.5 L696.8 813.5" fill="none" stroke="#00e676" stroke-width="3" stroke-linecap="square"/><path d="M696.8 813.5 L696.8 807.2 L700.4 807.2" fill="none" stroke="#00e676" stroke-width="3" stroke-linecap="square"/><path d="M700.4 807.2 L700.4 805.6 L704.0 805.6" fill="none" stroke="#00e676" stroke-width="3" stroke-linecap="square"/><path d="M704.0 805.6 L704.0 804.2 L707.6 804.2" fill="none" stroke="#00e676" stroke-width="3" stroke-linecap="square"/><path d="M707.6 804.2 L707.6 801.2 L711.1 801.2" fill="none" stroke="#00e676" stroke-width="3" stroke-linecap="square"/><path d="M711.1 801.2 L711.1 797.0 L714.7 797.0" fill="none" stroke="#00e676" stroke-width="3" stroke-linecap="square"/><path d="M714.7 797.0 L714.7 793.4 L718.3 793.4" fill="none" stroke="#00e676" stroke-width="3" stroke-linecap="square"/><path d="M718.3 793.4 L718.3 786.4 L721.9 786.4" fill="none" stroke="#00e676" stroke-width="3" stroke-linecap="square"/><path d="M721.9 786.4 L721.9 785.4 L725.5 785.4" fill="none" stroke="#00e676" stroke-width="3" stroke-linecap="square"/><path d="M725.5 785.4 L725.5 786.3 L729.0 786.3" fill="none" stroke="#00e676" stroke-width="3" stroke-linecap="square"/><path d="M729.0 786.3 L729.0 792.1 L732.6 792.1" fill="none" stroke="#ff3b4e" stroke-width="3" stroke-linecap="square"/><path d="M732.6 792.1 L732.6 795.4 L736.2 795.4" fill="none" stroke="#ff3b4e" stroke-width="3" stroke-linecap="square"/><path d="M736.2 795.4 L736.2 798.8 L739.8 798.8" fill="none" stroke="#ff3b4e" stroke-width="3" stroke-linecap="square"/><path d="M739.8 798.8 L739.8 799.1 L743.4 799.1" fill="none" stroke="#ff3b4e" stroke-width="3" stroke-linecap="square"/><path d="M743.4 799.1 L743.4 799.5 L746.9 799.5" fill="none" stroke="#ff3b4e" stroke-width="3" stroke-linecap="square"/><path d="M746.9 799.5 L746.9 800.3 L750.5 800.3" fill="none" stroke="#ff3b4e" stroke-width="3" stroke-linecap="square"/><path d="M750.5 800.3 L750.5 801.5 L754.1 801.5" fill="none" stroke="#ff3b4e" stroke-width="3" stroke-linecap="square"/><path d="M754.1 801.5 L754.1 802.3 L757.7 802.3" fill="none" stroke="#ff3b4e" stroke-width="3" stroke-linecap="square"/><path d="M757.7 802.3 L757.7 805.7 L761.3 805.7" fill="none" stroke="#ff3b4e" stroke-width="3" stroke-linecap="square"/><path d="M761.3 805.7 L761.3 806.1 L764.8 806.1" fill="none" stroke="#ff3b4e" stroke-width="3" stroke-linecap="square"/><path d="M764.8 806.1 L764.8 803.6 L768.4 803.6" fill="none" stroke="#ff3b4e" stroke-width="3" stroke-linecap="square"/><path d="M768.4 803.6 L768.4 804.7 L772.0 804.7" fill="none" stroke="#ff3b4e" stroke-width="3" stroke-linecap="square"/><path d="M772.0 804.7 L772.0 802.9 L775.6 802.9" fill="none" stroke="#00e676" stroke-width="3" stroke-linecap="square"/><path d="M775.6 802.9 L775.6 802.6 L779.2 802.6" fill="none" stroke="#00e676" stroke-width="3" stroke-linecap="square"/><path d="M779.2 802.6 L779.2 798.6 L782.7 798.6" fill="none" stroke="#00e676" stroke-width="3" stroke-linecap="square"/><path d="M782.7 798.6 L782.7 796.3 L786.3 796.3" fill="none" stroke="#00e676" stroke-width="3" stroke-linecap="square"/><path d="M786.3 796.3 L786.3 793.0 L789.9 793.0" fill="none" stroke="#00e676" stroke-width="3" stroke-linecap="square"/><path d="M789.9 793.0 L789.9 791.8 L793.5 791.8" fill="none" stroke="#00e676" stroke-width="3" stroke-linecap="square"/><path d="M793.5 791.8 L793.5 790.9 L797.1 790.9" fill="none" stroke="#00e676" stroke-width="3" stroke-linecap="square"/><path d="M797.1 790.9 L797.1 789.0 L800.6 789.0" fill="none" stroke="#00e676" stroke-width="3" stroke-linecap="square"/><path d="M800.6 789.0 L800.6 780.0 L804.2 780.0" fill="none" stroke="#00e676" stroke-width="3" stroke-linecap="square"/><path d="M804.2 780.0 L804.2 767.1 L807.8 767.1" fill="none" stroke="#00e676" stroke-width="3" stroke-linecap="square"/><path d="M807.8 767.1 L807.8 761.9 L811.4 761.9" fill="none" stroke="#00e676" stroke-width="3" stroke-linecap="square"/><path d="M811.4 761.9 L811.4 757.7 L815.0 757.7" fill="none" stroke="#00e676" stroke-width="3" stroke-linecap="square"/><path d="M815.0 757.7 L815.0 755.0 L818.5 755.0" fill="none" stroke="#00e676" stroke-width="3" stroke-linecap="square"/><path d="M818.5 755.0 L818.5 756.2 L822.1 756.2" fill="none" stroke="#00e676" stroke-width="3" stroke-linecap="square"/><path d="M822.1 756.2 L822.1 756.4 L825.7 756.4" fill="none" stroke="#00e676" stroke-width="3" stroke-linecap="square"/><path d="M825.7 756.4 L825.7 758.3 L829.3 758.3" fill="none" stroke="#00e676" stroke-width="3" stroke-linecap="square"/><path d="M829.3 758.3 L829.3 762.4 L832.9 762.4" fill="none" stroke="#ff3b4e" stroke-width="3" stroke-linecap="square"/><path d="M832.9 762.4 L832.9 767.7 L836.4 767.7" fill="none" stroke="#ff3b4e" stroke-width="3" stroke-linecap="square"/><path d="M836.4 767.7 L836.4 767.5 L840.0 767.5" fill="none" stroke="#ff3b4e" stroke-width="3" stroke-linecap="square"/><path d="M840.0 767.5 L840.0 767.1 L843.6 767.1" fill="none" stroke="#ff3b4e" stroke-width="3" stroke-linecap="square"/><path d="M843.6 767.1 L843.6 760.4 L847.2 760.4" fill="none" stroke="#00e676" stroke-width="3" stroke-linecap="square"/><path d="M847.2 760.4 L847.2 760.2 L850.8 760.2" fill="none" stroke="#00e676" stroke-width="3" stroke-linecap="square"/><path d="M850.8 760.2 L850.8 761.9 L854.3 761.9" fill="none" stroke="#00e676" stroke-width="3" stroke-linecap="square"/><path d="M854.3 761.9 L854.3 769.5 L857.9 769.5" fill="none" stroke="#ff3b4e" stroke-width="3" stroke-linecap="square"/><path d="M857.9 769.5 L857.9 772.2 L861.5 772.2" fill="none" stroke="#ff3b4e" stroke-width="3" stroke-linecap="square"/><path d="M861.5 772.2 L861.5 777.2 L865.1 777.2" fill="none" stroke="#ff3b4e" stroke-width="3" stroke-linecap="square"/><path d="M865.1 777.2 L865.1 780.2 L868.7 780.2" fill="none" stroke="#ff3b4e" stroke-width="3" stroke-linecap="square"/><path d="M868.7 780.2 L868.7 783.9 L872.2 783.9" fill="none" stroke="#ff3b4e" stroke-width="3" stroke-linecap="square"/><path d="M872.2 783.9 L872.2 791.0 L875.8 791.0" fill="none" stroke="#ff3b4e" stroke-width="3" stroke-linecap="square"/><path d="M875.8 791.0 L875.8 803.7 L879.4 803.7" fill="none" stroke="#ff3b4e" stroke-width="3" stroke-linecap="square"/><path d="M879.4 803.7 L879.4 812.0 L883.0 812.0" fill="none" stroke="#ff3b4e" stroke-width="3" stroke-linecap="square"/><path d="M883.0 812.0 L883.0 819.3 L886.6 819.3" fill="none" stroke="#ff3b4e" stroke-width="3" stroke-linecap="square"/><path d="M886.6 819.3 L886.6 825.0 L890.1 825.0" fill="none" stroke="#ff3b4e" stroke-width="3" stroke-linecap="square"/><path d="M890.1 825.0 L890.1 825.5 L893.7 825.5" fill="none" stroke="#ff3b4e" stroke-width="3" stroke-linecap="square"/><path d="M893.7 825.5 L893.7 827.9 L897.3 827.9" fill="none" stroke="#ff3b4e" stroke-width="3" stroke-linecap="square"/><path d="M897.3 827.9 L897.3 825.8 L900.9 825.8" fill="none" stroke="#ff3b4e" stroke-width="3" stroke-linecap="square"/><path d="M900.9 825.8 L900.9 823.7 L904.5 823.7" fill="none" stroke="#ff3b4e" stroke-width="3" stroke-linecap="square"/><path d="M904.5 823.7 L904.5 820.2 L908.0 820.2" fill="none" stroke="#00e676" stroke-width="3" stroke-linecap="square"/><path d="M908.0 820.2 L908.0 816.1 L911.6 816.1" fill="none" stroke="#00e676" stroke-width="3" stroke-linecap="square"/><path d="M911.6 816.1 L911.6 814.4 L915.2 814.4" fill="none" stroke="#00e676" stroke-width="3" stroke-linecap="square"/><path d="M915.2 814.4 L915.2 813.6 L918.8 813.6" fill="none" stroke="#00e676" stroke-width="3" stroke-linecap="square"/><path d="M918.8 813.6 L918.8 802.2 L922.4 802.2" fill="none" stroke="#00e676" stroke-width="3" stroke-linecap="square"/><path d="M922.4 802.2 L922.4 797.3 L925.9 797.3" fill="none" stroke="#00e676" stroke-width="3" stroke-linecap="square"/><path d="M925.9 797.3 L925.9 793.1 L929.5 793.1" fill="none" stroke="#00e676" stroke-width="3" stroke-linecap="square"/><path d="M929.5 793.1 L929.5 790.2 L933.1 790.2" fill="none" stroke="#00e676" stroke-width="3" stroke-linecap="square"/><path d="M933.1 790.2 L933.1 787.0 L936.7 787.0" fill="none" stroke="#00e676" stroke-width="3" stroke-linecap="square"/><path d="M936.7 787.0 L936.7 785.2 L940.3 785.2" fill="none" stroke="#00e676" stroke-width="3" stroke-linecap="square"/><path d="M940.3 785.2 L940.3 781.9 L943.8 781.9" fill="none" stroke="#00e676" stroke-width="3" stroke-linecap="square"/><path d="M943.8 781.9 L943.8 777.3 L947.4 777.3" fill="none" stroke="#00e676" stroke-width="3" stroke-linecap="square"/><path d="M947.4 777.3 L947.4 776.9 L951.0 776.9" fill="none" stroke="#00e676" stroke-width="3" stroke-linecap="square"/><path d="M951.0 776.9 L951.0 776.6 L954.6 776.6" fill="none" stroke="#00e676" stroke-width="3" stroke-linecap="square"/><path d="M954.6 776.6 L954.6 777.5 L958.2 777.5" fill="none" stroke="#00e676" stroke-width="3" stroke-linecap="square"/><path d="M958.2 777.5 L958.2 778.3 L961.7 778.3" fill="none" stroke="#00e676" stroke-width="3" stroke-linecap="square"/><path d="M961.7 778.3 L961.7 779.4 L965.3 779.4" fill="none" stroke="#00e676" stroke-width="3" stroke-linecap="square"/><path d="M965.3 779.4 L965.3 778.8 L968.9 778.8" fill="none" stroke="#00e676" stroke-width="3" stroke-linecap="square"/><path d="M968.9 778.8 L968.9 783.3 L972.5 783.3" fill="none" stroke="#ff3b4e" stroke-width="3" stroke-linecap="square"/><path d="M972.5 783.3 L972.5 787.0 L976.1 787.0" fill="none" stroke="#ff3b4e" stroke-width="3" stroke-linecap="square"/><path d="M976.1 787.0 L976.1 789.2 L979.6 789.2" fill="none" stroke="#ff3b4e" stroke-width="3" stroke-linecap="square"/><path d="M979.6 789.2 L979.6 795.8 L983.2 795.8" fill="none" stroke="#ff3b4e" stroke-width="3" stroke-linecap="square"/><path d="M983.2 795.8 L983.2 795.2 L986.8 795.2" fill="none" stroke="#ff3b4e" stroke-width="3" stroke-linecap="square"/><path d="M986.8 795.2 L986.8 797.2 L990.4 797.2" fill="none" stroke="#ff3b4e" stroke-width="3" stroke-linecap="square"/><path d="M990.4 797.2 L990.4 799.6 L994.0 799.6" fill="none" stroke="#ff3b4e" stroke-width="3" stroke-linecap="square"/><path d="M994.0 799.6 L994.0 804.1 L997.5 804.1" fill="none" stroke="#ff3b4e" stroke-width="3" stroke-linecap="square"/><path d="M997.5 804.1 L997.5 805.1 L1001.1 805.1" fill="none" stroke="#ff3b4e" stroke-width="3" stroke-linecap="square"/><path d="M1001.1 805.1 L1001.1 807.0 L1004.7 807.0" fill="none" stroke="#ff3b4e" stroke-width="3" stroke-linecap="square"/><path d="M1004.7 807.0 L1004.7 811.2 L1008.3 811.2" fill="none" stroke="#ff3b4e" stroke-width="3" stroke-linecap="square"/><path d="M1008.3 811.2 L1008.3 809.8 L1011.9 809.8" fill="none" stroke="#ff3b4e" stroke-width="3" stroke-linecap="square"/><path d="M1011.9 809.8 L1011.9 805.7 L1015.4 805.7" fill="none" stroke="#00e676" stroke-width="3" stroke-linecap="square"/><path d="M1015.4 805.7 L1015.4 803.0 L1019.0 803.0" fill="none" stroke="#00e676" stroke-width="3" stroke-linecap="square"/><path d="M1019.0 803.0 L1019.0 797.7 L1022.6 797.7" fill="none" stroke="#00e676" stroke-width="3" stroke-linecap="square"/><path d="M1022.6 797.7 L1022.6 790.6 L1026.2 790.6" fill="none" stroke="#00e676" stroke-width="3" stroke-linecap="square"/><path d="M1026.2 790.6 L1026.2 784.6 L1029.8 784.6" fill="none" stroke="#00e676" stroke-width="3" stroke-linecap="square"/><path d="M1029.8 784.6 L1029.8 779.4 L1033.3 779.4" fill="none" stroke="#00e676" stroke-width="3" stroke-linecap="square"/><path d="M1033.3 779.4 L1033.3 781.9 L1036.9 781.9" fill="none" stroke="#00e676" stroke-width="3" stroke-linecap="square"/><path d="M1036.9 781.9 L1036.9 783.6 L1040.5 783.6" fill="none" stroke="#00e676" stroke-width="3" stroke-linecap="square"/><path d="M1040.5 783.6 L1040.5 782.5 L1044.1 782.5" fill="none" stroke="#00e676" stroke-width="3" stroke-linecap="square"/><path d="M1044.1 782.5 L1044.1 788.1 L1047.7 788.1" fill="none" stroke="#ff3b4e" stroke-width="3" stroke-linecap="square"/><path d="M1047.7 788.1 L1047.7 787.3 L1051.2 787.3" fill="none" stroke="#ff3b4e" stroke-width="3" stroke-linecap="square"/><path d="M1051.2 787.3 L1051.2 787.4 L1054.8 787.4" fill="none" stroke="#ff3b4e" stroke-width="3" stroke-linecap="square"/><path d="M1054.8 787.4 L1054.8 790.1 L1058.4 790.1" fill="none" stroke="#ff3b4e" stroke-width="3" stroke-linecap="square"/><path d="M1058.4 790.1 L1058.4 782.8 L1062.0 782.8" fill="none" stroke="#00e676" stroke-width="3" stroke-linecap="square"/><path d="M1062.0 782.8 L1062.0 777.2 L1065.6 777.2" fill="none" stroke="#00e676" stroke-width="3" stroke-linecap="square"/><path d="M1065.6 777.2 L1065.6 769.0 L1069.1 769.0" fill="none" stroke="#00e676" stroke-width="3" stroke-linecap="square"/><path d="M1069.1 769.0 L1069.1 759.9 L1072.7 759.9" fill="none" stroke="#00e676" stroke-width="3" stroke-linecap="square"/><path d="M1072.7 759.9 L1072.7 747.1 L1076.3 747.1" fill="none" stroke="#00e676" stroke-width="3" stroke-linecap="square"/><path d="M1076.3 747.1 L1076.3 737.2 L1079.9 737.2" fill="none" stroke="#00e676" stroke-width="3" stroke-linecap="square"/><path d="M1079.9 737.2 L1079.9 736.2 L1083.5 736.2" fill="none" stroke="#00e676" stroke-width="3" stroke-linecap="square"/><path d="M1083.5 736.2 L1083.5 736.4 L1087.0 736.4" fill="none" stroke="#00e676" stroke-width="3" stroke-linecap="square"/><path d="M1087.0 736.4 L1087.0 734.9 L1090.6 734.9" fill="none" stroke="#00e676" stroke-width="3" stroke-linecap="square"/><path d="M1090.6 734.9 L1090.6 733.2 L1094.2 733.2" fill="none" stroke="#00e676" stroke-width="3" stroke-linecap="square"/><path d="M1094.2 733.2 L1094.2 735.8 L1097.8 735.8" fill="none" stroke="#00e676" stroke-width="3" stroke-linecap="square"/><path d="M1097.8 735.8 L1097.8 738.3 L1101.4 738.3" fill="none" stroke="#00e676" stroke-width="3" stroke-linecap="square"/><path d="M1101.4 738.3 L1101.4 742.5 L1104.9 742.5" fill="none" stroke="#ff3b4e" stroke-width="3" stroke-linecap="square"/><path d="M1104.9 742.5 L1104.9 746.4 L1108.5 746.4" fill="none" stroke="#ff3b4e" stroke-width="3" stroke-linecap="square"/><path d="M1108.5 746.4 L1108.5 751.4 L1112.1 751.4" fill="none" stroke="#ff3b4e" stroke-width="3" stroke-linecap="square"/><path d="M1112.1 751.4 L1112.1 756.2 L1115.7 756.2" fill="none" stroke="#ff3b4e" stroke-width="3" stroke-linecap="square"/><path d="M1115.7 756.2 L1115.7 755.5 L1119.3 755.5" fill="none" stroke="#ff3b4e" stroke-width="3" stroke-linecap="square"/><path d="M1119.3 755.5 L1119.3 757.0 L1122.8 757.0" fill="none" stroke="#ff3b4e" stroke-width="3" stroke-linecap="square"/><path d="M1122.8 757.0 L1122.8 753.9 L1126.4 753.9" fill="none" stroke="#ff3b4e" stroke-width="3" stroke-linecap="square"/><path d="M1126.4 753.9 L1126.4 755.1 L1130.0 755.1" fill="none" stroke="#ff3b4e" stroke-width="3" stroke-linecap="square"/><path d="M1130.0 755.1 L1130.0 754.5 L1133.6 754.5" fill="none" stroke="#ff3b4e" stroke-width="3" stroke-linecap="square"/><path d="M1133.6 754.5 L1133.6 751.0 L1137.2 751.0" fill="none" stroke="#00e676" stroke-width="3" stroke-linecap="square"/><path d="M1137.2 751.0 L1137.2 748.0 L1140.7 748.0" fill="none" stroke="#00e676" stroke-width="3" stroke-linecap="square"/><path d="M1140.7 748.0 L1140.7 741.5 L1144.3 741.5" fill="none" stroke="#00e676" stroke-width="3" stroke-linecap="square"/><path d="M1144.3 741.5 L1144.3 734.5 L1147.9 734.5" fill="none" stroke="#00e676" stroke-width="3" stroke-linecap="square"/><path d="M1147.9 734.5 L1147.9 738.1 L1151.5 738.1" fill="none" stroke="#00e676" stroke-width="3" stroke-linecap="square"/><path d="M1151.5 738.1 L1151.5 738.5 L1155.1 738.5" fill="none" stroke="#00e676" stroke-width="3" stroke-linecap="square"/><path d="M1155.1 738.5 L1155.1 736.0 L1158.6 736.0" fill="none" stroke="#00e676" stroke-width="3" stroke-linecap="square"/><path d="M1158.6 736.0 L1158.6 738.6 L1162.2 738.6" fill="none" stroke="#00e676" stroke-width="3" stroke-linecap="square"/><path d="M1162.2 738.6 L1162.2 735.9 L1165.8 735.9" fill="none" stroke="#00e676" stroke-width="3" stroke-linecap="square"/><path d="M1165.8 735.9 L1165.8 733.3 L1169.4 733.3" fill="none" stroke="#00e676" stroke-width="3" stroke-linecap="square"/><path d="M1169.4 733.3 L1169.4 734.5 L1173.0 734.5" fill="none" stroke="#00e676" stroke-width="3" stroke-linecap="square"/><path d="M1173.0 734.5 L1173.0 732.2 L1176.5 732.2" fill="none" stroke="#00e676" stroke-width="3" stroke-linecap="square"/><path d="M1176.5 732.2 L1176.5 729.0 L1180.1 729.0" fill="none" stroke="#00e676" stroke-width="3" stroke-linecap="square"/><path d="M1180.1 729.0 L1180.1 724.7 L1183.7 724.7" fill="none" stroke="#00e676" stroke-width="3" stroke-linecap="square"/><path d="M1183.7 724.7 L1183.7 724.6 L1187.3 724.6" fill="none" stroke="#00e676" stroke-width="3" stroke-linecap="square"/><path d="M1187.3 724.6 L1187.3 720.0 L1190.9 720.0" fill="none" stroke="#00e676" stroke-width="3" stroke-linecap="square"/><path d="M1190.9 720.0 L1190.9 718.2 L1194.4 718.2" fill="none" stroke="#00e676" stroke-width="3" stroke-linecap="square"/><path d="M1194.4 718.2 L1194.4 714.3 L1198.0 714.3" fill="none" stroke="#00e676" stroke-width="3" stroke-linecap="square"/><path d="M1198.0 714.3 L1198.0 709.5 L1201.6 709.5" fill="none" stroke="#00e676" stroke-width="3" stroke-linecap="square"/><path d="M1201.6 709.5 L1201.6 710.9 L1205.2 710.9" fill="none" stroke="#00e676" stroke-width="3" stroke-linecap="square"/><path d="M1205.2 710.9 L1205.2 716.3 L1208.8 716.3" fill="none" stroke="#ff3b4e" stroke-width="3" stroke-linecap="square"/><path d="M1208.8 716.3 L1208.8 718.5 L1212.3 718.5" fill="none" stroke="#ff3b4e" stroke-width="3" stroke-linecap="square"/><path d="M1212.3 718.5 L1212.3 720.1 L1215.9 720.1" fill="none" stroke="#ff3b4e" stroke-width="3" stroke-linecap="square"/><path d="M1215.9 720.1 L1215.9 722.7 L1219.5 722.7" fill="none" stroke="#ff3b4e" stroke-width="3" stroke-linecap="square"/><path d="M1219.5 722.7 L1219.5 725.9 L1223.1 725.9" fill="none" stroke="#ff3b4e" stroke-width="3" stroke-linecap="square"/><path d="M1223.1 725.9 L1223.1 728.1 L1226.7 728.1" fill="none" stroke="#ff3b4e" stroke-width="3" stroke-linecap="square"/><path d="M1226.7 728.1 L1226.7 731.6 L1230.2 731.6" fill="none" stroke="#ff3b4e" stroke-width="3" stroke-linecap="square"/><path d="M1230.2 731.6 L1230.2 730.2 L1233.8 730.2" fill="none" stroke="#ff3b4e" stroke-width="3" stroke-linecap="square"/><path d="M1233.8 730.2 L1233.8 727.8 L1237.4 727.8" fill="none" stroke="#ff3b4e" stroke-width="3" stroke-linecap="square"/><path d="M1237.4 727.8 L1237.4 725.2 L1241.0 725.2" fill="none" stroke="#00e676" stroke-width="3" stroke-linecap="square"/><path d="M1241.0 725.2 L1241.0 727.7 L1244.6 727.7" fill="none" stroke="#ff3b4e" stroke-width="3" stroke-linecap="square"/><path d="M1244.6 727.7 L1244.6 728.1 L1248.1 728.1" fill="none" stroke="#ff3b4e" stroke-width="3" stroke-linecap="square"/><path d="M1248.1 728.1 L1248.1 736.5 L1251.7 736.5" fill="none" stroke="#ff3b4e" stroke-width="3" stroke-linecap="square"/><path d="M1251.7 736.5 L1251.7 748.0 L1255.3 748.0" fill="none" stroke="#ff3b4e" stroke-width="3" stroke-linecap="square"/><path d="M1255.3 748.0 L1255.3 753.2 L1258.9 753.2" fill="none" stroke="#ff3b4e" stroke-width="3" stroke-linecap="square"/><path d="M1258.9 753.2 L1258.9 756.7 L1262.5 756.7" fill="none" stroke="#ff3b4e" stroke-width="3" stroke-linecap="square"/><path d="M1262.5 756.7 L1262.5 760.8 L1266.0 760.8" fill="none" stroke="#ff3b4e" stroke-width="3" stroke-linecap="square"/><path d="M1266.0 760.8 L1266.0 763.8 L1269.6 763.8" fill="none" stroke="#ff3b4e" stroke-width="3" stroke-linecap="square"/><path d="M1269.6 763.8 L1269.6 768.0 L1273.2 768.0" fill="none" stroke="#ff3b4e" stroke-width="3" stroke-linecap="square"/><path d="M1273.2 768.0 L1273.2 771.8 L1276.8 771.8" fill="none" stroke="#ff3b4e" stroke-width="3" stroke-linecap="square"/><path d="M1276.8 771.8 L1276.8 781.3 L1280.4 781.3" fill="none" stroke="#ff3b4e" stroke-width="3" stroke-linecap="square"/><path d="M1280.4 781.3 L1280.4 786.6 L1283.9 786.6" fill="none" stroke="#ff3b4e" stroke-width="3" stroke-linecap="square"/><path d="M1283.9 786.6 L1283.9 783.5 L1287.5 783.5" fill="none" stroke="#ff3b4e" stroke-width="3" stroke-linecap="square"/><path d="M1287.5 783.5 L1287.5 787.4 L1291.1 787.4" fill="none" stroke="#ff3b4e" stroke-width="3" stroke-linecap="square"/><path d="M1291.1 787.4 L1291.1 782.2 L1294.7 782.2" fill="none" stroke="#ff3b4e" stroke-width="3" stroke-linecap="square"/><path d="M1294.7 782.2 L1294.7 782.7 L1298.3 782.7" fill="none" stroke="#ff3b4e" stroke-width="3" stroke-linecap="square"/><path d="M1298.3 782.7 L1298.3 781.7 L1301.8 781.7" fill="none" stroke="#ff3b4e" stroke-width="3" stroke-linecap="square"/><path d="M1301.8 781.7 L1301.8 781.5 L1305.4 781.5" fill="none" stroke="#ff3b4e" stroke-width="3" stroke-linecap="square"/><path d="M1305.4 781.5 L1305.4 779.1 L1309.0 779.1" fill="none" stroke="#00e676" stroke-width="3" stroke-linecap="square"/><path d="M1309.0 779.1 L1309.0 776.1 L1312.6 776.1" fill="none" stroke="#00e676" stroke-width="3" stroke-linecap="square"/><path d="M1312.6 776.1 L1312.6 773.7 L1316.2 773.7" fill="none" stroke="#00e676" stroke-width="3" stroke-linecap="square"/><path d="M1316.2 773.7 L1316.2 774.3 L1319.7 774.3" fill="none" stroke="#00e676" stroke-width="3" stroke-linecap="square"/><path d="M1319.7 774.3 L1319.7 773.0 L1323.3 773.0" fill="none" stroke="#00e676" stroke-width="3" stroke-linecap="square"/><path d="M1323.3 773.0 L1323.3 772.2 L1326.9 772.2" fill="none" stroke="#00e676" stroke-width="3" stroke-linecap="square"/><path d="M1326.9 772.2 L1326.9 775.0 L1330.5 775.0" fill="none" stroke="#ff3b4e" stroke-width="3" stroke-linecap="square"/><path d="M1330.5 775.0 L1330.5 773.1 L1334.1 773.1" fill="none" stroke="#00e676" stroke-width="3" stroke-linecap="square"/><path d="M1334.1 773.1 L1334.1 774.7 L1337.6 774.7" fill="none" stroke="#ff3b4e" stroke-width="3" stroke-linecap="square"/><path d="M1337.6 774.7 L1337.6 773.8 L1341.2 773.8" fill="none" stroke="#00e676" stroke-width="3" stroke-linecap="square"/><path d="M1341.2 773.8 L1341.2 774.5 L1344.8 774.5" fill="none" stroke="#ff3b4e" stroke-width="3" stroke-linecap="square"/><path d="M1344.8 774.5 L1344.8 767.9 L1348.4 767.9" fill="none" stroke="#00e676" stroke-width="3" stroke-linecap="square"/><path d="M1348.4 767.9 L1348.4 762.7 L1352.0 762.7" fill="none" stroke="#00e676" stroke-width="3" stroke-linecap="square"/><path d="M1352.0 762.7 L1352.0 761.6 L1355.5 761.6" fill="none" stroke="#00e676" stroke-width="3" stroke-linecap="square"/><path d="M1355.5 761.6 L1355.5 759.0 L1359.1 759.0" fill="none" stroke="#00e676" stroke-width="3" stroke-linecap="square"/><path d="M1359.1 759.0 L1359.1 756.4 L1362.7 756.4" fill="none" stroke="#00e676" stroke-width="3" stroke-linecap="square"/><path d="M1362.7 756.4 L1362.7 756.2 L1366.3 756.2" fill="none" stroke="#00e676" stroke-width="3" stroke-linecap="square"/><path d="M1366.3 756.2 L1366.3 754.1 L1369.9 754.1" fill="none" stroke="#00e676" stroke-width="3" stroke-linecap="square"/><path d="M1369.9 754.1 L1369.9 755.0 L1373.4 755.0" fill="none" stroke="#00e676" stroke-width="3" stroke-linecap="square"/><path d="M1373.4 755.0 L1373.4 758.2 L1377.0 758.2" fill="none" stroke="#ff3b4e" stroke-width="3" stroke-linecap="square"/><path d="M1377.0 758.2 L1377.0 758.9 L1380.6 758.9" fill="none" stroke="#ff3b4e" stroke-width="3" stroke-linecap="square"/><path d="M1380.6 758.9 L1380.6 760.2 L1384.2 760.2" fill="none" stroke="#ff3b4e" stroke-width="3" stroke-linecap="square"/><path d="M1384.2 760.2 L1384.2 762.0 L1387.8 762.0" fill="none" stroke="#ff3b4e" stroke-width="3" stroke-linecap="square"/><path d="M1387.8 762.0 L1387.8 760.3 L1391.3 760.3" fill="none" stroke="#ff3b4e" stroke-width="3" stroke-linecap="square"/><path d="M1391.3 760.3 L1391.3 760.4 L1394.9 760.4" fill="none" stroke="#ff3b4e" stroke-width="3" stroke-linecap="square"/><path d="M1394.9 760.4 L1394.9 761.5 L1398.5 761.5" fill="none" stroke="#ff3b4e" stroke-width="3" stroke-linecap="square"/><path d="M1398.5 761.5 L1398.5 759.0 L1402.1 759.0" fill="none" stroke="#00e676" stroke-width="3" stroke-linecap="square"/><path d="M1402.1 759.0 L1402.1 760.8 L1405.7 760.8" fill="none" stroke="#ff3b4e" stroke-width="3" stroke-linecap="square"/><path d="M1405.7 760.8 L1405.7 760.9 L1409.2 760.9" fill="none" stroke="#ff3b4e" stroke-width="3" stroke-linecap="square"/><path d="M1409.2 760.9 L1409.2 762.5 L1412.8 762.5" fill="none" stroke="#ff3b4e" stroke-width="3" stroke-linecap="square"/><path d="M1412.8 762.5 L1412.8 764.2 L1416.4 764.2" fill="none" stroke="#ff3b4e" stroke-width="3" stroke-linecap="square"/><path d="M1416.4 764.2 L1416.4 760.3 L1420.0 760.3" fill="none" stroke="#00e676" stroke-width="3" stroke-linecap="square"/><path d="M1420.0 760.3 L1420.0 762.8 L1423.6 762.8" fill="none" stroke="#ff3b4e" stroke-width="3" stroke-linecap="square"/><path d="M1423.6 762.8 L1423.6 760.9 L1427.1 760.9" fill="none" stroke="#00e676" stroke-width="3" stroke-linecap="square"/><path d="M1427.1 760.9 L1427.1 762.7 L1430.7 762.7" fill="none" stroke="#ff3b4e" stroke-width="3" stroke-linecap="square"/><path d="M1430.7 762.7 L1430.7 765.3 L1434.3 765.3" fill="none" stroke="#ff3b4e" stroke-width="3" stroke-linecap="square"/><path d="M1434.3 765.3 L1434.3 769.1 L1437.9 769.1" fill="none" stroke="#ff3b4e" stroke-width="3" stroke-linecap="square"/><path d="M1437.9 769.1 L1437.9 770.2 L1441.5 770.2" fill="none" stroke="#ff3b4e" stroke-width="3" stroke-linecap="square"/><path d="M1441.5 770.2 L1441.5 776.7 L1445.0 776.7" fill="none" stroke="#ff3b4e" stroke-width="3" stroke-linecap="square"/><path d="M1445.0 776.7 L1445.0 778.1 L1448.6 778.1" fill="none" stroke="#ff3b4e" stroke-width="3" stroke-linecap="square"/><path d="M1448.6 778.1 L1448.6 782.0 L1452.2 782.0" fill="none" stroke="#ff3b4e" stroke-width="3" stroke-linecap="square"/><path d="M1452.2 782.0 L1452.2 785.1 L1455.8 785.1" fill="none" stroke="#ff3b4e" stroke-width="3" stroke-linecap="square"/><path d="M1455.8 785.1 L1455.8 788.2 L1459.4 788.2" fill="none" stroke="#ff3b4e" stroke-width="3" stroke-linecap="square"/><path d="M1459.4 788.2 L1459.4 783.8 L1462.9 783.8" fill="none" stroke="#ff3b4e" stroke-width="3" stroke-linecap="square"/><path d="M1462.9 783.8 L1462.9 780.0 L1466.5 780.0" fill="none" stroke="#00e676" stroke-width="3" stroke-linecap="square"/><path d="M1466.5 780.0 L1466.5 777.4 L1470.1 777.4" fill="none" stroke="#00e676" stroke-width="3" stroke-linecap="square"/><path d="M1470.1 777.4 L1470.1 773.1 L1473.7 773.1" fill="none" stroke="#00e676" stroke-width="3" stroke-linecap="square"/><path d="M1473.7 773.1 L1473.7 773.7 L1477.3 773.7" fill="none" stroke="#00e676" stroke-width="3" stroke-linecap="square"/><path d="M1477.3 773.7 L1477.3 770.1 L1480.8 770.1" fill="none" stroke="#00e676" stroke-width="3" stroke-linecap="square"/><path d="M1480.8 770.1 L1480.8 769.5 L1484.4 769.5" fill="none" stroke="#00e676" stroke-width="3" stroke-linecap="square"/><path d="M1484.4 769.5 L1484.4 769.3 L1488.0 769.3" fill="none" stroke="#00e676" stroke-width="3" stroke-linecap="square"/><path d="M1488.0 769.3 L1488.0 768.1 L1491.6 768.1" fill="none" stroke="#00e676" stroke-width="3" stroke-linecap="square"/><path d="M1491.6 768.1 L1491.6 769.8 L1495.2 769.8" fill="none" stroke="#00e676" stroke-width="3" stroke-linecap="square"/><path d="M1495.2 769.8 L1495.2 773.2 L1498.7 773.2" fill="none" stroke="#ff3b4e" stroke-width="3" stroke-linecap="square"/><path d="M1498.7 773.2 L1498.7 772.9 L1502.3 772.9" fill="none" stroke="#ff3b4e" stroke-width="3" stroke-linecap="square"/><path d="M1502.3 772.9 L1502.3 772.5 L1505.9 772.5" fill="none" stroke="#ff3b4e" stroke-width="3" stroke-linecap="square"/><path d="M1505.9 772.5 L1505.9 774.4 L1509.5 774.4" fill="none" stroke="#ff3b4e" stroke-width="3" stroke-linecap="square"/><path d="M1509.5 774.4 L1509.5 773.2 L1513.1 773.2" fill="none" stroke="#ff3b4e" stroke-width="3" stroke-linecap="square"/><path d="M1513.1 773.2 L1513.1 769.8 L1516.6 769.8" fill="none" stroke="#00e676" stroke-width="3" stroke-linecap="square"/><path d="M1516.6 769.8 L1516.6 768.2 L1520.2 768.2" fill="none" stroke="#00e676" stroke-width="3" stroke-linecap="square"/><path d="M1520.2 768.2 L1520.2 766.8 L1523.8 766.8" fill="none" stroke="#00e676" stroke-width="3" stroke-linecap="square"/><path d="M1523.8 766.8 L1523.8 768.2 L1527.4 768.2" fill="none" stroke="#00e676" stroke-width="3" stroke-linecap="square"/><path d="M1527.4 768.2 L1527.4 768.9 L1531.0 768.9" fill="none" stroke="#00e676" stroke-width="3" stroke-linecap="square"/><path d="M1531.0 768.9 L1531.0 773.4 L1534.5 773.4" fill="none" stroke="#ff3b4e" stroke-width="3" stroke-linecap="square"/><path d="M1534.5 773.4 L1534.5 779.4 L1538.1 779.4" fill="none" stroke="#ff3b4e" stroke-width="3" stroke-linecap="square"/><path d="M1538.1 779.4 L1538.1 784.9 L1541.7 784.9" fill="none" stroke="#ff3b4e" stroke-width="3" stroke-linecap="square"/><path d="M1541.7 784.9 L1541.7 785.4 L1545.3 785.4" fill="none" stroke="#ff3b4e" stroke-width="3" stroke-linecap="square"/><path d="M1545.3 785.4 L1545.3 788.8 L1548.9 788.8" fill="none" stroke="#ff3b4e" stroke-width="3" stroke-linecap="square"/><path d="M1548.9 788.8 L1548.9 790.0 L1552.4 790.0" fill="none" stroke="#ff3b4e" stroke-width="3" stroke-linecap="square"/><path d="M1552.4 790.0 L1552.4 791.9 L1556.0 791.9" fill="none" stroke="#ff3b4e" stroke-width="3" stroke-linecap="square"/><path d="M1556.0 791.9 L1556.0 793.2 L1559.6 793.2" fill="none" stroke="#ff3b4e" stroke-width="3" stroke-linecap="square"/><path d="M1559.6 793.2 L1559.6 793.8 L1563.2 793.8" fill="none" stroke="#ff3b4e" stroke-width="3" stroke-linecap="square"/><path d="M1563.2 793.8 L1563.2 794.5 L1566.8 794.5" fill="none" stroke="#ff3b4e" stroke-width="3" stroke-linecap="square"/><path d="M1566.8 794.5 L1566.8 788.8 L1570.3 788.8" fill="none" stroke="#00e676" stroke-width="3" stroke-linecap="square"/><path d="M1570.3 788.8 L1570.3 785.4 L1573.9 785.4" fill="none" stroke="#00e676" stroke-width="3" stroke-linecap="square"/><path d="M1573.9 785.4 L1573.9 783.5 L1577.5 783.5" fill="none" stroke="#00e676" stroke-width="3" stroke-linecap="square"/><path d="M1577.5 783.5 L1577.5 783.1 L1581.1 783.1" fill="none" stroke="#00e676" stroke-width="3" stroke-linecap="square"/><path d="M1581.1 783.1 L1581.1 784.0 L1584.7 784.0" fill="none" stroke="#00e676" stroke-width="3" stroke-linecap="square"/><path d="M1584.7 784.0 L1584.7 785.8 L1588.2 785.8" fill="none" stroke="#ff3b4e" stroke-width="3" stroke-linecap="square"/><path d="M1588.2 785.8 L1588.2 792.2 L1591.8 792.2" fill="none" stroke="#ff3b4e" stroke-width="3" stroke-linecap="square"/><path d="M1591.8 792.2 L1591.8 795.2 L1595.4 795.2" fill="none" stroke="#ff3b4e" stroke-width="3" stroke-linecap="square"/><path d="M1595.4 795.2 L1595.4 796.0 L1599.0 796.0" fill="none" stroke="#ff3b4e" stroke-width="3" stroke-linecap="square"/><path d="M1599.0 796.0 L1599.0 788.4 L1602.6 788.4" fill="none" stroke="#00e676" stroke-width="3" stroke-linecap="square"/><path d="M1602.6 788.4 L1602.6 783.7 L1606.1 783.7" fill="none" stroke="#00e676" stroke-width="3" stroke-linecap="square"/><path d="M1606.1 783.7 L1606.1 779.9 L1609.7 779.9" fill="none" stroke="#00e676" stroke-width="3" stroke-linecap="square"/><path d="M1609.7 779.9 L1609.7 777.3 L1613.3 777.3" fill="none" stroke="#00e676" stroke-width="3" stroke-linecap="square"/><path d="M1613.3 777.3 L1613.3 773.9 L1616.9 773.9" fill="none" stroke="#00e676" stroke-width="3" stroke-linecap="square"/><path d="M1616.9 773.9 L1616.9 773.3 L1620.5 773.3" fill="none" stroke="#00e676" stroke-width="3" stroke-linecap="square"/><path d="M1620.5 773.3 L1620.5 770.4 L1624.0 770.4" fill="none" stroke="#00e676" stroke-width="3" stroke-linecap="square"/><path d="M1624.0 770.4 L1624.0 767.5 L1627.6 767.5" fill="none" stroke="#00e676" stroke-width="3" stroke-linecap="square"/><path d="M1627.6 767.5 L1627.6 768.4 L1631.2 768.4" fill="none" stroke="#00e676" stroke-width="3" stroke-linecap="square"/><path d="M1631.2 768.4 L1631.2 771.0 L1634.8 771.0" fill="none" stroke="#00e676" stroke-width="3" stroke-linecap="square"/><path d="M1634.8 771.0 L1634.8 771.2 L1638.4 771.2" fill="none" stroke="#00e676" stroke-width="3" stroke-linecap="square"/><path d="M1638.4 771.2 L1638.4 774.6 L1641.9 774.6" fill="none" stroke="#ff3b4e" stroke-width="3" stroke-linecap="square"/><path d="M1641.9 774.6 L1641.9 777.3 L1645.5 777.3" fill="none" stroke="#ff3b4e" stroke-width="3" stroke-linecap="square"/><path d="M1645.5 777.3 L1645.5 779.6 L1649.1 779.6" fill="none" stroke="#ff3b4e" stroke-width="3" stroke-linecap="square"/><path d="M1649.1 779.6 L1649.1 787.7 L1652.7 787.7" fill="none" stroke="#ff3b4e" stroke-width="3" stroke-linecap="square"/><path d="M1652.7 787.7 L1652.7 786.2 L1656.3 786.2" fill="none" stroke="#ff3b4e" stroke-width="3" stroke-linecap="square"/><path d="M1656.3 786.2 L1656.3 784.8 L1659.8 784.8" fill="none" stroke="#ff3b4e" stroke-width="3" stroke-linecap="square"/><path d="M1659.8 784.8 L1659.8 784.4 L1663.4 784.4" fill="none" stroke="#ff3b4e" stroke-width="3" stroke-linecap="square"/><path d="M1663.4 784.4 L1663.4 785.1 L1667.0 785.1" fill="none" stroke="#ff3b4e" stroke-width="3" stroke-linecap="square"/><path d="M1667.0 785.1 L1667.0 785.9 L1670.6 785.9" fill="none" stroke="#ff3b4e" stroke-width="3" stroke-linecap="square"/><path d="M1670.6 785.9 L1670.6 789.7 L1674.2 789.7" fill="none" stroke="#ff3b4e" stroke-width="3" stroke-linecap="square"/><path d="M1674.2 789.7 L1674.2 791.7 L1677.7 791.7" fill="none" stroke="#ff3b4e" stroke-width="3" stroke-linecap="square"/><path d="M1677.7 791.7 L1677.7 791.4 L1681.3 791.4" fill="none" stroke="#ff3b4e" stroke-width="3" stroke-linecap="square"/><path d="M1681.3 791.4 L1681.3 787.4 L1684.9 787.4" fill="none" stroke="#00e676" stroke-width="3" stroke-linecap="square"/><path d="M1684.9 787.4 L1684.9 780.3 L1688.5 780.3" fill="none" stroke="#00e676" stroke-width="3" stroke-linecap="square"/><path d="M1688.5 780.3 L1688.5 775.4 L1692.1 775.4" fill="none" stroke="#00e676" stroke-width="3" stroke-linecap="square"/><path d="M1692.1 775.4 L1692.1 782.4 L1695.6 782.4" fill="none" stroke="#00e676" stroke-width="3" stroke-linecap="square"/><path d="M1695.6 782.4 L1695.6 790.8 L1699.2 790.8" fill="none" stroke="#ff3b4e" stroke-width="3" stroke-linecap="square"/><path d="M1699.2 790.8 L1699.2 797.9 L1702.8 797.9" fill="none" stroke="#ff3b4e" stroke-width="3" stroke-linecap="square"/><path d="M1702.8 797.9 L1702.8 795.3 L1706.4 795.3" fill="none" stroke="#ff3b4e" stroke-width="3" stroke-linecap="square"/><path d="M1706.4 795.3 L1706.4 794.9 L1710.0 794.9" fill="none" stroke="#ff3b4e" stroke-width="3" stroke-linecap="square"/><path d="M1710.0 794.9 L1710.0 796.8 L1713.5 796.8" fill="none" stroke="#ff3b4e" stroke-width="3" stroke-linecap="square"/><path d="M1713.5 796.8 L1713.5 795.1 L1717.1 795.1" fill="none" stroke="#ff3b4e" stroke-width="3" stroke-linecap="square"/><path d="M1717.1 795.1 L1717.1 792.9 L1720.7 792.9" fill="none" stroke="#00e676" stroke-width="3" stroke-linecap="square"/><path d="M1720.7 792.9 L1720.7 797.2 L1724.3 797.2" fill="none" stroke="#ff3b4e" stroke-width="3" stroke-linecap="square"/><path d="M1724.3 797.2 L1724.3 794.3 L1727.9 794.3" fill="none" stroke="#00e676" stroke-width="3" stroke-linecap="square"/><path d="M1727.9 794.3 L1727.9 791.0 L1731.4 791.0" fill="none" stroke="#00e676" stroke-width="3" stroke-linecap="square"/><path d="M1731.4 791.0 L1731.4 787.0 L1735.0 787.0" fill="none" stroke="#00e676" stroke-width="3" stroke-linecap="square"/><path d="M1735.0 787.0 L1735.0 791.2 L1738.6 791.2" fill="none" stroke="#00e676" stroke-width="3" stroke-linecap="square"/><path d="M1738.6 791.2 L1738.6 792.7 L1742.2 792.7" fill="none" stroke="#ff3b4e" stroke-width="3" stroke-linecap="square"/><path d="M1742.2 792.7 L1742.2 793.3 L1745.8 793.3" fill="none" stroke="#ff3b4e" stroke-width="3" stroke-linecap="square"/><path d="M1745.8 793.3 L1745.8 792.4 L1749.3 792.4" fill="none" stroke="#ff3b4e" stroke-width="3" stroke-linecap="square"/><path d="M1749.3 792.4 L1749.3 796.6 L1752.9 796.6" fill="none" stroke="#ff3b4e" stroke-width="3" stroke-linecap="square"/><path d="M1752.9 796.6 L1752.9 796.4 L1756.5 796.4" fill="none" stroke="#ff3b4e" stroke-width="3" stroke-linecap="square"/><path d="M1756.5 796.4 L1756.5 796.1 L1760.1 796.1" fill="none" stroke="#ff3b4e" stroke-width="3" stroke-linecap="square"/><path d="M1760.1 796.1 L1760.1 795.4 L1763.7 795.4" fill="none" stroke="#ff3b4e" stroke-width="3" stroke-linecap="square"/><path d="M1763.7 795.4 L1763.7 794.1 L1767.2 794.1" fill="none" stroke="#00e676" stroke-width="3" stroke-linecap="square"/><path d="M1767.2 794.1 L1767.2 793.2 L1770.8 793.2" fill="none" stroke="#00e676" stroke-width="3" stroke-linecap="square"/><path d="M1770.8 793.2 L1770.8 793.3 L1774.4 793.3" fill="none" stroke="#00e676" stroke-width="3" stroke-linecap="square"/><path d="M1774.4 793.3 L1774.4 789.7 L1778.0 789.7" fill="none" stroke="#00e676" stroke-width="3" stroke-linecap="square"/><path d="M1778.0 789.7 L1778.0 795.2 L1781.6 795.2" fill="none" stroke="#ff3b4e" stroke-width="3" stroke-linecap="square"/><path d="M1781.6 795.2 L1781.6 793.1 L1785.1 793.1" fill="none" stroke="#00e676" stroke-width="3" stroke-linecap="square"/><path d="M1785.1 793.1 L1785.1 793.3 L1788.7 793.3" fill="none" stroke="#00e676" stroke-width="3" stroke-linecap="square"/><path d="M1788.7 793.3 L1788.7 788.2 L1792.3 788.2" fill="none" stroke="#00e676" stroke-width="3" stroke-linecap="square"/><path d="M1792.3 788.2 L1792.3 786.2 L1795.9 786.2" fill="none" stroke="#00e676" stroke-width="3" stroke-linecap="square"/><path d="M1795.9 786.2 L1795.9 782.8 L1799.5 782.8" fill="none" stroke="#00e676" stroke-width="3" stroke-linecap="square"/><path d="M1799.5 782.8 L1799.5 778.0 L1803.0 778.0" fill="none" stroke="#00e676" stroke-width="3" stroke-linecap="square"/><path d="M1803.0 778.0 L1803.0 778.8 L1806.6 778.8" fill="none" stroke="#00e676" stroke-width="3" stroke-linecap="square"/><path d="M1806.6 778.8 L1806.6 779.1 L1810.2 779.1" fill="none" stroke="#00e676" stroke-width="3" stroke-linecap="square"/><path d="M1810.2 779.1 L1810.2 779.8 L1813.8 779.8" fill="none" stroke="#00e676" stroke-width="3" stroke-linecap="square"/><path d="M1813.8 779.8 L1813.8 783.9 L1817.4 783.9" fill="none" stroke="#ff3b4e" stroke-width="3" stroke-linecap="square"/><path d="M1817.4 783.9 L1817.4 793.2 L1820.9 793.2" fill="none" stroke="#ff3b4e" stroke-width="3" stroke-linecap="square"/><path d="M1820.9 793.2 L1820.9 800.5 L1824.5 800.5" fill="none" stroke="#ff3b4e" stroke-width="3" stroke-linecap="square"/><path d="M1824.5 800.5 L1824.5 806.8 L1826.0 806.8" fill="none" stroke="#ff3b4e" stroke-width="3" stroke-linecap="square"/><path d="M56.0 856.8 L59.6 856.8 L59.6 857.6 L63.2 857.6 L63.2 859.8 L66.7 859.8 L66.7 861.5 L70.3 861.5 L70.3 864.8 L73.9 864.8 L73.9 866.7 L77.5 866.7 L77.5 868.2 L81.1 868.2 L81.1 867.7 L84.6 867.7 L84.6 865.3 L88.2 865.3 L88.2 859.8 L91.8 859.8 L91.8 852.8 L95.4 852.8 L95.4 846.7 L99.0 846.7 L99.0 841.3 L102.5 841.3 L102.5 838.0 L106.1 838.0 L106.1 835.3 L109.7 835.3 L109.7 832.3 L113.3 832.3 L113.3 828.4 L116.9 828.4 L116.9 824.0 L120.4 824.0 L120.4 819.4 L124.0 819.4 L124.0 816.1 L127.6 816.1 L127.6 812.6 L131.2 812.6 L131.2 810.0 L134.8 810.0 L134.8 808.5 L138.3 808.5 L138.3 808.6 L141.9 808.6 L141.9 810.5 L145.5 810.5 L145.5 812.7 L149.1 812.7 L149.1 815.3 L152.7 815.3 L152.7 816.1 L156.2 816.1 L156.2 815.8 L159.8 815.8 L159.8 815.4 L163.4 815.4 L163.4 815.8 L167.0 815.8 L167.0 815.1 L170.6 815.1 L170.6 813.3 L174.1 813.3 L174.1 812.3 L177.7 812.3 L177.7 809.4 L181.3 809.4 L181.3 807.3 L184.9 807.3 L184.9 806.2 L188.5 806.2 L188.5 806.3 L192.0 806.3 L192.0 805.6 L195.6 805.6 L195.6 805.4 L199.2 805.4 L199.2 807.0 L202.8 807.0 L202.8 806.6 L206.4 806.6 L206.4 805.3 L209.9 805.3 L209.9 803.8 L213.5 803.8 L213.5 801.9 L217.1 801.9 L217.1 800.4 L220.7 800.4 L220.7 799.3 L224.3 799.3 L224.3 799.7 L227.8 799.7 L227.8 800.8 L231.4 800.8 L231.4 801.8 L235.0 801.8 L235.0 802.7 L238.6 802.7 L238.6 803.8 L242.2 803.8 L242.2 803.5 L245.7 803.5 L245.7 801.8 L249.3 801.8 L249.3 801.5 L252.9 801.5 L252.9 802.5 L256.5 802.5 L256.5 803.6 L260.1 803.6 L260.1 805.2 L263.6 805.2 L263.6 807.3 L267.2 807.3 L267.2 809.0 L270.8 809.0 L270.8 810.4 L274.4 810.4 L274.4 810.8 L278.0 810.8 L278.0 811.4 L281.5 811.4 L281.5 810.2 L285.1 810.2 L285.1 808.0 L288.7 808.0 L288.7 806.8 L292.3 806.8 L292.3 805.5 L295.9 805.5 L295.9 804.2 L299.4 804.2 L299.4 803.8 L303.0 803.8 L303.0 804.1 L306.6 804.1 L306.6 803.8 L310.2 803.8 L310.2 804.7 L313.8 804.7 L313.8 806.4 L317.3 806.4 L317.3 807.8 L320.9 807.8 L320.9 810.7 L324.5 810.7 L324.5 813.6 L328.1 813.6 L328.1 814.8 L331.7 814.8 L331.7 816.4 L335.2 816.4 L335.2 817.8 L338.8 817.8 L338.8 818.5 L342.4 818.5 L342.4 818.4 L346.0 818.4 L346.0 816.9 L349.6 816.9 L349.6 818.7 L353.1 818.7 L353.1 821.6 L356.7 821.6 L356.7 825.6 L360.3 825.6 L360.3 829.0 L363.9 829.0 L363.9 829.9 L367.5 829.9 L367.5 829.6 L371.0 829.6 L371.0 828.8 L374.6 828.8 L374.6 829.1 L378.2 829.1 L378.2 828.0 L381.8 828.0 L381.8 829.3 L385.4 829.3 L385.4 831.2 L388.9 831.2 L388.9 833.6 L392.5 833.6 L392.5 835.9 L396.1 835.9 L396.1 837.3 L399.7 837.3 L399.7 837.5 L403.3 837.5 L403.3 836.8 L406.8 836.8 L406.8 837.7 L410.4 837.7 L410.4 838.7 L414.0 838.7 L414.0 841.4 L417.6 841.4 L417.6 842.4 L421.2 842.4 L421.2 841.5 L424.7 841.5 L424.7 840.1 L428.3 840.1 L428.3 837.4 L431.9 837.4 L431.9 835.0 L435.5 835.0 L435.5 833.1 L439.1 833.1 L439.1 832.8 L442.6 832.8 L442.6 834.2 L446.2 834.2 L446.2 834.1 L449.8 834.1 L449.8 833.6 L453.4 833.6 L453.4 833.1 L457.0 833.1 L457.0 834.5 L460.5 834.5 L460.5 836.9 L464.1 836.9 L464.1 840.8 L467.7 840.8 L467.7 844.7 L471.3 844.7 L471.3 849.6 L474.9 849.6 L474.9 853.3 L478.4 853.3 L478.4 856.6 L482.0 856.6 L482.0 857.6 L485.6 857.6 L485.6 856.5 L489.2 856.5 L489.2 854.9 L492.8 854.9 L492.8 852.7 L496.3 852.7 L496.3 851.2 L499.9 851.2 L499.9 851.0 L503.5 851.0 L503.5 850.7 L507.1 850.7 L507.1 849.9 L510.7 849.9 L510.7 847.8 L514.2 847.8 L514.2 844.3 L517.8 844.3 L517.8 841.1 L521.4 841.1 L521.4 837.1 L525.0 837.1 L525.0 834.0 L528.6 834.0 L528.6 830.8 L532.1 830.8 L532.1 828.1 L535.7 828.1 L535.7 824.5 L539.3 824.5 L539.3 822.7 L542.9 822.7 L542.9 820.3 L546.5 820.3 L546.5 817.1 L550.0 817.1 L550.0 814.2 L553.6 814.2 L553.6 812.9 L557.2 812.9 L557.2 812.6 L560.8 812.6 L560.8 813.1 L564.4 813.1 L564.4 814.3 L567.9 814.3 L567.9 815.0 L571.5 815.0 L571.5 816.4 L575.1 816.4 L575.1 819.0 L578.7 819.0 L578.7 821.0 L582.3 821.0 L582.3 822.8 L585.8 822.8 L585.8 825.4 L589.4 825.4 L589.4 827.2 L593.0 827.2 L593.0 828.4 L596.6 828.4 L596.6 829.8 L600.2 829.8 L600.2 830.0 L603.7 830.0 L603.7 830.5 L607.3 830.5 L607.3 830.3 L610.9 830.3 L610.9 830.0 L614.5 830.0 L614.5 830.6 L618.1 830.6 L618.1 833.5 L621.6 833.5 L621.6 835.3 L625.2 835.3 L625.2 836.2 L628.8 836.2 L628.8 837.6 L632.4 837.6 L632.4 837.5 L636.0 837.5 L636.0 836.8 L639.5 836.8 L639.5 835.9 L643.1 835.9 L643.1 832.4 L646.7 832.4 L646.7 829.0 L650.3 829.0 L650.3 824.3 L653.9 824.3 L653.9 820.8 L657.4 820.8 L657.4 818.5 L661.0 818.5 L661.0 817.0 L664.6 817.0 L664.6 815.4 L668.2 815.4 L668.2 814.4 L671.8 814.4 L671.8 814.7 L675.3 814.7 L675.3 816.2 L678.9 816.2 L678.9 817.3 L682.5 817.3 L682.5 817.3 L686.1 817.3 L686.1 818.8 L689.7 818.8 L689.7 818.8 L693.2 818.8 L693.2 817.2 L696.8 817.2 L696.8 814.2 L700.4 814.2 L700.4 811.6 L704.0 811.6 L704.0 809.4 L707.6 809.4 L707.6 807.0 L711.1 807.0 L711.1 804.0 L714.7 804.0 L714.7 800.8 L718.3 800.8 L718.3 796.5 L721.9 796.5 L721.9 793.1 L725.5 793.1 L725.5 791.1 L729.0 791.1 L729.0 791.4 L732.6 791.4 L732.6 792.6 L736.2 792.6 L736.2 794.5 L739.8 794.5 L739.8 795.9 L743.4 795.9 L743.4 797.0 L746.9 797.0 L746.9 798.0 L750.5 798.0 L750.5 799.0 L754.1 799.0 L754.1 800.0 L757.7 800.0 L757.7 801.7 L761.3 801.7 L761.3 803.0 L764.8 803.0 L764.8 803.2 L768.4 803.2 L768.4 803.7 L772.0 803.7 L772.0 803.4 L775.6 803.4 L775.6 803.2 L779.2 803.2 L779.2 801.8 L782.7 801.8 L782.7 800.1 L786.3 800.1 L786.3 798.0 L789.9 798.0 L789.9 796.1 L793.5 796.1 L793.5 794.6 L797.1 794.6 L797.1 792.9 L800.6 792.9 L800.6 789.0 L804.2 789.0 L804.2 782.5 L807.8 782.5 L807.8 776.3 L811.4 776.3 L811.4 770.7 L815.0 770.7 L815.0 766.0 L818.5 766.0 L818.5 763.1 L822.1 763.1 L822.1 761.1 L825.7 761.1 L825.7 760.2 L829.3 760.2 L829.3 760.9 L832.9 760.9 L832.9 762.9 L836.4 762.9 L836.4 764.3 L840.0 764.3 L840.0 765.1 L843.6 765.1 L843.6 763.7 L847.2 763.7 L847.2 762.7 L850.8 762.7 L850.8 762.4 L854.3 762.4 L854.3 764.6 L857.9 764.6 L857.9 766.8 L861.5 766.8 L861.5 769.9 L865.1 769.9 L865.1 773.0 L868.7 773.0 L868.7 776.3 L872.2 776.3 L872.2 780.7 L875.8 780.7 L875.8 787.6 L879.4 787.6 L879.4 794.9 L883.0 794.9 L883.0 802.2 L886.6 802.2 L886.6 809.1 L890.1 809.1 L890.1 814.0 L893.7 814.0 L893.7 818.2 L897.3 818.2 L897.3 820.5 L900.9 820.5 L900.9 821.4 L904.5 821.4 L904.5 821.1 L908.0 821.1 L908.0 819.6 L911.6 819.6 L911.6 818.0 L915.2 818.0 L915.2 816.7 L918.8 816.7 L918.8 812.3 L922.4 812.3 L922.4 807.8 L925.9 807.8 L925.9 803.4 L929.5 803.4 L929.5 799.4 L933.1 799.4 L933.1 795.7 L936.7 795.7 L936.7 792.5 L940.3 792.5 L940.3 789.3 L943.8 789.3 L943.8 785.7 L947.4 785.7 L947.4 783.1 L951.0 783.1 L951.0 781.1 L954.6 781.1 L954.6 780.0 L958.2 780.0 L958.2 779.5 L961.7 779.5 L961.7 779.5 L965.3 779.5 L965.3 779.3 L968.9 779.3 L968.9 780.5 L972.5 780.5 L972.5 782.4 L976.1 782.4 L976.1 784.5 L979.6 784.5 L979.6 787.9 L983.2 787.9 L983.2 790.1 L986.8 790.1 L986.8 792.2 L990.4 792.2 L990.4 794.4 L994.0 794.4 L994.0 797.3 L997.5 797.3 L997.5 799.6 L1001.1 799.6 L1001.1 801.8 L1004.7 801.8 L1004.7 804.6 L1008.3 804.6 L1008.3 806.2 L1011.9 806.2 L1011.9 806.0 L1015.4 806.0 L1015.4 805.1 L1019.0 805.1 L1019.0 802.9 L1022.6 802.9 L1022.6 799.2 L1026.2 799.2 L1026.2 794.8 L1029.8 794.8 L1029.8 790.2 L1033.3 790.2 L1033.3 787.7 L1036.9 787.7 L1036.9 786.5 L1040.5 786.5 L1040.5 785.3 L1044.1 785.3 L1044.1 786.1 L1047.7 786.1 L1047.7 786.5 L1051.2 786.5 L1051.2 786.8 L1054.8 786.8 L1054.8 787.8 L1058.4 787.8 L1058.4 786.3 L1062.0 786.3 L1062.0 783.6 L1065.6 783.6 L1065.6 779.2 L1069.1 779.2 L1069.1 773.4 L1072.7 773.4 L1072.7 765.5 L1076.3 765.5 L1076.3 757.0 L1079.9 757.0 L1079.9 750.8 L1083.5 750.8 L1083.5 746.4 L1087.0 746.4 L1087.0 743.0 L1090.6 743.0 L1090.6 740.0 L1094.2 740.0 L1094.2 738.8 L1097.8 738.8 L1097.8 738.6 L1101.4 738.6 L1101.4 739.8 L1104.9 739.8 L1104.9 741.8 L1108.5 741.8 L1108.5 744.7 L1112.1 744.7 L1112.1 748.1 L1115.7 748.1 L1115.7 750.3 L1119.3 750.3 L1119.3 752.3 L1122.8 752.3 L1122.8 752.8 L1126.4 752.8 L1126.4 753.5 L1130.0 753.5 L1130.0 753.8 L1133.6 753.8 L1133.6 753.0 L1137.2 753.0 L1137.2 751.5 L1140.7 751.5 L1140.7 748.5 L1144.3 748.5 L1144.3 744.3 L1147.9 744.3 L1147.9 742.4 L1151.5 742.4 L1151.5 741.3 L1155.1 741.3 L1155.1 739.7 L1158.6 739.7 L1158.6 739.4 L1162.2 739.4 L1162.2 738.3 L1165.8 738.3 L1165.8 736.8 L1169.4 736.8 L1169.4 736.1 L1173.0 736.1 L1173.0 734.9 L1176.5 734.9 L1176.5 733.2 L1180.1 733.2 L1180.1 730.6 L1183.7 730.6 L1183.7 728.8 L1187.3 728.8 L1187.3 726.2 L1190.9 726.2 L1190.9 723.8 L1194.4 723.8 L1194.4 720.9 L1198.0 720.9 L1198.0 717.5 L1201.6 717.5 L1201.6 715.5 L1205.2 715.5 L1205.2 715.7 L1208.8 715.7 L1208.8 716.6 L1212.3 716.6 L1212.3 717.6 L1215.9 717.6 L1215.9 719.1 L1219.5 719.1 L1219.5 721.2 L1223.1 721.2 L1223.1 723.2 L1226.7 723.2 L1226.7 725.8 L1230.2 725.8 L1230.2 727.1 L1233.8 727.1 L1233.8 727.3 L1237.4 727.3 L1237.4 726.7 L1241.0 726.7 L1241.0 727.0 L1244.6 727.0 L1244.6 727.3 L1248.1 727.3 L1248.1 730.1 L1251.7 730.1 L1251.7 735.4 L1255.3 735.4 L1255.3 740.8 L1258.9 740.8 L1258.9 745.5 L1262.5 745.5 L1262.5 750.1 L1266.0 750.1 L1266.0 754.2 L1269.6 754.2 L1269.6 758.4 L1273.2 758.4 L1273.2 762.4 L1276.8 762.4 L1276.8 768.1 L1280.4 768.1 L1280.4 773.6 L1283.9 773.6 L1283.9 776.6 L1287.5 776.6 L1287.5 779.8 L1291.1 779.8 L1291.1 780.5 L1294.7 780.5 L1294.7 781.2 L1298.3 781.2 L1298.3 781.3 L1301.8 781.3 L1301.8 781.4 L1305.4 781.4 L1305.4 780.7 L1309.0 780.7 L1309.0 779.3 L1312.6 779.3 L1312.6 777.7 L1316.2 777.7 L1316.2 776.7 L1319.7 776.7 L1319.7 775.6 L1323.3 775.6 L1323.3 774.5 L1326.9 774.5 L1326.9 774.7 L1330.5 774.7 L1330.5 774.2 L1334.1 774.2 L1334.1 774.4 L1337.6 774.4 L1337.6 774.2 L1341.2 774.2 L1341.2 774.3 L1344.8 774.3 L1344.8 772.4 L1348.4 772.4 L1348.4 769.5 L1352.0 769.5 L1352.0 767.1 L1355.5 767.1 L1355.5 764.7 L1359.1 764.7 L1359.1 762.2 L1362.7 762.2 L1362.7 760.4 L1366.3 760.4 L1366.3 758.5 L1369.9 758.5 L1369.9 757.5 L1373.4 757.5 L1373.4 757.7 L1377.0 757.7 L1377.0 758.0 L1380.6 758.0 L1380.6 758.7 L1384.2 758.7 L1384.2 759.7 L1387.8 759.7 L1387.8 759.9 L1391.3 759.9 L1391.3 760.0 L1394.9 760.0 L1394.9 760.5 L1398.5 760.5 L1398.5 760.0 L1402.1 760.0 L1402.1 760.3 L1405.7 760.3 L1405.7 760.4 L1409.2 760.4 L1409.2 761.1 L1412.8 761.1 L1412.8 762.0 L1416.4 762.0 L1416.4 761.5 L1420.0 761.5 L1420.0 761.9 L1423.6 761.9 L1423.6 761.6 L1427.1 761.6 L1427.1 761.9 L1430.7 761.9 L1430.7 762.9 L1434.3 762.9 L1434.3 764.8 L1437.9 764.8 L1437.9 766.4 L1441.5 766.4 L1441.5 769.5 L1445.0 769.5 L1445.0 772.1 L1448.6 772.1 L1448.6 775.1 L1452.2 775.1 L1452.2 778.1 L1455.8 778.1 L1455.8 781.1 L1459.4 781.1 L1459.4 781.9 L1462.9 781.9 L1462.9 781.4 L1466.5 781.4 L1466.5 780.2 L1470.1 780.2 L1470.1 778.0 L1473.7 778.0 L1473.7 776.7 L1477.3 776.7 L1477.3 774.7 L1480.8 774.7 L1480.8 773.2 L1484.4 773.2 L1484.4 772.0 L1488.0 772.0 L1488.0 770.8 L1491.6 770.8 L1491.6 770.5 L1495.2 770.5 L1495.2 771.3 L1498.7 771.3 L1498.7 771.8 L1502.3 771.8 L1502.3 772.0 L1505.9 772.0 L1505.9 772.7 L1509.5 772.7 L1509.5 772.9 L1513.1 772.9 L1513.1 772.0 L1516.6 772.0 L1516.6 770.8 L1520.2 770.8 L1520.2 769.6 L1523.8 769.6 L1523.8 769.2 L1527.4 769.2 L1527.4 769.1 L1531.0 769.1 L1531.0 770.4 L1534.5 770.4 L1534.5 773.1 L1538.1 773.1 L1538.1 776.6 L1541.7 776.6 L1541.7 779.3 L1545.3 779.3 L1545.3 782.1 L1548.9 782.1 L1548.9 784.5 L1552.4 784.5 L1552.4 786.7 L1556.0 786.7 L1556.0 788.7 L1559.6 788.7 L1559.6 790.2 L1563.2 790.2 L1563.2 791.5 L1566.8 791.5 L1566.8 790.7 L1570.3 790.7 L1570.3 789.1 L1573.9 789.1 L1573.9 787.4 L1577.5 787.4 L1577.5 786.1 L1581.1 786.1 L1581.1 785.5 L1584.7 785.5 L1584.7 785.6 L1588.2 785.6 L1588.2 787.6 L1591.8 787.6 L1591.8 789.8 L1595.4 789.8 L1595.4 791.7 L1599.0 791.7 L1599.0 790.7 L1602.6 790.7 L1602.6 788.6 L1606.1 788.6 L1606.1 786.0 L1609.7 786.0 L1609.7 783.4 L1613.3 783.4 L1613.3 780.5 L1616.9 780.5 L1616.9 778.4 L1620.5 778.4 L1620.5 776.0 L1624.0 776.0 L1624.0 773.4 L1627.6 773.4 L1627.6 771.9 L1631.2 771.9 L1631.2 771.6 L1634.8 771.6 L1634.8 771.5 L1638.4 771.5 L1638.4 772.4 L1641.9 772.4 L1641.9 773.9 L1645.5 773.9 L1645.5 775.6 L1649.1 775.6 L1649.1 779.2 L1652.7 779.2 L1652.7 781.3 L1656.3 781.3 L1656.3 782.4 L1659.8 782.4 L1659.8 783.0 L1663.4 783.0 L1663.4 783.6 L1667.0 783.6 L1667.0 784.3 L1670.6 784.3 L1670.6 785.9 L1674.2 785.9 L1674.2 787.6 L1677.7 787.6 L1677.7 788.8 L1681.3 788.8 L1681.3 788.4 L1684.9 788.4 L1684.9 785.9 L1688.5 785.9 L1688.5 782.8 L1692.1 782.8 L1692.1 782.7 L1695.6 782.7 L1695.6 785.1 L1699.2 785.1 L1699.2 788.9 L1702.8 788.9 L1702.8 790.9 L1706.4 790.9 L1706.4 792.1 L1710.0 792.1 L1710.0 793.5 L1713.5 793.5 L1713.5 794.0 L1717.1 794.0 L1717.1 793.6 L1720.7 793.6 L1720.7 794.7 L1724.3 794.7 L1724.3 794.6 L1727.9 794.6 L1727.9 793.5 L1731.4 793.5 L1731.4 791.5 L1735.0 791.5 L1735.0 791.4 L1738.6 791.4 L1738.6 791.8 L1742.2 791.8 L1742.2 792.3 L1745.8 792.3 L1745.8 792.3 L1749.3 792.3 L1749.3 793.6 L1752.9 793.6 L1752.9 794.4 L1756.5 794.4 L1756.5 794.9 L1760.1 794.9 L1760.1 795.1 L1763.7 795.1 L1763.7 794.8 L1767.2 794.8 L1767.2 794.3 L1770.8 794.3 L1770.8 794.0 L1774.4 794.0 L1774.4 792.7 L1778.0 792.7 L1778.0 793.5 L1781.6 793.5 L1781.6 793.4 L1785.1 793.4 L1785.1 793.3 L1788.7 793.3 L1788.7 791.8 L1792.3 791.8 L1792.3 790.1 L1795.9 790.1 L1795.9 787.9 L1799.5 787.9 L1799.5 784.9 L1803.0 784.9 L1803.0 783.1 L1806.6 783.1 L1806.6 781.9 L1810.2 781.9 L1810.2 781.3 L1813.8 781.3 L1813.8 782.1 L1817.4 782.1 L1817.4 785.4 L1820.9 785.4 L1820.9 789.9 L1824.5 789.9 L1824.5 795.0 L1826.0 795.0" fill="none" stroke="#86878c" stroke-width="3"/></g></svg>
<div class="p" style="left:56px;top:561px;width:1837px;height:1px;background:#2e2e2e;"></div>
<div class="p" style="left:56px;top:1041px;width:1837px;height:1px;background:#2e2e2e;"></div>
<div class="t" style="left:1836.00px;top:67.62px;font-size:12px;line-height:12px;color:#c7c7c7;font-weight:normal;">72,000.0</div>
<div class="t" style="left:1836.00px;top:105.48px;font-size:12px;line-height:12px;color:#c7c7c7;font-weight:normal;">71,600.0</div>
<div class="t" style="left:1836.00px;top:143.34px;font-size:12px;line-height:12px;color:#c7c7c7;font-weight:normal;">71,200.0</div>
<div class="t" style="left:1836.00px;top:181.20px;font-size:12px;line-height:12px;color:#c7c7c7;font-weight:normal;">70,800.0</div>
<div class="t" style="left:1836.00px;top:219.06px;font-size:12px;line-height:12px;color:#c7c7c7;font-weight:normal;">70,400.0</div>
<div class="t" style="left:1836.00px;top:256.92px;font-size:12px;line-height:12px;color:#c7c7c7;font-weight:normal;">70,000.0</div>
<div class="t" style="left:1836.00px;top:294.78px;font-size:12px;line-height:12px;color:#c7c7c7;font-weight:normal;">69,600.0</div>
<div class="t" style="left:1836.00px;top:332.64px;font-size:12px;line-height:12px;color:#c7c7c7;font-weight:normal;">69,200.0</div>
<div class="t" style="left:1836.00px;top:370.50px;font-size:12px;line-height:12px;color:#c7c7c7;font-weight:normal;">68,800.0</div>
<div class="t" style="left:1836.00px;top:408.36px;font-size:12px;line-height:12px;color:#c7c7c7;font-weight:normal;">68,400.0</div>
<div class="t" style="left:1836.00px;top:446.22px;font-size:12px;line-height:12px;color:#c7c7c7;font-weight:normal;">68,000.0</div>
<div class="t" style="left:1836.00px;top:484.08px;font-size:12px;line-height:12px;color:#c7c7c7;font-weight:normal;">67,600.0</div>
<div class="t" style="left:1836.00px;top:521.94px;font-size:12px;line-height:12px;color:#c7c7c7;font-weight:normal;">67,200.0</div>
<div class="t" style="left:1836.00px;top:564.62px;font-size:12px;line-height:12px;color:#c7c7c7;font-weight:normal;">120.0</div>
<div class="t" style="left:1836.00px;top:601.52px;font-size:12px;line-height:12px;color:#c7c7c7;font-weight:normal;">100.0</div>
<div class="t" style="left:1836.00px;top:638.42px;font-size:12px;line-height:12px;color:#c7c7c7;font-weight:normal;">80.0</div>
<div class="t" style="left:1836.00px;top:675.32px;font-size:12px;line-height:12px;color:#c7c7c7;font-weight:normal;">60.0</div>
<div class="t" style="left:1836.00px;top:712.22px;font-size:12px;line-height:12px;color:#c7c7c7;font-weight:normal;">40.0</div>
<div class="t" style="left:1836.00px;top:822.92px;font-size:12px;line-height:12px;color:#c7c7c7;font-weight:normal;">−20.0</div>
<div class="t" style="left:1836.00px;top:859.82px;font-size:12px;line-height:12px;color:#c7c7c7;font-weight:normal;">−40.0</div>
<div class="t" style="left:1836.00px;top:896.72px;font-size:12px;line-height:12px;color:#c7c7c7;font-weight:normal;">−60.0</div>
<div class="t" style="left:1836.00px;top:933.62px;font-size:12px;line-height:12px;color:#c7c7c7;font-weight:normal;">−80.0</div>
<div class="t" style="left:1836.00px;top:970.52px;font-size:12px;line-height:12px;color:#c7c7c7;font-weight:normal;">−100.0</div>
<div class="p" style="left:1828px;top:228px;width:58px;height:15px;border:1px solid #d9d9d9;background:#0f0f0f;border-radius:0 2px 2px 0;"></div>
<div class="t" style="left:1482.00px;width:400px;text-align:right;top:230.72px;font-size:12px;line-height:12px;color:#e0e0e0;font-weight:normal;">70,285.5</div>
<div class="p" style="left:1828px;top:509px;width:60px;height:17px;background:#9a1ffb;border-radius:0 3px 3px 0;"></div>
<div class="t" style="left:1482.00px;width:400px;text-align:right;top:511.72px;font-size:12px;line-height:12px;color:#ffffff;font-weight:bold;-webkit-text-stroke:0;">67,315.4</div>
<div class="p" style="left:1828px;top:748px;width:35px;height:15px;border:1px solid #2962ff;background:#0f0f0f;border-radius:0 2px 2px 0;"></div>
<div class="t" style="left:1459.00px;width:400px;text-align:right;top:750.72px;font-size:12px;line-height:12px;color:#2962ff;font-weight:normal;">10.6</div>
<div class="p" style="left:1828px;top:764px;width:35px;height:16px;border:1px solid #868686;background:#0f0f0f;border-radius:0 2px 2px 0;"></div>
<div class="t" style="left:1459.00px;width:400px;text-align:right;top:767.22px;font-size:12px;line-height:12px;color:#9a9a9a;font-weight:normal;">−3.5</div>
<div class="p" style="left:1828px;top:781px;width:35px;height:16px;border:1px solid #00bcd4;background:#0f0f0f;border-radius:0 2px 2px 0;"></div>
<div class="t" style="left:1459.00px;width:400px;text-align:right;top:784.22px;font-size:12px;line-height:12px;color:#00bcd4;font-weight:normal;">−7.0</div>
<div class="p" style="left:1828px;top:798px;width:35px;height:16px;border:1px solid #f23645;background:#0f0f0f;border-radius:0 2px 2px 0;"></div>
<div class="t" style="left:1459.00px;width:400px;text-align:right;top:801.22px;font-size:12px;line-height:12px;color:#f23645;font-weight:normal;">−8.4</div>
<div class="p" style="left:1828px;top:836px;width:41px;height:15px;border:1px solid #22ab94;background:#0f0f0f;border-radius:0 2px 2px 0;"></div>
<div class="t" style="left:1465.00px;width:400px;text-align:right;top:838.72px;font-size:12px;line-height:12px;color:#22ab94;font-weight:normal;">−28.7</div>
<div class="t" style="left:-128.60px;width:400px;text-align:center;top:1020.31px;font-size:11.6px;line-height:11.6px;color:#cfcfcf;font-weight:normal;">12:00</div>
<div class="t" style="left:0.47px;width:400px;text-align:center;top:1020.31px;font-size:11.6px;line-height:11.6px;color:#cfcfcf;font-weight:normal;">15:00</div>
<div class="t" style="left:129.54px;width:400px;text-align:center;top:1020.31px;font-size:11.6px;line-height:11.6px;color:#cfcfcf;font-weight:normal;">18:00</div>
<div class="t" style="left:258.61px;width:400px;text-align:center;top:1020.31px;font-size:11.6px;line-height:11.6px;color:#cfcfcf;font-weight:normal;">21:00</div>
<div class="t" style="left:387.68px;width:400px;text-align:center;top:1020.31px;font-size:11.6px;line-height:11.6px;color:#cfcfcf;font-weight:normal;">23</div>
<div class="t" style="left:516.75px;width:400px;text-align:center;top:1020.31px;font-size:11.6px;line-height:11.6px;color:#cfcfcf;font-weight:normal;">03:00</div>
<div class="t" style="left:645.82px;width:400px;text-align:center;top:1020.31px;font-size:11.6px;line-height:11.6px;color:#cfcfcf;font-weight:normal;">06:00</div>
<div class="t" style="left:774.89px;width:400px;text-align:center;top:1020.31px;font-size:11.6px;line-height:11.6px;color:#cfcfcf;font-weight:normal;">09:00</div>
<div class="t" style="left:903.96px;width:400px;text-align:center;top:1020.31px;font-size:11.6px;line-height:11.6px;color:#cfcfcf;font-weight:normal;">12:00</div>
<div class="t" style="left:1033.03px;width:400px;text-align:center;top:1020.31px;font-size:11.6px;line-height:11.6px;color:#cfcfcf;font-weight:normal;">15:00</div>
<div class="t" style="left:1162.10px;width:400px;text-align:center;top:1020.31px;font-size:11.6px;line-height:11.6px;color:#cfcfcf;font-weight:normal;">18:00</div>
<div class="t" style="left:1291.17px;width:400px;text-align:center;top:1020.31px;font-size:11.6px;line-height:11.6px;color:#cfcfcf;font-weight:normal;">21:00</div>
<div class="t" style="left:1420.24px;width:400px;text-align:center;top:1020.31px;font-size:11.6px;line-height:11.6px;color:#cfcfcf;font-weight:normal;">24</div>
<div class="t" style="left:1549.31px;width:400px;text-align:center;top:1020.31px;font-size:11.6px;line-height:11.6px;color:#cfcfcf;font-weight:normal;">03:00</div>
<div class="p" style="left:56px;top:5px;width:128px;height:28px;background:#3d3d3d;border-radius:14px;"></div>
<div class="p" style="left:158px;top:6px;width:26px;height:26px;background:#0f0f0f;border-radius:13px;"></div>
<div class="p" style="left:237px;top:2px;width:27px;height:34px;background:#3d3d3d;border-radius:5px;"></div>
<div class="p" style="left:594px;top:2px;width:34px;height:34px;background:#3d3d3d;border-radius:5px;"></div>
<div class="t" style="left:50.50px;width:400px;text-align:center;top:13.04px;font-size:13.2px;line-height:13.2px;color:#dbdbdb;font-weight:normal;">1m</div>
<div class="t" style="left:81.70px;width:400px;text-align:center;top:13.04px;font-size:13.2px;line-height:13.2px;color:#dbdbdb;font-weight:normal;">3m</div>
<div class="t" style="left:112.40px;width:400px;text-align:center;top:13.04px;font-size:13.2px;line-height:13.2px;color:#dbdbdb;font-weight:normal;">5m</div>
<div class="t" style="left:147.20px;width:400px;text-align:center;top:13.04px;font-size:13.2px;line-height:13.2px;color:#dbdbdb;font-weight:normal;">10m</div>
<div class="t" style="left:185.70px;width:400px;text-align:center;top:13.04px;font-size:13.2px;line-height:13.2px;color:#dbdbdb;font-weight:normal;">15m</div>
<div class="t" style="left:218.30px;width:400px;text-align:center;top:13.04px;font-size:13.2px;line-height:13.2px;color:#dbdbdb;font-weight:normal;">1h</div>
<div class="t" style="left:244.80px;width:400px;text-align:center;top:13.04px;font-size:13.2px;line-height:13.2px;color:#dbdbdb;font-weight:normal;">4h</div>
<div class="t" style="left:276.30px;width:400px;text-align:center;top:13.04px;font-size:13.2px;line-height:13.2px;color:#dbdbdb;font-weight:normal;">12h</div>
<div class="t" style="left:303.60px;width:400px;text-align:center;top:13.04px;font-size:13.2px;line-height:13.2px;color:#dbdbdb;font-weight:normal;">D</div>
<div class="t" style="left:325.50px;width:400px;text-align:center;top:13.04px;font-size:13.2px;line-height:13.2px;color:#dbdbdb;font-weight:normal;">W</div>
<div class="t" style="left:348.00px;width:400px;text-align:center;top:13.04px;font-size:13.2px;line-height:13.2px;color:#dbdbdb;font-weight:normal;">M</div>
<div class="t" style="left:738.00px;top:12.55px;font-size:14px;line-height:14px;color:#dbdbdb;font-weight:normal;">Indicators</div>
<div class="t" style="left:918.60px;top:12.55px;font-size:14px;line-height:14px;color:#dbdbdb;font-weight:normal;">Alert</div>
<div class="t" style="left:996.40px;top:12.79px;font-size:13.5px;line-height:13.5px;color:#dbdbdb;font-weight:normal;">Replay</div>
<div class="t" style="left:1301.70px;top:7.59px;font-size:13.3px;line-height:13.3px;color:#dbdbdb;font-weight:normal;">Screenshots</div>
<div class="t" style="left:1138.20px;width:400px;text-align:center;top:22.26px;font-size:9px;line-height:9px;color:#2962ff;font-weight:normal;">Save</div>
<div class="t" style="left:1219.20px;width:400px;text-align:center;top:14.72px;font-size:9.5px;line-height:9.5px;color:#f0f0f0;font-weight:bold;-webkit-text-stroke:0;">M</div>
<div class="t" style="left:1247.00px;width:400px;text-align:center;top:14.72px;font-size:9.5px;line-height:9.5px;color:#f0f0f0;font-weight:bold;-webkit-text-stroke:0;">V</div>
<div class="t" style="left:1274.80px;width:400px;text-align:center;top:14.72px;font-size:9.5px;line-height:9.5px;color:#f0f0f0;font-weight:bold;-webkit-text-stroke:0;">V</div>
<div class="t" style="left:1302.60px;width:400px;text-align:center;top:14.72px;font-size:9.5px;line-height:9.5px;color:#f0f0f0;font-weight:bold;-webkit-text-stroke:0;">V</div>
<div class="t" style="left:1330.40px;width:400px;text-align:center;top:14.72px;font-size:9.5px;line-height:9.5px;color:#f0f0f0;font-weight:bold;-webkit-text-stroke:0;">V</div>
<div class="t" style="left:1358.20px;width:400px;text-align:center;top:14.72px;font-size:9.5px;line-height:9.5px;color:#f0f0f0;font-weight:bold;-webkit-text-stroke:0;">V</div>
<div class="t" style="left:1386.00px;width:400px;text-align:center;top:14.72px;font-size:9.5px;line-height:9.5px;color:#f0f0f0;font-weight:bold;-webkit-text-stroke:0;">V</div>
<div class="t" style="left:1413.80px;width:400px;text-align:center;top:14.72px;font-size:9.5px;line-height:9.5px;color:#f0f0f0;font-weight:bold;-webkit-text-stroke:0;">V</div>
<div class="p" style="left:1801px;top:5px;width:57px;height:26px;background:#000;border:1px solid #3d3d3d;border-radius:14px;"></div>
<div class="t" style="left:1631.50px;width:400px;text-align:center;top:12.84px;font-size:13.2px;line-height:13.2px;color:#ffffff;font-weight:normal;">Trade</div>
<div class="p" style="left:1868px;top:5px;width:69px;height:28px;background:#f2f2f2;border-radius:14px;"></div>
<div class="t" style="left:1702.60px;width:400px;text-align:center;top:12.74px;font-size:13.4px;line-height:13.4px;color:#0f0f0f;font-weight:normal;">Publish</div>
<div class="p" style="left:9px;top:50px;width:34px;height:34px;background:#3d3d3d;border-radius:6px;"></div>
<svg class="ic" style="left:0;top:0" width="1942" height="1080" viewBox="0 0 1942 1080"><circle cx="25.8" cy="18.9" r="13.3" fill="#0a0a0a" stroke="#2e2e2e" stroke-width="1"/><circle cx="25.8" cy="18.9" r="10.2" fill="none" stroke="#0b3d8c" stroke-width="1.3"/><path d="M25.8 8 L27.2 17.5 L36.5 18.9 L27.2 20.3 L25.8 30.5 L24.4 20.3 L15 18.9 L24.4 17.5 Z" fill="#1a78e0"/><path d="M25.8 18.9 L20 12.5 L26.5 17 Z M25.8 18.9 L31.8 12.5 L25 17 Z" fill="#1560c0"/><path d="M25.5 7.5 L19.2 24.5 L20.4 24.5 L23.3 17.5 L27.7 17.5 L32.2 24.8 L33.3 24.5 Z M24 16 L25.5 11 L27 16 Z" fill="#e6eaf2"/><circle cx="41" cy="10" r="9" fill="#f23645"/><path d="M165.5 15.5 L168.5 12.5 L174.5 12.5 L177.5 15.5 L171.5 23.5 Z" fill="none" stroke="#dbdbdb" stroke-width="1.2"/><rect x="169.5" y="15" width="4" height="4" fill="#dbdbdb"/><circle cx="206.4" cy="19.3" r="9.4" fill="none" stroke="#dbdbdb" stroke-width="1.2"/><path d="M201.5 19.3 H211.3 M206.4 14.4 V24.2" fill="none" stroke="#dbdbdb" stroke-width="1.2"/><line x1="230.5" y1="9" x2="230.5" y2="29" stroke="#3a3a3a" stroke-width="1"/><line x1="587.5" y1="9" x2="587.5" y2="29" stroke="#3a3a3a" stroke-width="1"/><line x1="696.5" y1="9" x2="696.5" y2="29" stroke="#3a3a3a" stroke-width="1"/><line x1="877.5" y1="9" x2="877.5" y2="29" stroke="#3a3a3a" stroke-width="1"/><line x1="1053.5" y1="9" x2="1053.5" y2="29" stroke="#3a3a3a" stroke-width="1"/><line x1="1640.5" y1="9" x2="1640.5" y2="29" stroke="#3a3a3a" stroke-width="1"/><path d="M607.5 9 V12 M607.5 26 V29 M614.5 12 V15 M614.5 23 V26" fill="none" stroke="#dbdbdb" stroke-width="1.2"/><rect x="605.5" y="12" width="4" height="14" fill="none" stroke="#dbdbdb" stroke-width="1.2"/><rect x="612.5" y="15" width="4" height="8" fill="none" stroke="#dbdbdb" stroke-width="1.2"/><path d="M645.5 9 V12 M645.5 26 V29 M652.5 12 V15 M652.5 23 V26" fill="none" stroke="#dbdbdb" stroke-width="1.2"/><rect x="643.5" y="12" width="4" height="14" fill="#9a9a9a" stroke="#dbdbdb" stroke-width="1.2"/><rect x="650.5" y="15" width="4" height="8" fill="none" stroke="#dbdbdb" stroke-width="1.2"/><path d="M567 16.5 L571 20.5 L575 16.5" fill="none" stroke="#dbdbdb" stroke-width="1.2"/><path d="M676.5 16.5 L680.5 20.5 L684.5 16.5" fill="none" stroke="#dbdbdb" stroke-width="1.2"/><path d="M818 17 L822 21 L826 17" fill="none" stroke="#dbdbdb" stroke-width="1.2"/><path d="M1388.8 16.5 L1392.8 20.5 L1396.8 16.5" fill="none" stroke="#dbdbdb" stroke-width="1.2"/><path d="M711 19 L716 14 L720 17 L728 10 M711.5 29 V25 M716.5 29 V21 M721.5 29 V23 M726.5 29 V19 M710 29.5 H729" fill="none" stroke="#dbdbdb" stroke-width="1.2"/><rect x="845.5" y="11.5" width="6.5" height="6.5" rx="2" fill="none" stroke="#dbdbdb" stroke-width="1.2"/><rect x="845.5" y="21.5" width="6.5" height="6.5" rx="2" fill="none" stroke="#dbdbdb" stroke-width="1.2"/><rect x="855.5" y="11.5" width="6.5" height="6.5" rx="2" fill="none" stroke="#dbdbdb" stroke-width="1.2"/><rect x="855.5" y="21.5" width="6.5" height="6.5" rx="2" fill="none" stroke="#dbdbdb" stroke-width="1.2"/><circle cx="898" cy="20" r="8" fill="none" stroke="#dbdbdb" stroke-width="1.2"/><path d="M898 15 V20.5 H901.5 M891 11.5 L894 9 M905 11.5 L902 9 M903 27 H909 M906 24 V30" fill="none" stroke="#dbdbdb" stroke-width="1.2"/><path d="M980 13.5 L973.5 19 L980 24.5 Z M986.5 13.5 L980 19 L986.5 24.5 Z" fill="none" stroke="#dbdbdb" stroke-width="1.2" stroke-linejoin="round"/><path d="M979 13 L979 25 M986 13 L986 25" fill="none" stroke="#dbdbdb" stroke-width="0"/><path d="M1071 19 H1079 Q1084 19 1084 24 V25 M1074 15 L1070.5 19 L1074 23" fill="none" stroke="#dbdbdb" stroke-width="1.2"/><path d="M1118 19 H1110 Q1105 19 1105 24 V25 M1115 15 L1118.5 19 L1115 23" fill="none" stroke="#5a5a5a" stroke-width="1.2"/><rect x="1268.8" y="11.6" width="17.5" height="15.6" rx="3" fill="none" stroke="#dbdbdb" stroke-width="1.5"/><circle cx="1419.2" cy="18.8" r="10.6" fill="none" stroke="#4a4a4a" stroke-width="1"/><circle cx="1447.0" cy="18.8" r="10.6" fill="none" stroke="#4a4a4a" stroke-width="1"/><circle cx="1474.8" cy="18.8" r="10.6" fill="none" stroke="#4a4a4a" stroke-width="1"/><circle cx="1502.6" cy="18.8" r="10.6" fill="none" stroke="#4a4a4a" stroke-width="1"/><circle cx="1530.4" cy="18.8" r="10.6" fill="none" stroke="#4a4a4a" stroke-width="1"/><circle cx="1558.2" cy="18.8" r="10.6" fill="none" stroke="#4a4a4a" stroke-width="1"/><circle cx="1586.0" cy="18.8" r="10.6" fill="none" stroke="#4a4a4a" stroke-width="1"/><circle cx="1613.8" cy="18.8" r="10.6" fill="none" stroke="#4a4a4a" stroke-width="1"/><path d="M1668 8 L1663 16 H1667 L1665 22 L1671 13 H1667 L1669 8" fill="none" stroke="#dbdbdb" stroke-width="1.2"/><path d="M1661 11.5 A8 8 0 1 0 1670 26 M1668.5 24 L1673 28.5" fill="none" stroke="#dbdbdb" stroke-width="1.2"/><path d="M1696.5 10.5 H1706.5 L1712 19 L1706.5 27.5 H1696.5 L1691 19 Z" fill="none" stroke="#dbdbdb" stroke-width="1.2"/><circle cx="1701.5" cy="19" r="3.5" fill="none" stroke="#dbdbdb" stroke-width="1.2"/><path d="M1732 16 V13.5 Q1732 11.5 1734 11.5 H1736.5 M1743.5 11.5 H1746 Q1748 11.5 1748 13.5 V16 M1748 22 V24.5 Q1748 26.5 1746 26.5 H1743.5 M1736.5 26.5 H1734 Q1732 26.5 1732 24.5 V22" fill="none" stroke="#dbdbdb" stroke-width="1.2"/><path d="M1767 14.5 Q1767 13 1768.5 13 H1771.5 L1773.5 10.5 H1780.5 L1782.5 13 H1786 Q1787.5 13 1787.5 14.5 V25 Q1787.5 26.5 1786 26.5 H1768.5 Q1767 26.5 1767 25 Z" fill="none" stroke="#dbdbdb" stroke-width="1.2"/><circle cx="1777.2" cy="19.5" r="3.8" fill="none" stroke="#dbdbdb" stroke-width="1.2"/><path d="M26.5 56 V63.5 M26.5 71 V79 M15 67.5 H23 M30 67.5 H38" fill="none" stroke="#f0f0f0" stroke-width="1.5"/><path d="M18.7 111.6 L32.6 97.9" fill="none" stroke="#dbdbdb" stroke-width="1.2"/><circle cx="17.1" cy="113.2" r="2.2" fill="none" stroke="#dbdbdb" stroke-width="1.2"/><circle cx="34.2" cy="96.3" r="2.2" fill="none" stroke="#dbdbdb" stroke-width="1.2"/><path d="M15 133.5 H37 M15 139.5 H34.3 M15 145.5 H37 M17.8 151.5 H37" fill="none" stroke="#dbdbdb" stroke-width="1.2"/><circle cx="36.6" cy="139.5" r="2.2" fill="none" stroke="#dbdbdb" stroke-width="1.2"/><circle cx="15.6" cy="151.3" r="2.2" fill="none" stroke="#dbdbdb" stroke-width="1.2"/><path d="M17.1 189.7 L20.5 172.6 L24.1 179.3 L32.1 172.6 L35.5 186.3 M17.1 189.7 L24.1 179.3 L35.5 186.3" fill="none" stroke="#dbdbdb" stroke-width="1.2"/><circle cx="17.1" cy="189.7" r="2.2" fill="#0f0f0f" stroke="#dbdbdb" stroke-width="1.2"/><circle cx="20.5" cy="172.6" r="2.2" fill="#0f0f0f" stroke="#dbdbdb" stroke-width="1.2"/><circle cx="24.1" cy="179.3" r="2.2" fill="#0f0f0f" stroke="#dbdbdb" stroke-width="1.2"/><circle cx="32.1" cy="172.6" r="2.2" fill="#0f0f0f" stroke="#dbdbdb" stroke-width="1.2"/><circle cx="35.5" cy="186.3" r="2.2" fill="#0f0f0f" stroke="#dbdbdb" stroke-width="1.2"/><path d="M18.5 211.5 H36 M18.5 221.5 H32 M18.5 227.5 H36" fill="none" stroke="#dbdbdb" stroke-width="1.2"/><path d="M20 218 L33 213" fill="none" stroke="#dbdbdb" stroke-width="1.2" stroke-dasharray="1.5 2.5"/><circle cx="16.3" cy="211.5" r="2.2" fill="#0f0f0f" stroke="#dbdbdb" stroke-width="1.2"/><circle cx="16.3" cy="221.5" r="2.2" fill="#0f0f0f" stroke="#dbdbdb" stroke-width="1.2"/><circle cx="16.3" cy="227.5" r="2.2" fill="#0f0f0f" stroke="#dbdbdb" stroke-width="1.2"/><circle cx="34.2" cy="221.5" r="2.2" fill="#0f0f0f" stroke="#dbdbdb" stroke-width="1.2"/><path d="M14.6 265.5 L21 257.5 Q24 254.5 27.5 255.5 Q30.5 257 29.8 260.5 Q29 264.5 25 265.5 Z M29.5 250 Q29 255.5 32.5 255.5 L39.5 249" fill="none" stroke="#dbdbdb" stroke-width="1.2"/><path d="M19 290 V286.5 H34 V290 M26.5 286.5 V303.5 M23 303.5 H30" fill="none" stroke="#dbdbdb" stroke-width="1.2"/><circle cx="26" cy="332.8" r="10.8" fill="none" stroke="#dbdbdb" stroke-width="1.2"/><path d="M21.5 335 Q26 340 30.5 335" fill="none" stroke="#dbdbdb" stroke-width="1.2"/><circle cx="22.5" cy="329.5" r="0.9" fill="#dbdbdb"/><circle cx="29.5" cy="329.5" r="0.9" fill="#dbdbdb"/><line x1="8" y1="358.5" x2="44" y2="358.5" stroke="#2e2e2e" stroke-width="1"/><line x1="8" y1="447.5" x2="44" y2="447.5" stroke="#2e2e2e" stroke-width="1"/><line x1="8" y1="650.5" x2="44" y2="650.5" stroke="#2e2e2e" stroke-width="1"/><path d="M14.5 390 L31 373.5 L37.5 380 L21 396.5 Z M19 385.5 L21 387.5 M22.5 382 L25.5 385 M26 378.5 L28 380.5 M29.5 375 L32.5 378" fill="none" stroke="#dbdbdb" stroke-width="1.2"/><circle cx="24.5" cy="419.5" r="7.8" fill="none" stroke="#dbdbdb" stroke-width="1.2"/><path d="M30 425 L34 429 M20.5 419.5 H28.5 M24.5 415.5 V423.5" fill="none" stroke="#dbdbdb" stroke-width="1.2"/><path d="M18.5 482 V470 Q18.5 462 26 462 Q33.5 462 33.5 470 V482 H29.5 V470 Q29.5 466.5 26 466.5 Q22.5 466.5 22.5 470 V482 Z M18.5 477 H22.5 M29.5 477 H33.5" fill="none" stroke="#dbdbdb" stroke-width="1.2"/><path d="M16 517 L17 511 L28 500 Q30 498 32 500 Q34 502 32 504 L21 515 Z M26 502 L30 506" fill="none" stroke="#dbdbdb" stroke-width="1.2"/><rect x="27.5" y="514" width="9" height="7" rx="1" fill="none" stroke="#dbdbdb" stroke-width="1.2"/><path d="M29.5 514 V511.5 Q29.5 509 32 509 Q34.5 509 34.5 511.5" fill="none" stroke="#dbdbdb" stroke-width="1.2"/><rect x="18" y="546" width="16" height="12.5" rx="1.5" fill="none" stroke="#dbdbdb" stroke-width="1.2"/><path d="M21 546 V542 Q21 537.5 25.5 537.5 Q30 537.5 30.5 541" fill="none" stroke="#dbdbdb" stroke-width="1.2"/><path d="M26 550 V554" fill="none" stroke="#dbdbdb" stroke-width="1.6"/><path d="M15 583 Q25 569 35 583 Q25 597 15 583 Z" fill="none" stroke="#dbdbdb" stroke-width="1.2"/><circle cx="25" cy="583" r="4.2" fill="none" stroke="#dbdbdb" stroke-width="1.2"/><path d="M26.3 597.6 Q28 593 31.5 593.5 Q32.5 596 30 597.5 Z M32.5 595 L36.6 591.7" fill="none" stroke="#dbdbdb" stroke-width="1.2"/><g transform="translate(26 624.6) rotate(-45) scale(0.88)"><path d="M-1.5 -4.3 H-9.3 A4.3 4.3 0 0 0 -9.3 4.3 H-3.5 M1.5 4.3 H9.3 A4.3 4.3 0 0 0 9.3 -4.3 H3.5 M-4 0 H4" fill="none" stroke="#dbdbdb" stroke-width="1.2"/></g><path d="M17 668.5 H35 M22.5 668.5 V666 H29.5 V668.5 M19 668.5 L20.5 685.5 H31.5 L33 668.5" fill="none" stroke="#dbdbdb" stroke-width="1.2"/><circle cx="-2.5" cy="992" r="19.5" fill="#ffffff"/><circle cx="-2.5" cy="992" r="15.8" fill="none" stroke="#3d5afe" stroke-width="4.2"/><path d="M26 1030 L28.6 1036.6 L35.8 1037 L30.2 1041.5 L32.1 1048.5 L26 1044.5 L19.9 1048.5 L21.8 1041.5 L16.2 1037 L23.4 1036.6 Z" fill="none" stroke="#dbdbdb" stroke-width="1.2"/><path d="M1910.3 55.5 H1929.7 V78 L1920 74 L1910.3 78 Z M1914 61 H1926 M1914 65.5 H1926 M1914 70 H1926" fill="none" stroke="#dbdbdb" stroke-width="1.2"/><circle cx="1919.6" cy="112.5" r="9.8" fill="none" stroke="#dbdbdb" stroke-width="1.2"/><path d="M1919 106.5 V113 H1914.5 M1907.5 104.5 L1912 100.5 M1931.5 104.5 L1927 100.5" fill="none" stroke="#dbdbdb" stroke-width="1.2"/><path d="M1909 155 L1919.6 148.5 L1930.2 155 L1919.6 161.5 Z M1909 160 L1919.6 166.5 L1930.2 160" fill="none" stroke="#dbdbdb" stroke-width="1.2"/><path d="M1908.5 212 V197 Q1908.5 193.5 1912 193.5 H1923 Q1926.5 193.5 1926.5 197 V203.5 Q1926.5 207 1923 207 H1914 Z M1926.5 200.5 Q1931 200.5 1931 204 V217 L1926 212.5 H1920 Q1917 212.5 1917 209" fill="none" stroke="#dbdbdb" stroke-width="1.2"/><circle cx="1919.8" cy="772.8" r="13.6" fill="none" stroke="#dbdbdb" stroke-width="1.2"/><circle cx="1919.8" cy="772.8" r="7.4" fill="none" stroke="#dbdbdb" stroke-width="1.2"/><circle cx="1919.8" cy="772.8" r="1.6" fill="#dbdbdb"/><path d="M1919.8 772.8 L1926.8 765.3" fill="none" stroke="#dbdbdb" stroke-width="1.2"/><path d="M1912 820 L1907 827.5 H1932.8 L1927.5 819.5 M1910 823 L1920 805.5 L1929.5 820.5 L1922 824 L1919 819.5 Z" fill="none" stroke="#dbdbdb" stroke-width="1.2" stroke-linejoin="round"/><rect x="1908.2" y="853.5" width="23.2" height="18.6" rx="3.5" fill="none" stroke="#dbdbdb" stroke-width="1.2"/><rect x="1912.3" y="849.6" width="3.2" height="6" rx="1.6" fill="#0f0f0f" stroke="#dbdbdb" stroke-width="1.2"/><rect x="1924.3" y="849.6" width="3.2" height="6" rx="1.6" fill="#0f0f0f" stroke="#dbdbdb" stroke-width="1.2"/><path d="M1908.5 906.5 A12 12 0 0 1 1920.5 918.5 M1908.5 901 A17.5 17.5 0 0 1 1926 918.5 M1908.5 895.5 A23 23 0 0 1 1931.5 918.5" fill="none" stroke="#dbdbdb" stroke-width="1.2"/><circle cx="1910.3" cy="915.2" r="1.9" fill="none" stroke="#dbdbdb" stroke-width="1.2"/><circle cx="1927.5" cy="896" r="9" fill="#f23645"/><path d="M1908.5 959.5 H1931 Q1928 957 1928 952 V948.5 Q1928 940 1919.8 940 Q1911.5 940 1911.5 948.5 V952 Q1911.5 957 1908.5 959.5 Z M1915.5 960 Q1915.5 964 1919.8 964 Q1924 964 1924 960" fill="none" stroke="#dbdbdb" stroke-width="1.2"/><circle cx="1927.5" cy="941.5" r="9" fill="#f23645"/><circle cx="1919.6" cy="998.8" r="17" fill="#f2f2f2"/><circle cx="1913.1" cy="992.3" r="2.1" fill="#0f0f0f"/><circle cx="1913.1" cy="998.8" r="2.1" fill="#0f0f0f"/><circle cx="1913.1" cy="1005.3" r="2.1" fill="#0f0f0f"/><circle cx="1919.6" cy="992.3" r="2.1" fill="#0f0f0f"/><circle cx="1919.6" cy="998.8" r="2.1" fill="#0f0f0f"/><circle cx="1919.6" cy="1005.3" r="2.1" fill="#0f0f0f"/><circle cx="1926.1" cy="992.3" r="2.1" fill="#0f0f0f"/><circle cx="1926.1" cy="998.8" r="2.1" fill="#0f0f0f"/><circle cx="1926.1" cy="1005.3" r="2.1" fill="#0f0f0f"/><line x1="1903" y1="1026.5" x2="1935" y2="1026.5" stroke="#2e2e2e" stroke-width="1"/><circle cx="1919.8" cy="1055.8" r="13.8" fill="none" stroke="#dbdbdb" stroke-width="1.2"/><path d="M1915.5 1052 Q1915.5 1047 1920 1047 Q1924.5 1047 1924.5 1051 Q1924.5 1054 1920.5 1056 V1059" fill="none" stroke="#dbdbdb" stroke-width="1.2"/><circle cx="1920.2" cy="1062.3" r="1" fill="none" stroke="#dbdbdb" stroke-width="1.2"/><path d="M67.7 983.8 H80.5 V999 H74.5 V990 H67.7 Z" fill="#d9d9d9"/><circle cx="84.3" cy="987.6" r="3.3" fill="#d9d9d9"/><path d="M88 999 L92.5 983.8 H98.2 L93.5 999 Z" fill="#d9d9d9"/><path d="M1856.6 1022 H1864.2 L1867.6 1027.5 L1864.2 1033 H1856.6 L1853.2 1027.5 Z" fill="none" stroke="#dbdbdb" stroke-width="1.2"/><circle cx="1860.4" cy="1027.5" r="1.8" fill="none" stroke="#dbdbdb" stroke-width="1.2"/><circle cx="74" cy="58" r="9" fill="#f7931a"/><path d="M487 52.5 H499 L495.5 58.2 L499 64 H487 Z" fill="#f9c22e"/></svg>
<div class="t" style="left:-159.00px;width:400px;text-align:center;top:5.38px;font-size:10px;line-height:10px;color:#ffffff;font-weight:bold;-webkit-text-stroke:0;">11</div>
<div class="t" style="left:68.00px;top:13.13px;font-size:12.8px;line-height:12.8px;color:#dbdbdb;font-weight:bold;-webkit-text-stroke:0;">BTCUSDT.P</div>
<div class="t" style="left:1727.50px;width:400px;text-align:center;top:891.14px;font-size:10.5px;line-height:10.5px;color:#ffffff;font-weight:bold;-webkit-text-stroke:0;">24</div>
<div class="t" style="left:1727.50px;width:400px;text-align:center;top:936.64px;font-size:10.5px;line-height:10.5px;color:#ffffff;font-weight:bold;-webkit-text-stroke:0;">10</div>
<div class="t" style="left:-126.00px;width:400px;text-align:center;top:53.00px;font-size:11px;line-height:11px;color:#ffffff;font-weight:bold;-webkit-text-stroke:0;">₿</div>
<div class="t" style="left:87.30px;top:51.82px;font-size:14.9px;line-height:14.9px;color:#dbdbdb;font-weight:normal;">Bitcoin / TetherUS PERPETUAL CONTRACT · 1 · Binance</div>
<div class="t" style="left:511.20px;top:52.83px;font-size:12.6px;line-height:12.6px;color:#b8b8b8;font-weight:normal;">O</div>
<div class="t" style="left:519.80px;top:52.83px;font-size:12.6px;line-height:12.6px;color:#e8e8e8;font-weight:bold;-webkit-text-stroke:0;">67,302.6</div>
<div class="t" style="left:577.50px;top:52.83px;font-size:12.6px;line-height:12.6px;color:#b8b8b8;font-weight:normal;">H</div>
<div class="t" style="left:585.90px;top:52.83px;font-size:12.6px;line-height:12.6px;color:#e8e8e8;font-weight:bold;-webkit-text-stroke:0;">67,315.4</div>
<div class="t" style="left:643.60px;top:52.83px;font-size:12.6px;line-height:12.6px;color:#b8b8b8;font-weight:normal;">L</div>
<div class="t" style="left:650.30px;top:52.83px;font-size:12.6px;line-height:12.6px;color:#e8e8e8;font-weight:bold;-webkit-text-stroke:0;">67,302.6</div>
<div class="t" style="left:707.50px;top:52.83px;font-size:12.6px;line-height:12.6px;color:#b8b8b8;font-weight:normal;">C</div>
<div class="t" style="left:716.00px;top:52.83px;font-size:12.6px;line-height:12.6px;color:#e8e8e8;font-weight:bold;-webkit-text-stroke:0;">67,315.4</div>
<div class="t" style="left:773.20px;top:52.83px;font-size:12.6px;line-height:12.6px;color:#e8e8e8;font-weight:bold;-webkit-text-stroke:0;">+12.7</div>
<div class="t" style="left:808.40px;top:52.83px;font-size:12.6px;line-height:12.6px;color:#e8e8e8;font-weight:bold;-webkit-text-stroke:0;">(+0.02%)</div>
<div class="t" style="left:65.30px;top:573.12px;font-size:12.2px;line-height:12.2px;color:#dbdbdb;font-weight:normal;">Axiom RSI Osc Pro</div>
<div class="t" style="left:177.30px;top:573.12px;font-size:12.2px;line-height:12.2px;color:#22ab94;font-weight:normal;">1.5</div>
<div class="t" style="left:202.00px;top:573.12px;font-size:12.2px;line-height:12.2px;color:#00bcd4;font-weight:normal;">14.7</div>
<div class="t" style="left:232.90px;top:573.12px;font-size:12.2px;line-height:12.2px;color:#2962ff;font-weight:normal;">25.1</div>
<div class="t" style="left:362.30px;top:573.12px;font-size:12.2px;line-height:12.2px;color:#f23645;font-weight:normal;">13.8</div>
<div class="t" style="left:393.60px;top:573.12px;font-size:12.2px;line-height:12.2px;color:#787b86;font-weight:normal;">15.1</div>
<div class="t" style="left:67.60px;width:400px;text-align:center;top:573.12px;font-size:12.2px;line-height:12.2px;color:#cfcfcf;font-weight:bold;-webkit-text-stroke:0;transform:scaleX(0.78);">Ø</div>
<div class="t" style="left:81.60px;width:400px;text-align:center;top:573.12px;font-size:12.2px;line-height:12.2px;color:#cfcfcf;font-weight:bold;-webkit-text-stroke:0;transform:scaleX(0.78);">Ø</div>
<div class="t" style="left:95.60px;width:400px;text-align:center;top:573.12px;font-size:12.2px;line-height:12.2px;color:#cfcfcf;font-weight:bold;-webkit-text-stroke:0;transform:scaleX(0.78);">Ø</div>
<div class="t" style="left:109.90px;width:400px;text-align:center;top:573.12px;font-size:12.2px;line-height:12.2px;color:#cfcfcf;font-weight:bold;-webkit-text-stroke:0;transform:scaleX(0.78);">Ø</div>
<div class="t" style="left:123.60px;width:400px;text-align:center;top:573.12px;font-size:12.2px;line-height:12.2px;color:#cfcfcf;font-weight:bold;-webkit-text-stroke:0;transform:scaleX(0.78);">Ø</div>
<div class="t" style="left:137.60px;width:400px;text-align:center;top:573.12px;font-size:12.2px;line-height:12.2px;color:#cfcfcf;font-weight:bold;-webkit-text-stroke:0;transform:scaleX(0.78);">Ø</div>
<div class="t" style="left:151.60px;width:400px;text-align:center;top:573.12px;font-size:12.2px;line-height:12.2px;color:#cfcfcf;font-weight:bold;-webkit-text-stroke:0;transform:scaleX(0.78);">Ø</div>
<div class="t" style="left:-121.70px;width:400px;text-align:center;top:1054.84px;font-size:13.2px;line-height:13.2px;color:#dbdbdb;font-weight:normal;">1D</div>
<div class="t" style="left:-93.70px;width:400px;text-align:center;top:1054.84px;font-size:13.2px;line-height:13.2px;color:#dbdbdb;font-weight:normal;">5D</div>
<div class="t" style="left:-64.70px;width:400px;text-align:center;top:1054.84px;font-size:13.2px;line-height:13.2px;color:#dbdbdb;font-weight:normal;">1M</div>
<div class="t" style="left:-35.80px;width:400px;text-align:center;top:1054.84px;font-size:13.2px;line-height:13.2px;color:#dbdbdb;font-weight:normal;">3M</div>
<div class="t" style="left:-6.60px;width:400px;text-align:center;top:1054.84px;font-size:13.2px;line-height:13.2px;color:#dbdbdb;font-weight:normal;">6M</div>
<div class="t" style="left:26.10px;width:400px;text-align:center;top:1054.84px;font-size:13.2px;line-height:13.2px;color:#dbdbdb;font-weight:normal;">YTD</div>
<div class="t" style="left:58.40px;width:400px;text-align:center;top:1054.84px;font-size:13.2px;line-height:13.2px;color:#dbdbdb;font-weight:normal;">1Y</div>
<div class="t" style="left:85.60px;width:400px;text-align:center;top:1054.84px;font-size:13.2px;line-height:13.2px;color:#dbdbdb;font-weight:normal;">5Y</div>
<div class="t" style="left:113.20px;width:400px;text-align:center;top:1054.84px;font-size:13.2px;line-height:13.2px;color:#dbdbdb;font-weight:normal;">All</div>
<div class="p" style="left:332px;top:1050px;width:1px;height:21px;background:#3a3a3a;"></div>
<svg class="ic" style="left:340px;top:1046px" width="30" height="30" viewBox="340 1046 30 30"><path d="M346.5 1066 V1068.5 H364.5 V1054 H346.5 V1061 M346.5 1057 H364.5 M350.5 1052 V1055.5 M360.5 1052 V1055.5 M345.5 1065 H354 M351.5 1062.5 L354 1065 L351.5 1067.5" fill="none" stroke="#dbdbdb" stroke-width="1.2"/></svg>
<div class="t" style="left:1482.50px;width:400px;text-align:right;top:1054.69px;font-size:13.5px;line-height:13.5px;color:#dbdbdb;font-weight:normal;">23:18:34 UTC</div>
</body></html>
